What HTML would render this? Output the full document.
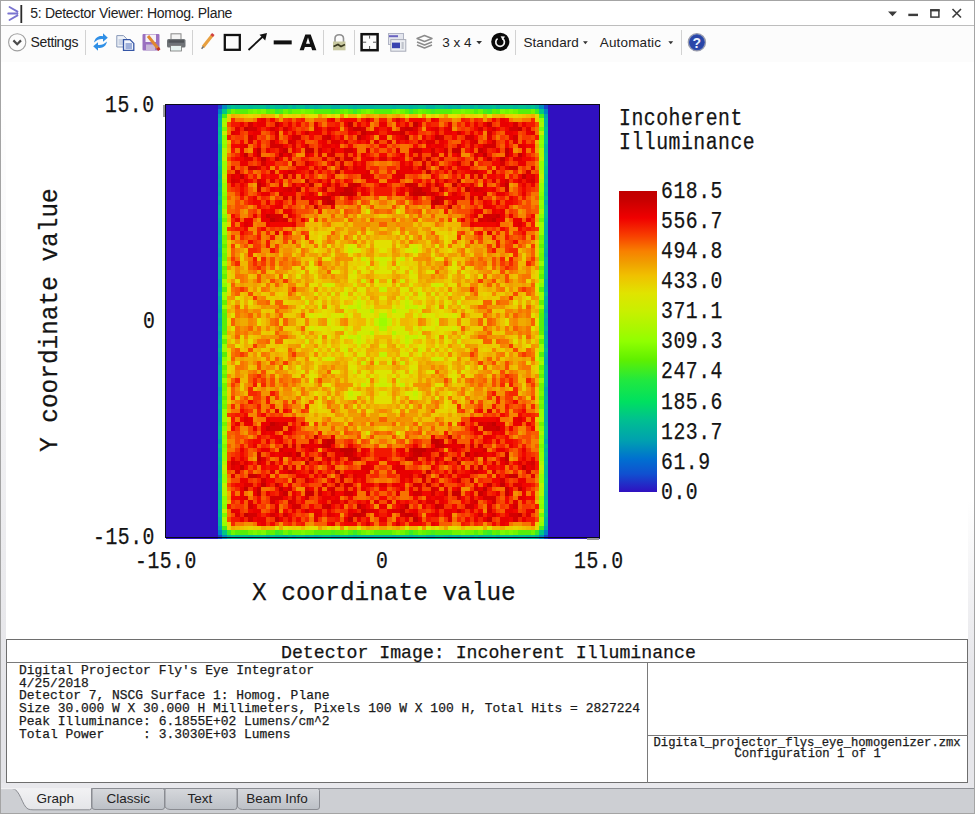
<!DOCTYPE html>
<html><head><meta charset="utf-8"><style>
html,body{margin:0;padding:0;width:975px;height:814px;overflow:hidden;background:#fff;position:relative}
.m{position:absolute;font-family:"Liberation Mono",monospace;white-space:pre;transform-origin:0 0;-webkit-text-stroke:0.25px currentColor}
.s{position:absolute;font-family:"Liberation Sans",sans-serif;white-space:pre}
</style></head><body>
<div style="position:absolute;left:0px;top:0px;width:975px;height:814px;box-sizing:border-box;border:1px solid #a4a4a4;"></div><div style="position:absolute;left:1px;top:100px;width:5px;height:683px;background:linear-gradient(#ffffff,#e4e4e8 90%);"></div><div style="position:absolute;left:968px;top:500px;width:6px;height:283px;background:linear-gradient(#ffffff,#e6e6ea 60%);"></div><div style="position:absolute;left:1px;top:25px;width:973px;height:1px;background:#bdbdbd;"></div><svg style="position:absolute;left:6px;top:4px" width="18" height="20" viewBox="0 0 18 20">
<path d="M3.5 3 L11.5 7.6 M2.2 9.5 H11.5 M3.5 16 L11.5 11.4" stroke="#7a74d0" stroke-width="1.8" fill="none" stroke-linecap="round"/>
<path d="M15.3 1 V19" stroke="#2a2a2a" stroke-width="1.8"/>
</svg><div class="s" style="left:30.30px;top:6.45px;font-size:14px;line-height:14px;letter-spacing:-0.3px;color:#222;">5: Detector Viewer: Homog. Plane</div><svg style="position:absolute;left:880px;top:5px" width="90" height="16" viewBox="0 0 90 16">
<path d="M8 6.5 H17 L12.5 11.2 Z" fill="#3c3c3c"/>
<rect x="28.3" y="8.7" width="9.7" height="2.4" fill="#3c3c3c"/>
<rect x="50.9" y="4.9" width="8" height="7.2" fill="none" stroke="#3c3c3c" stroke-width="1.5"/>
<rect x="50.2" y="4.2" width="9.4" height="2.2" fill="#3c3c3c"/>
<path d="M72.5 4 L81 12.5 M81 4 L72.5 12.5" stroke="#3c3c3c" stroke-width="1.6"/>
</svg><div style="position:absolute;left:1px;top:26px;width:973px;height:36px;background:#fcfcfc;"></div><div style="position:absolute;left:85px;top:30px;width:1px;height:25px;background:#d2d2d2;"></div><div style="position:absolute;left:192px;top:30px;width:1px;height:25px;background:#d2d2d2;"></div><div style="position:absolute;left:323px;top:30px;width:1px;height:25px;background:#d2d2d2;"></div><div style="position:absolute;left:354px;top:30px;width:1px;height:25px;background:#d2d2d2;"></div><div style="position:absolute;left:515px;top:30px;width:1px;height:25px;background:#d2d2d2;"></div><div style="position:absolute;left:681px;top:30px;width:1px;height:25px;background:#d2d2d2;"></div><svg style="position:absolute;left:0;top:26px" width="975" height="34" viewBox="0 26 975 34">
<circle cx="17.2" cy="42.3" r="8.6" fill="none" stroke="#a0a0a0" stroke-width="1.1"/>
<path d="M13.4 40.4 L17.2 44.2 L21 40.4" fill="none" stroke="#4a4a4a" stroke-width="2.2"/>
<!-- refresh -->
<path d="M94 42.5 C95 37.5 99 35.3 103 36.3 L103 33.3 L107.8 37.8 L103 41.8 L103 39 C100 38.6 97 39.6 94 42.5 Z" fill="#2f8fe6"/>
<path d="M107 41.5 C106 46.5 102 48.7 98 47.7 L98 50.7 L93.2 46.2 L98 42.2 L98 45 C101 45.4 104 44.4 107 41.5 Z" fill="#2f8fe6"/>
<!-- copy -->
<path d="M116.8 35.6 H123.5 L126.5 38.6 V47 H116.8 Z" fill="#eef2f8" stroke="#8898b8" stroke-width="1"/>
<path d="M118.5 40 H124 M118.5 42 H124 M118.5 44 H124" stroke="#98a8c8" stroke-width="0.8"/>
<path d="M123.5 39.6 H130 L133.8 43.4 V50.4 H123.5 Z" fill="#f2f6fd" stroke="#3556a6" stroke-width="1.3"/>
<path d="M125.5 44 H132 M125.5 46 H132 M125.5 48 H132" stroke="#4a6ab8" stroke-width="1"/>
<!-- save -->
<rect x="142.5" y="34" width="17" height="16.5" rx="1" fill="#9a70c0"/>
<rect x="145.5" y="34.5" width="10.5" height="7.5" fill="#f4f0f8"/>
<rect x="146" y="44.5" width="9" height="6" fill="#c8b8d8"/>
<path d="M148 36 L158.5 49" stroke="#e08830" stroke-width="3"/>
<path d="M157.6 47.8 L159.3 50.2" stroke="#c03020" stroke-width="3"/>
<!-- printer -->
<rect x="171" y="33.8" width="10" height="6" fill="#f4f4f4" stroke="#888" stroke-width="1"/>
<rect x="167" y="39" width="18.5" height="8.5" rx="1.5" fill="#707478"/>
<rect x="168.5" y="40.2" width="15.5" height="2.5" fill="#505458"/>
<rect x="170.5" y="45.5" width="11" height="5.5" fill="#e8f4f0" stroke="#777" stroke-width="0.8"/>
<!-- pencil -->
<path d="M203 47 L212.5 35" stroke="#e8a040" stroke-width="3.2" stroke-linecap="butt"/>
<path d="M211.7 36 L213.3 34" stroke="#d04040" stroke-width="3.2"/>
<path d="M201.6 48.8 L203.5 46.5" stroke="#707070" stroke-width="1.5"/>
<!-- rect -->
<rect x="224.8" y="35" width="15" height="14.8" fill="none" stroke="#111" stroke-width="2.3"/>
<!-- arrow -->
<path d="M248.5 50 L265 34.5" stroke="#111" stroke-width="1.8"/>
<path d="M267 33 L259.5 34.8 L265.2 40.5 Z" fill="#111"/>
<!-- line -->
<rect x="273.7" y="40.4" width="18" height="4" fill="#111"/>
<!-- A -->
<path fill-rule="evenodd" fill="#111" d="M299.6 50.3 L305.3 34.6 H310.7 L316.4 50.3 H312.2 L311.1 47.1 H304.9 L303.8 50.3 Z M306 43.8 H310 L308 37.6 Z"/>
<!-- lock -->
<path d="M335 42 V38.5 C335 33.5 343.5 33.5 343.5 38.5 V42" fill="none" stroke="#909090" stroke-width="1.6"/>
<rect x="333" y="41.5" width="12.5" height="8.8" fill="#c8c8a0"/>
<path d="M333.5 46.5 L338 44.5 L341 46.5 L345 44.5" stroke="#3a3a20" stroke-width="1.6" fill="none"/>
<!-- fit -->
<rect x="361.6" y="34.2" width="16" height="16" fill="none" stroke="#111" stroke-width="2.5"/>
<path d="M369.6 35.5 V38.6 M369.6 46 V49 M363 42.2 H366.2 M373 42.2 H376.2" stroke="#555" stroke-width="1"/>
<!-- window -->
<rect x="388.5" y="33.5" width="15" height="11" fill="#e4e6ee" stroke="#b0b4c4" stroke-width="1"/>
<rect x="389" y="35.2" width="9" height="2" fill="#6a64c0"/>
<rect x="390.8" y="39.6" width="15" height="11.6" fill="#eceef2" stroke="#a8acb8" stroke-width="1"/>
<rect x="392" y="42.6" width="8" height="5.6" fill="#3a44b0"/>
<rect x="401.5" y="42" width="2.2" height="7" fill="#c0c4cc"/>
<!-- layers -->
<path d="M417 38.5 L424.5 35.5 L432 38.5 L424.5 41.5 Z M417 42 L424.5 45 L432 42 M417 45 L424.5 48 L432 45" fill="none" stroke="#8c8c8c" stroke-width="1.4" stroke-linejoin="round"/>
<!-- dropdown arrows -->
<path d="M476.3 41 H482 L479.15 44.2 Z" fill="#333"/>
<path d="M583 41.3 H587.8 L585.4 44.3 Z" fill="#333"/>
<path d="M668.3 41.3 H673.2 L670.75 44.3 Z" fill="#333"/>
<!-- timer -->
<circle cx="500.3" cy="41.8" r="9.1" fill="#0a0a0a"/>
<path d="M502.6 38.6 A4.3 4.3 0 1 1 497.6 38.6" fill="none" stroke="#f4f4f4" stroke-width="1.7"/>
<path d="M500.6 36.2 L505 36.4 L502.6 40.2 Z" fill="#f4f4f4"/>
<!-- help -->
<circle cx="696.9" cy="42.3" r="8.6" fill="#3558b8" stroke="#9a9cac" stroke-width="1.3"/>
<circle cx="696.9" cy="42.3" r="7.4" fill="#2a46a8"/>
<text x="692.6" y="47.8" font-family="Liberation Sans" font-weight="bold" font-size="14" fill="#e8f0ff">?</text>
</svg><div class="s" style="left:30.60px;top:34.95px;font-size:14px;line-height:14px;letter-spacing:-0.4px;color:#222;">Settings</div><div class="s" style="left:442.30px;top:35.87px;font-size:13.5px;line-height:13.5px;letter-spacing:0px;color:#222;">3 x 4</div><div class="s" style="left:523.40px;top:36.37px;font-size:13.5px;line-height:13.5px;letter-spacing:0.1px;color:#222;">Standard</div><div class="s" style="left:599.80px;top:36.37px;font-size:13.5px;line-height:13.5px;letter-spacing:0.15px;color:#222;">Automatic</div><div style="position:absolute;left:166px;top:105px;width:434px;height:434px;overflow:hidden;background:#3010c0"><svg width="434" height="434" viewBox="0 0 100 100" preserveAspectRatio="none" shape-rendering="crispEdges" style="display:block"><rect width="100" height="100" fill="#3010c0"/><path fill="#1743cd" d="M12 0h1v1h-1zM87 0h1v1h-1zM12 99h1v1h-1zM87 99h1v1h-1z"/><path fill="#007ec7" d="M12 1h1v1h-1zM87 1h1v1h-1zM12 98h1v1h-1zM87 98h1v1h-1z"/><path fill="#008abe" d="M13 0h1v1h-1zM86 0h1v1h-1zM13 99h1v1h-1zM86 99h1v1h-1z"/><path fill="#00a2ae" d="M12 2h1v1h-1zM87 2h1v1h-1zM12 34h1v1h-1zM87 34h1v1h-1zM12 40h1v1h-1zM87 40h1v1h-1zM12 41h1v1h-1zM87 41h1v1h-1zM12 47h1v1h-1zM87 47h1v1h-1zM12 52h1v1h-1zM87 52h1v1h-1zM12 58h1v1h-1zM87 58h1v1h-1zM12 59h1v1h-1zM87 59h1v1h-1zM12 65h1v1h-1zM87 65h1v1h-1zM12 97h1v1h-1zM87 97h1v1h-1z"/><path fill="#00a9a7" d="M12 22h1v1h-1zM87 22h1v1h-1zM12 27h1v1h-1zM87 27h1v1h-1zM12 28h1v1h-1zM87 28h1v1h-1zM12 29h1v1h-1zM87 29h1v1h-1zM12 31h1v1h-1zM87 31h1v1h-1zM12 33h1v1h-1zM87 33h1v1h-1zM12 42h1v1h-1zM87 42h1v1h-1zM12 44h1v1h-1zM87 44h1v1h-1zM12 46h1v1h-1zM87 46h1v1h-1zM12 49h1v1h-1zM87 49h1v1h-1zM12 50h1v1h-1zM87 50h1v1h-1zM12 53h1v1h-1zM87 53h1v1h-1zM12 55h1v1h-1zM87 55h1v1h-1zM12 57h1v1h-1zM87 57h1v1h-1zM12 66h1v1h-1zM87 66h1v1h-1zM12 68h1v1h-1zM87 68h1v1h-1zM12 70h1v1h-1zM87 70h1v1h-1zM12 71h1v1h-1zM87 71h1v1h-1zM12 72h1v1h-1zM87 72h1v1h-1zM12 77h1v1h-1zM87 77h1v1h-1z"/><path fill="#00b19f" d="M14 0h1v1h-1zM23 0h1v1h-1zM27 0h1v1h-1zM29 0h1v1h-1zM32 0h1v1h-1zM34 0h1v1h-1zM38 0h2v1h-2zM43 0h1v1h-1zM47 0h1v1h-1zM52 0h1v1h-1zM56 0h1v1h-1zM60 0h2v1h-2zM65 0h1v1h-1zM67 0h1v1h-1zM70 0h1v1h-1zM72 0h1v1h-1zM76 0h1v1h-1zM85 0h1v1h-1zM12 3h1v1h-1zM87 3h1v1h-1zM12 4h1v1h-1zM87 4h1v1h-1zM12 9h1v1h-1zM87 9h1v1h-1zM12 10h1v1h-1zM87 10h1v1h-1zM12 16h1v1h-1zM87 16h1v1h-1zM12 18h1v1h-1zM87 18h1v1h-1zM12 20h1v1h-1zM87 20h1v1h-1zM12 26h1v1h-1zM87 26h1v1h-1zM12 30h1v1h-1zM87 30h1v1h-1zM12 32h1v1h-1zM87 32h1v1h-1zM12 35h1v1h-1zM87 35h1v1h-1zM12 36h1v1h-1zM87 36h1v1h-1zM12 37h1v1h-1zM87 37h1v1h-1zM12 38h1v1h-1zM87 38h1v1h-1zM12 39h1v1h-1zM87 39h1v1h-1zM12 45h1v1h-1zM87 45h1v1h-1zM12 48h1v1h-1zM87 48h1v1h-1zM12 51h1v1h-1zM87 51h1v1h-1zM12 54h1v1h-1zM87 54h1v1h-1zM12 60h1v1h-1zM87 60h1v1h-1zM12 61h1v1h-1zM87 61h1v1h-1zM12 62h1v1h-1zM87 62h1v1h-1zM12 63h1v1h-1zM87 63h1v1h-1zM12 64h1v1h-1zM87 64h1v1h-1zM12 67h1v1h-1zM87 67h1v1h-1zM12 69h1v1h-1zM87 69h1v1h-1zM12 73h1v1h-1zM87 73h1v1h-1zM12 79h1v1h-1zM87 79h1v1h-1zM12 81h1v1h-1zM87 81h1v1h-1zM12 83h1v1h-1zM87 83h1v1h-1zM12 89h1v1h-1zM87 89h1v1h-1zM12 90h1v1h-1zM87 90h1v1h-1zM12 95h1v1h-1zM87 95h1v1h-1zM12 96h1v1h-1zM87 96h1v1h-1zM14 99h1v1h-1zM23 99h1v1h-1zM27 99h1v1h-1zM29 99h1v1h-1zM32 99h1v1h-1zM34 99h1v1h-1zM38 99h2v1h-2zM43 99h1v1h-1zM47 99h1v1h-1zM52 99h1v1h-1zM56 99h1v1h-1zM60 99h2v1h-2zM65 99h1v1h-1zM67 99h1v1h-1zM70 99h1v1h-1zM72 99h1v1h-1zM76 99h1v1h-1zM85 99h1v1h-1z"/><path fill="#00b898" d="M16 0h1v1h-1zM19 0h1v1h-1zM25 0h2v1h-2zM33 0h1v1h-1zM35 0h1v1h-1zM42 0h1v1h-1zM44 0h3v1h-3zM48 0h4v1h-4zM53 0h3v1h-3zM57 0h1v1h-1zM64 0h1v1h-1zM66 0h1v1h-1zM73 0h2v1h-2zM80 0h1v1h-1zM83 0h1v1h-1zM12 6h1v1h-1zM87 6h1v1h-1zM12 11h1v1h-1zM87 11h1v1h-1zM12 12h1v1h-1zM87 12h1v1h-1zM12 14h1v1h-1zM87 14h1v1h-1zM12 15h1v1h-1zM87 15h1v1h-1zM12 17h1v1h-1zM87 17h1v1h-1zM12 19h1v1h-1zM87 19h1v1h-1zM12 23h1v1h-1zM87 23h1v1h-1zM12 24h1v1h-1zM87 24h1v1h-1zM12 25h1v1h-1zM87 25h1v1h-1zM12 43h1v1h-1zM87 43h1v1h-1zM12 56h1v1h-1zM87 56h1v1h-1zM12 74h1v1h-1zM87 74h1v1h-1zM12 75h1v1h-1zM87 75h1v1h-1zM12 76h1v1h-1zM87 76h1v1h-1zM12 80h1v1h-1zM87 80h1v1h-1zM12 82h1v1h-1zM87 82h1v1h-1zM12 84h1v1h-1zM87 84h1v1h-1zM12 85h1v1h-1zM87 85h1v1h-1zM12 87h1v1h-1zM87 87h1v1h-1zM12 88h1v1h-1zM87 88h1v1h-1zM12 93h1v1h-1zM87 93h1v1h-1zM16 99h1v1h-1zM19 99h1v1h-1zM25 99h2v1h-2zM33 99h1v1h-1zM35 99h1v1h-1zM42 99h1v1h-1zM44 99h3v1h-3zM48 99h4v1h-4zM53 99h3v1h-3zM57 99h1v1h-1zM64 99h1v1h-1zM66 99h1v1h-1zM73 99h2v1h-2zM80 99h1v1h-1zM83 99h1v1h-1z"/><path fill="#00bf91" d="M15 0h1v1h-1zM17 0h2v1h-2zM20 0h3v1h-3zM24 0h1v1h-1zM28 0h1v1h-1zM30 0h2v1h-2zM36 0h2v1h-2zM40 0h2v1h-2zM58 0h2v1h-2zM62 0h2v1h-2zM68 0h2v1h-2zM71 0h1v1h-1zM75 0h1v1h-1zM77 0h3v1h-3zM81 0h2v1h-2zM84 0h1v1h-1zM12 5h1v1h-1zM87 5h1v1h-1zM12 7h1v1h-1zM87 7h1v1h-1zM12 8h1v1h-1zM87 8h1v1h-1zM12 13h1v1h-1zM87 13h1v1h-1zM12 21h1v1h-1zM87 21h1v1h-1zM12 78h1v1h-1zM87 78h1v1h-1zM12 86h1v1h-1zM87 86h1v1h-1zM12 91h1v1h-1zM87 91h1v1h-1zM12 92h1v1h-1zM87 92h1v1h-1zM12 94h1v1h-1zM87 94h1v1h-1zM15 99h1v1h-1zM17 99h2v1h-2zM20 99h3v1h-3zM24 99h1v1h-1zM28 99h1v1h-1zM30 99h2v1h-2zM36 99h2v1h-2zM40 99h2v1h-2zM58 99h2v1h-2zM62 99h2v1h-2zM68 99h2v1h-2zM71 99h1v1h-1zM75 99h1v1h-1zM77 99h3v1h-3zM81 99h2v1h-2zM84 99h1v1h-1z"/><path fill="#00c785" d="M13 1h1v1h-1zM86 1h1v1h-1zM13 98h1v1h-1zM86 98h1v1h-1z"/><path fill="#39eb27" d="M14 1h1v1h-1zM25 1h1v1h-1zM43 1h1v1h-1zM56 1h1v1h-1zM74 1h1v1h-1zM85 1h1v1h-1zM14 98h1v1h-1zM25 98h1v1h-1zM43 98h1v1h-1zM56 98h1v1h-1zM74 98h1v1h-1zM85 98h1v1h-1z"/><path fill="#47ed19" d="M26 1h1v1h-1zM38 1h1v1h-1zM61 1h1v1h-1zM73 1h1v1h-1zM13 2h1v1h-1zM86 2h1v1h-1zM13 97h1v1h-1zM86 97h1v1h-1zM26 98h1v1h-1zM38 98h1v1h-1zM61 98h1v1h-1zM73 98h1v1h-1z"/><path fill="#56ef0a" d="M16 1h3v1h-3zM23 1h1v1h-1zM28 1h1v1h-1zM34 1h4v1h-4zM39 1h1v1h-1zM42 1h1v1h-1zM44 1h1v1h-1zM48 1h4v1h-4zM55 1h1v1h-1zM57 1h1v1h-1zM60 1h1v1h-1zM62 1h4v1h-4zM71 1h1v1h-1zM76 1h1v1h-1zM81 1h3v1h-3zM13 42h1v1h-1zM86 42h1v1h-1zM13 48h1v1h-1zM86 48h1v1h-1zM13 49h1v1h-1zM86 49h1v1h-1zM13 50h1v1h-1zM86 50h1v1h-1zM13 51h1v1h-1zM86 51h1v1h-1zM13 57h1v1h-1zM86 57h1v1h-1zM16 98h3v1h-3zM23 98h1v1h-1zM28 98h1v1h-1zM34 98h4v1h-4zM39 98h1v1h-1zM42 98h1v1h-1zM44 98h1v1h-1zM48 98h4v1h-4zM55 98h1v1h-1zM57 98h1v1h-1zM60 98h1v1h-1zM62 98h4v1h-4zM71 98h1v1h-1zM76 98h1v1h-1zM81 98h3v1h-3z"/><path fill="#64f100" d="M24 1h1v1h-1zM40 1h1v1h-1zM59 1h1v1h-1zM75 1h1v1h-1zM13 32h1v1h-1zM86 32h1v1h-1zM13 37h1v1h-1zM86 37h1v1h-1zM13 39h1v1h-1zM86 39h1v1h-1zM13 45h1v1h-1zM86 45h1v1h-1zM13 47h1v1h-1zM86 47h1v1h-1zM13 52h1v1h-1zM86 52h1v1h-1zM13 54h1v1h-1zM86 54h1v1h-1zM13 60h1v1h-1zM86 60h1v1h-1zM13 62h1v1h-1zM86 62h1v1h-1zM13 67h1v1h-1zM86 67h1v1h-1zM24 98h1v1h-1zM40 98h1v1h-1zM59 98h1v1h-1zM75 98h1v1h-1z"/><path fill="#70f500" d="M15 1h1v1h-1zM19 1h1v1h-1zM21 1h1v1h-1zM27 1h1v1h-1zM29 1h2v1h-2zM32 1h2v1h-2zM41 1h1v1h-1zM45 1h1v1h-1zM47 1h1v1h-1zM52 1h1v1h-1zM54 1h1v1h-1zM58 1h1v1h-1zM66 1h2v1h-2zM69 1h2v1h-2zM72 1h1v1h-1zM78 1h1v1h-1zM80 1h1v1h-1zM84 1h1v1h-1zM13 26h1v1h-1zM86 26h1v1h-1zM13 30h1v1h-1zM86 30h1v1h-1zM13 34h1v1h-1zM86 34h1v1h-1zM13 35h1v1h-1zM86 35h1v1h-1zM13 64h1v1h-1zM86 64h1v1h-1zM13 65h1v1h-1zM86 65h1v1h-1zM13 69h1v1h-1zM86 69h1v1h-1zM13 73h1v1h-1zM86 73h1v1h-1zM15 98h1v1h-1zM19 98h1v1h-1zM21 98h1v1h-1zM27 98h1v1h-1zM29 98h2v1h-2zM32 98h2v1h-2zM41 98h1v1h-1zM45 98h1v1h-1zM47 98h1v1h-1zM52 98h1v1h-1zM54 98h1v1h-1zM58 98h1v1h-1zM66 98h2v1h-2zM69 98h2v1h-2zM72 98h1v1h-1zM78 98h1v1h-1zM80 98h1v1h-1zM84 98h1v1h-1z"/><path fill="#7df900" d="M20 1h1v1h-1zM22 1h1v1h-1zM31 1h1v1h-1zM46 1h1v1h-1zM53 1h1v1h-1zM68 1h1v1h-1zM77 1h1v1h-1zM79 1h1v1h-1zM13 5h1v1h-1zM86 5h1v1h-1zM13 21h1v1h-1zM86 21h1v1h-1zM13 31h1v1h-1zM86 31h1v1h-1zM13 33h1v1h-1zM86 33h1v1h-1zM13 38h1v1h-1zM86 38h1v1h-1zM13 61h1v1h-1zM86 61h1v1h-1zM13 66h1v1h-1zM86 66h1v1h-1zM13 68h1v1h-1zM86 68h1v1h-1zM13 78h1v1h-1zM86 78h1v1h-1zM13 94h1v1h-1zM86 94h1v1h-1zM20 98h1v1h-1zM22 98h1v1h-1zM31 98h1v1h-1zM46 98h1v1h-1zM53 98h1v1h-1zM68 98h1v1h-1zM77 98h1v1h-1zM79 98h1v1h-1z"/><path fill="#8afd00" d="M13 7h1v1h-1zM86 7h1v1h-1zM13 9h1v1h-1zM86 9h1v1h-1zM13 20h1v1h-1zM86 20h1v1h-1zM13 23h1v1h-1zM86 23h1v1h-1zM13 25h1v1h-1zM86 25h1v1h-1zM13 41h1v1h-1zM86 41h1v1h-1zM13 58h1v1h-1zM86 58h1v1h-1zM13 74h1v1h-1zM86 74h1v1h-1zM13 76h1v1h-1zM86 76h1v1h-1zM13 79h1v1h-1zM86 79h1v1h-1zM13 90h1v1h-1zM86 90h1v1h-1zM13 92h1v1h-1zM86 92h1v1h-1z"/><path fill="#95fe00" d="M13 3h1v1h-1zM86 3h1v1h-1zM13 8h1v1h-1zM86 8h1v1h-1zM13 13h1v1h-1zM86 13h1v1h-1zM13 14h1v1h-1zM86 14h1v1h-1zM13 18h1v1h-1zM86 18h1v1h-1zM13 19h1v1h-1zM86 19h1v1h-1zM13 22h1v1h-1zM86 22h1v1h-1zM13 28h1v1h-1zM86 28h1v1h-1zM13 29h1v1h-1zM86 29h1v1h-1zM13 36h1v1h-1zM86 36h1v1h-1zM13 44h1v1h-1zM86 44h1v1h-1zM13 46h1v1h-1zM86 46h1v1h-1zM13 53h1v1h-1zM86 53h1v1h-1zM13 55h1v1h-1zM86 55h1v1h-1zM13 63h1v1h-1zM86 63h1v1h-1zM13 70h1v1h-1zM86 70h1v1h-1zM13 71h1v1h-1zM86 71h1v1h-1zM13 77h1v1h-1zM86 77h1v1h-1zM13 80h1v1h-1zM86 80h1v1h-1zM13 81h1v1h-1zM86 81h1v1h-1zM13 85h1v1h-1zM86 85h1v1h-1zM13 86h1v1h-1zM86 86h1v1h-1zM13 91h1v1h-1zM86 91h1v1h-1zM13 96h1v1h-1zM86 96h1v1h-1z"/><path fill="#9efb00" d="M13 27h1v1h-1zM86 27h1v1h-1zM13 40h1v1h-1zM86 40h1v1h-1zM13 43h1v1h-1zM86 43h1v1h-1zM49 49h2v1h-2zM49 50h2v1h-2zM13 56h1v1h-1zM86 56h1v1h-1zM13 59h1v1h-1zM86 59h1v1h-1zM13 72h1v1h-1zM86 72h1v1h-1z"/><path fill="#a8f800" d="M13 4h1v1h-1zM86 4h1v1h-1zM13 24h1v1h-1zM86 24h1v1h-1zM13 75h1v1h-1zM86 75h1v1h-1zM13 95h1v1h-1zM86 95h1v1h-1z"/><path fill="#b0f600" d="M13 10h1v1h-1zM86 10h1v1h-1zM13 11h1v1h-1zM86 11h1v1h-1zM13 15h1v1h-1zM86 15h1v1h-1zM13 17h1v1h-1zM86 17h1v1h-1zM47 47h1v1h-1zM52 47h1v1h-1zM49 48h2v1h-2zM49 51h2v1h-2zM47 52h1v1h-1zM52 52h1v1h-1zM13 82h1v1h-1zM86 82h1v1h-1zM13 84h1v1h-1zM86 84h1v1h-1zM13 88h1v1h-1zM86 88h1v1h-1zM13 89h1v1h-1zM86 89h1v1h-1z"/><path fill="#b9f400" d="M13 12h1v1h-1zM86 12h1v1h-1zM44 46h1v1h-1zM55 46h1v1h-1zM44 53h1v1h-1zM55 53h1v1h-1zM13 87h1v1h-1zM86 87h1v1h-1z"/><path fill="#c1f200" d="M13 6h1v1h-1zM86 6h1v1h-1zM13 16h1v1h-1zM86 16h1v1h-1zM42 33h1v1h-1zM57 33h1v1h-1zM45 35h1v1h-1zM54 35h1v1h-1zM49 42h2v1h-2zM44 45h1v1h-1zM55 45h1v1h-1zM42 46h1v1h-1zM57 46h1v1h-1zM48 49h1v1h-1zM51 49h1v1h-1zM48 50h1v1h-1zM51 50h1v1h-1zM42 53h1v1h-1zM57 53h1v1h-1zM44 54h1v1h-1zM55 54h1v1h-1zM49 57h2v1h-2zM45 64h1v1h-1zM54 64h1v1h-1zM42 66h1v1h-1zM57 66h1v1h-1zM13 83h1v1h-1zM86 83h1v1h-1zM13 93h1v1h-1zM86 93h1v1h-1z"/><path fill="#c9ef00" d="M49 35h2v1h-2zM45 40h1v1h-1zM54 40h1v1h-1zM14 41h1v1h-1zM37 41h1v1h-1zM62 41h1v1h-1zM85 41h1v1h-1zM41 43h1v1h-1zM58 43h1v1h-1zM43 46h1v1h-1zM56 46h1v1h-1zM40 48h1v1h-1zM59 48h1v1h-1zM40 51h1v1h-1zM59 51h1v1h-1zM43 53h1v1h-1zM56 53h1v1h-1zM41 56h1v1h-1zM58 56h1v1h-1zM14 58h1v1h-1zM37 58h1v1h-1zM62 58h1v1h-1zM85 58h1v1h-1zM45 59h1v1h-1zM54 59h1v1h-1zM49 64h2v1h-2z"/><path fill="#d0ec00" d="M42 32h1v1h-1zM57 32h1v1h-1zM46 36h1v1h-1zM49 36h2v1h-2zM53 36h1v1h-1zM43 38h1v1h-1zM56 38h1v1h-1zM48 40h1v1h-1zM51 40h1v1h-1zM38 41h1v1h-1zM61 41h1v1h-1zM44 44h1v1h-1zM55 44h1v1h-1zM32 45h1v1h-1zM67 45h1v1h-1zM35 46h1v1h-1zM40 46h1v1h-1zM59 46h1v1h-1zM64 46h1v1h-1zM41 47h1v1h-1zM44 47h3v1h-3zM53 47h3v1h-3zM58 47h1v1h-1zM33 48h1v1h-1zM45 48h1v1h-1zM54 48h1v1h-1zM66 48h1v1h-1zM37 49h1v1h-1zM62 49h1v1h-1zM37 50h1v1h-1zM62 50h1v1h-1zM33 51h1v1h-1zM45 51h1v1h-1zM54 51h1v1h-1zM66 51h1v1h-1zM41 52h1v1h-1zM44 52h3v1h-3zM53 52h3v1h-3zM58 52h1v1h-1zM35 53h1v1h-1zM40 53h1v1h-1zM59 53h1v1h-1zM64 53h1v1h-1zM32 54h1v1h-1zM67 54h1v1h-1zM44 55h1v1h-1zM55 55h1v1h-1zM38 58h1v1h-1zM61 58h1v1h-1zM48 59h1v1h-1zM51 59h1v1h-1zM43 61h1v1h-1zM56 61h1v1h-1zM46 63h1v1h-1zM49 63h2v1h-2zM53 63h1v1h-1zM42 67h1v1h-1zM57 67h1v1h-1z"/><path fill="#d6e900" d="M46 24h1v1h-1zM53 24h1v1h-1zM43 32h1v1h-1zM56 32h1v1h-1zM43 33h2v1h-2zM55 33h2v1h-2zM48 35h1v1h-1zM51 35h1v1h-1zM36 41h1v1h-1zM43 41h1v1h-1zM56 41h1v1h-1zM63 41h1v1h-1zM41 42h1v1h-1zM44 42h1v1h-1zM55 42h1v1h-1zM58 42h1v1h-1zM34 43h1v1h-1zM38 43h1v1h-1zM61 43h1v1h-1zM65 43h1v1h-1zM43 45h1v1h-1zM45 45h1v1h-1zM54 45h1v1h-1zM56 45h1v1h-1zM37 46h1v1h-1zM47 46h1v1h-1zM52 46h1v1h-1zM62 46h1v1h-1zM35 48h1v1h-1zM38 48h1v1h-1zM42 48h1v1h-1zM46 48h1v1h-1zM53 48h1v1h-1zM57 48h1v1h-1zM61 48h1v1h-1zM64 48h1v1h-1zM35 51h1v1h-1zM38 51h1v1h-1zM42 51h1v1h-1zM46 51h1v1h-1zM53 51h1v1h-1zM57 51h1v1h-1zM61 51h1v1h-1zM64 51h1v1h-1zM37 53h1v1h-1zM47 53h1v1h-1zM52 53h1v1h-1zM62 53h1v1h-1zM43 54h1v1h-1zM45 54h1v1h-1zM54 54h1v1h-1zM56 54h1v1h-1zM34 56h1v1h-1zM38 56h1v1h-1zM61 56h1v1h-1zM65 56h1v1h-1zM41 57h1v1h-1zM44 57h1v1h-1zM55 57h1v1h-1zM58 57h1v1h-1zM36 58h1v1h-1zM43 58h1v1h-1zM56 58h1v1h-1zM63 58h1v1h-1zM48 64h1v1h-1zM51 64h1v1h-1zM43 66h2v1h-2zM55 66h2v1h-2zM43 67h1v1h-1zM56 67h1v1h-1zM46 75h1v1h-1zM53 75h1v1h-1z"/><path fill="#dce600" d="M25 2h1v1h-1zM39 2h1v1h-1zM41 2h1v1h-1zM44 2h1v1h-1zM55 2h1v1h-1zM58 2h1v1h-1zM60 2h1v1h-1zM74 2h1v1h-1zM37 32h1v1h-1zM62 32h1v1h-1zM49 33h2v1h-2zM37 35h1v1h-1zM62 35h1v1h-1zM33 36h1v1h-1zM66 36h1v1h-1zM33 37h1v1h-1zM45 37h1v1h-1zM47 37h1v1h-1zM49 37h2v1h-2zM52 37h1v1h-1zM54 37h1v1h-1zM66 37h1v1h-1zM31 38h1v1h-1zM38 38h1v1h-1zM45 38h1v1h-1zM48 38h4v1h-4zM54 38h1v1h-1zM61 38h1v1h-1zM68 38h1v1h-1zM30 39h1v1h-1zM42 39h2v1h-2zM56 39h2v1h-2zM69 39h1v1h-1zM46 41h1v1h-1zM53 41h1v1h-1zM45 42h1v1h-1zM54 42h1v1h-1zM40 43h1v1h-1zM43 43h1v1h-1zM56 43h1v1h-1zM59 43h1v1h-1zM31 44h1v1h-1zM37 44h1v1h-1zM40 44h2v1h-2zM49 44h2v1h-2zM58 44h2v1h-2zM62 44h1v1h-1zM68 44h1v1h-1zM35 45h1v1h-1zM64 45h1v1h-1zM31 46h1v1h-1zM41 46h1v1h-1zM45 46h1v1h-1zM54 46h1v1h-1zM58 46h1v1h-1zM68 46h1v1h-1zM49 47h2v1h-2zM39 48h1v1h-1zM47 48h1v1h-1zM52 48h1v1h-1zM60 48h1v1h-1zM46 49h1v1h-1zM53 49h1v1h-1zM46 50h1v1h-1zM53 50h1v1h-1zM39 51h1v1h-1zM47 51h1v1h-1zM52 51h1v1h-1zM60 51h1v1h-1zM49 52h2v1h-2zM31 53h1v1h-1zM41 53h1v1h-1zM45 53h1v1h-1zM54 53h1v1h-1zM58 53h1v1h-1zM68 53h1v1h-1zM35 54h1v1h-1zM64 54h1v1h-1zM31 55h1v1h-1zM37 55h1v1h-1zM40 55h2v1h-2zM49 55h2v1h-2zM58 55h2v1h-2zM62 55h1v1h-1zM68 55h1v1h-1zM40 56h1v1h-1zM43 56h1v1h-1zM56 56h1v1h-1zM59 56h1v1h-1zM45 57h1v1h-1zM54 57h1v1h-1zM46 58h1v1h-1zM53 58h1v1h-1zM30 60h1v1h-1zM42 60h2v1h-2zM56 60h2v1h-2zM69 60h1v1h-1zM31 61h1v1h-1zM38 61h1v1h-1zM45 61h1v1h-1zM48 61h4v1h-4zM54 61h1v1h-1zM61 61h1v1h-1zM68 61h1v1h-1zM33 62h1v1h-1zM45 62h1v1h-1zM47 62h1v1h-1zM49 62h2v1h-2zM52 62h1v1h-1zM54 62h1v1h-1zM66 62h1v1h-1zM33 63h1v1h-1zM66 63h1v1h-1zM37 64h1v1h-1zM62 64h1v1h-1zM49 66h2v1h-2zM37 67h1v1h-1zM62 67h1v1h-1zM25 97h1v1h-1zM39 97h1v1h-1zM41 97h1v1h-1zM44 97h1v1h-1zM55 97h1v1h-1zM58 97h1v1h-1zM60 97h1v1h-1zM74 97h1v1h-1z"/><path fill="#e2e000" d="M27 2h1v1h-1zM33 2h2v1h-2zM37 2h1v1h-1zM62 2h1v1h-1zM65 2h2v1h-2zM72 2h1v1h-1zM46 29h1v1h-1zM53 29h1v1h-1zM35 30h1v1h-1zM43 30h1v1h-1zM56 30h1v1h-1zM64 30h1v1h-1zM35 31h1v1h-1zM48 31h4v1h-4zM64 31h1v1h-1zM41 32h1v1h-1zM46 32h1v1h-1zM48 32h4v1h-4zM53 32h1v1h-1zM58 32h1v1h-1zM34 33h1v1h-1zM41 33h1v1h-1zM58 33h1v1h-1zM65 33h1v1h-1zM38 34h1v1h-1zM42 34h1v1h-1zM57 34h1v1h-1zM61 34h1v1h-1zM36 35h1v1h-1zM43 35h1v1h-1zM46 35h1v1h-1zM53 35h1v1h-1zM56 35h1v1h-1zM63 35h1v1h-1zM34 37h1v1h-1zM44 37h1v1h-1zM55 37h1v1h-1zM65 37h1v1h-1zM33 38h1v1h-1zM39 38h1v1h-1zM60 38h1v1h-1zM66 38h1v1h-1zM27 39h1v1h-1zM34 39h1v1h-1zM65 39h1v1h-1zM72 39h1v1h-1zM42 40h1v1h-1zM57 40h1v1h-1zM33 41h2v1h-2zM48 41h1v1h-1zM51 41h1v1h-1zM65 41h2v1h-2zM14 42h1v1h-1zM85 42h1v1h-1zM45 43h1v1h-1zM54 43h1v1h-1zM16 44h1v1h-1zM46 44h1v1h-1zM53 44h1v1h-1zM83 44h1v1h-1zM19 45h1v1h-1zM40 45h1v1h-1zM59 45h1v1h-1zM80 45h1v1h-1zM36 47h1v1h-1zM63 47h1v1h-1zM15 48h1v1h-1zM34 48h1v1h-1zM36 48h1v1h-1zM63 48h1v1h-1zM65 48h1v1h-1zM84 48h1v1h-1zM14 49h1v1h-1zM21 49h1v1h-1zM38 49h1v1h-1zM61 49h1v1h-1zM78 49h1v1h-1zM85 49h1v1h-1zM14 50h1v1h-1zM21 50h1v1h-1zM38 50h1v1h-1zM61 50h1v1h-1zM78 50h1v1h-1zM85 50h1v1h-1zM15 51h1v1h-1zM34 51h1v1h-1zM36 51h1v1h-1zM63 51h1v1h-1zM65 51h1v1h-1zM84 51h1v1h-1zM36 52h1v1h-1zM63 52h1v1h-1zM19 54h1v1h-1zM40 54h1v1h-1zM59 54h1v1h-1zM80 54h1v1h-1zM16 55h1v1h-1zM46 55h1v1h-1zM53 55h1v1h-1zM83 55h1v1h-1zM45 56h1v1h-1zM54 56h1v1h-1zM14 57h1v1h-1zM85 57h1v1h-1zM33 58h2v1h-2zM48 58h1v1h-1zM51 58h1v1h-1zM65 58h2v1h-2zM42 59h1v1h-1zM57 59h1v1h-1zM27 60h1v1h-1zM34 60h1v1h-1zM65 60h1v1h-1zM72 60h1v1h-1zM33 61h1v1h-1zM39 61h1v1h-1zM60 61h1v1h-1zM66 61h1v1h-1zM34 62h1v1h-1zM44 62h1v1h-1zM55 62h1v1h-1zM65 62h1v1h-1zM36 64h1v1h-1zM43 64h1v1h-1zM46 64h1v1h-1zM53 64h1v1h-1zM56 64h1v1h-1zM63 64h1v1h-1zM38 65h1v1h-1zM42 65h1v1h-1zM57 65h1v1h-1zM61 65h1v1h-1zM34 66h1v1h-1zM41 66h1v1h-1zM58 66h1v1h-1zM65 66h1v1h-1zM41 67h1v1h-1zM46 67h1v1h-1zM48 67h4v1h-4zM53 67h1v1h-1zM58 67h1v1h-1zM35 68h1v1h-1zM48 68h4v1h-4zM64 68h1v1h-1zM35 69h1v1h-1zM43 69h1v1h-1zM56 69h1v1h-1zM64 69h1v1h-1zM46 70h1v1h-1zM53 70h1v1h-1zM27 97h1v1h-1zM33 97h2v1h-2zM37 97h1v1h-1zM62 97h1v1h-1zM65 97h2v1h-2zM72 97h1v1h-1z"/><path fill="#e6d600" d="M14 2h1v1h-1zM19 2h1v1h-1zM28 2h1v1h-1zM30 2h1v1h-1zM32 2h1v1h-1zM67 2h1v1h-1zM69 2h1v1h-1zM71 2h1v1h-1zM80 2h1v1h-1zM85 2h1v1h-1zM33 29h1v1h-1zM35 29h2v1h-2zM44 29h1v1h-1zM55 29h1v1h-1zM63 29h2v1h-2zM66 29h1v1h-1zM31 32h1v1h-1zM35 32h1v1h-1zM64 32h1v1h-1zM68 32h1v1h-1zM43 36h1v1h-1zM45 36h1v1h-1zM54 36h1v1h-1zM56 36h1v1h-1zM30 37h1v1h-1zM42 37h1v1h-1zM57 37h1v1h-1zM69 37h1v1h-1zM14 38h1v1h-1zM42 38h1v1h-1zM46 38h1v1h-1zM53 38h1v1h-1zM57 38h1v1h-1zM85 38h1v1h-1zM14 39h1v1h-1zM85 39h1v1h-1zM16 40h1v1h-1zM34 40h1v1h-1zM43 40h1v1h-1zM56 40h1v1h-1zM65 40h1v1h-1zM83 40h1v1h-1zM49 41h2v1h-2zM35 42h1v1h-1zM37 42h1v1h-1zM42 42h1v1h-1zM57 42h1v1h-1zM62 42h1v1h-1zM64 42h1v1h-1zM14 43h1v1h-1zM26 43h1v1h-1zM36 43h1v1h-1zM63 43h1v1h-1zM73 43h1v1h-1zM85 43h1v1h-1zM35 44h1v1h-1zM42 44h1v1h-1zM57 44h1v1h-1zM64 44h1v1h-1zM15 45h1v1h-1zM17 45h1v1h-1zM27 45h1v1h-1zM34 45h1v1h-1zM37 45h1v1h-1zM47 45h1v1h-1zM52 45h1v1h-1zM62 45h1v1h-1zM65 45h1v1h-1zM72 45h1v1h-1zM82 45h1v1h-1zM84 45h1v1h-1zM17 46h1v1h-1zM46 46h1v1h-1zM53 46h1v1h-1zM82 46h1v1h-1zM30 47h1v1h-1zM37 47h1v1h-1zM42 47h1v1h-1zM48 47h1v1h-1zM51 47h1v1h-1zM57 47h1v1h-1zM62 47h1v1h-1zM69 47h1v1h-1zM32 48h1v1h-1zM37 48h1v1h-1zM48 48h1v1h-1zM51 48h1v1h-1zM62 48h1v1h-1zM67 48h1v1h-1zM31 49h1v1h-1zM68 49h1v1h-1zM31 50h1v1h-1zM68 50h1v1h-1zM32 51h1v1h-1zM37 51h1v1h-1zM48 51h1v1h-1zM51 51h1v1h-1zM62 51h1v1h-1zM67 51h1v1h-1zM30 52h1v1h-1zM37 52h1v1h-1zM42 52h1v1h-1zM48 52h1v1h-1zM51 52h1v1h-1zM57 52h1v1h-1zM62 52h1v1h-1zM69 52h1v1h-1zM17 53h1v1h-1zM46 53h1v1h-1zM53 53h1v1h-1zM82 53h1v1h-1zM15 54h1v1h-1zM17 54h1v1h-1zM27 54h1v1h-1zM34 54h1v1h-1zM37 54h1v1h-1zM47 54h1v1h-1zM52 54h1v1h-1zM62 54h1v1h-1zM65 54h1v1h-1zM72 54h1v1h-1zM82 54h1v1h-1zM84 54h1v1h-1zM35 55h1v1h-1zM42 55h1v1h-1zM57 55h1v1h-1zM64 55h1v1h-1zM14 56h1v1h-1zM26 56h1v1h-1zM36 56h1v1h-1zM63 56h1v1h-1zM73 56h1v1h-1zM85 56h1v1h-1zM35 57h1v1h-1zM37 57h1v1h-1zM42 57h1v1h-1zM57 57h1v1h-1zM62 57h1v1h-1zM64 57h1v1h-1zM49 58h2v1h-2zM16 59h1v1h-1zM34 59h1v1h-1zM43 59h1v1h-1zM56 59h1v1h-1zM65 59h1v1h-1zM83 59h1v1h-1zM14 60h1v1h-1zM85 60h1v1h-1zM14 61h1v1h-1zM42 61h1v1h-1zM46 61h1v1h-1zM53 61h1v1h-1zM57 61h1v1h-1zM85 61h1v1h-1zM30 62h1v1h-1zM42 62h1v1h-1zM57 62h1v1h-1zM69 62h1v1h-1zM43 63h1v1h-1zM45 63h1v1h-1zM54 63h1v1h-1zM56 63h1v1h-1zM31 67h1v1h-1zM35 67h1v1h-1zM64 67h1v1h-1zM68 67h1v1h-1zM33 70h1v1h-1zM35 70h2v1h-2zM44 70h1v1h-1zM55 70h1v1h-1zM63 70h2v1h-2zM66 70h1v1h-1zM14 97h1v1h-1zM19 97h1v1h-1zM28 97h1v1h-1zM30 97h1v1h-1zM32 97h1v1h-1zM67 97h1v1h-1zM69 97h1v1h-1zM71 97h1v1h-1zM80 97h1v1h-1zM85 97h1v1h-1z"/><path fill="#eacd00" d="M18 2h1v1h-1zM20 2h2v1h-2zM29 2h1v1h-1zM38 2h1v1h-1zM61 2h1v1h-1zM70 2h1v1h-1zM78 2h2v1h-2zM81 2h1v1h-1zM14 3h1v1h-1zM85 3h1v1h-1zM44 25h1v1h-1zM49 25h2v1h-2zM55 25h1v1h-1zM33 26h1v1h-1zM41 26h1v1h-1zM58 26h1v1h-1zM66 26h1v1h-1zM14 27h1v1h-1zM85 27h1v1h-1zM37 28h2v1h-2zM61 28h2v1h-2zM37 29h1v1h-1zM47 29h1v1h-1zM52 29h1v1h-1zM62 29h1v1h-1zM33 30h2v1h-2zM40 30h1v1h-1zM45 30h1v1h-1zM54 30h1v1h-1zM59 30h1v1h-1zM65 30h2v1h-2zM14 31h1v1h-1zM31 31h1v1h-1zM34 31h1v1h-1zM39 31h1v1h-1zM46 31h1v1h-1zM53 31h1v1h-1zM60 31h1v1h-1zM65 31h1v1h-1zM68 31h1v1h-1zM85 31h1v1h-1zM14 33h1v1h-1zM30 33h1v1h-1zM35 33h1v1h-1zM38 33h1v1h-1zM45 33h1v1h-1zM48 33h1v1h-1zM51 33h1v1h-1zM54 33h1v1h-1zM61 33h1v1h-1zM64 33h1v1h-1zM69 33h1v1h-1zM85 33h1v1h-1zM14 34h1v1h-1zM17 34h1v1h-1zM29 34h1v1h-1zM48 34h1v1h-1zM51 34h1v1h-1zM70 34h1v1h-1zM82 34h1v1h-1zM85 34h1v1h-1zM17 35h1v1h-1zM33 35h1v1h-1zM66 35h1v1h-1zM82 35h1v1h-1zM42 36h1v1h-1zM44 36h1v1h-1zM48 36h1v1h-1zM51 36h1v1h-1zM55 36h1v1h-1zM57 36h1v1h-1zM29 37h1v1h-1zM32 37h1v1h-1zM48 37h1v1h-1zM51 37h1v1h-1zM67 37h1v1h-1zM70 37h1v1h-1zM30 38h1v1h-1zM34 38h1v1h-1zM65 38h1v1h-1zM69 38h1v1h-1zM15 39h1v1h-1zM49 39h2v1h-2zM84 39h1v1h-1zM35 40h1v1h-1zM64 40h1v1h-1zM30 41h1v1h-1zM69 41h1v1h-1zM21 42h1v1h-1zM33 42h1v1h-1zM39 42h1v1h-1zM60 42h1v1h-1zM66 42h1v1h-1zM78 42h1v1h-1zM22 43h1v1h-1zM25 43h1v1h-1zM27 43h1v1h-1zM30 43h1v1h-1zM44 43h1v1h-1zM55 43h1v1h-1zM69 43h1v1h-1zM72 43h1v1h-1zM74 43h1v1h-1zM77 43h1v1h-1zM17 44h1v1h-1zM23 44h2v1h-2zM26 44h1v1h-1zM73 44h1v1h-1zM75 44h2v1h-2zM82 44h1v1h-1zM24 45h1v1h-1zM28 45h2v1h-2zM49 45h2v1h-2zM70 45h2v1h-2zM75 45h1v1h-1zM14 46h1v1h-1zM19 46h1v1h-1zM30 46h1v1h-1zM38 46h1v1h-1zM61 46h1v1h-1zM69 46h1v1h-1zM80 46h1v1h-1zM85 46h1v1h-1zM22 47h1v1h-1zM24 47h1v1h-1zM29 47h1v1h-1zM32 47h1v1h-1zM35 47h1v1h-1zM38 47h1v1h-1zM61 47h1v1h-1zM64 47h1v1h-1zM67 47h1v1h-1zM70 47h1v1h-1zM75 47h1v1h-1zM77 47h1v1h-1zM27 48h3v1h-3zM41 48h1v1h-1zM58 48h1v1h-1zM70 48h3v1h-3zM26 49h1v1h-1zM30 49h1v1h-1zM33 49h2v1h-2zM39 49h1v1h-1zM42 49h1v1h-1zM47 49h1v1h-1zM52 49h1v1h-1zM57 49h1v1h-1zM60 49h1v1h-1zM65 49h2v1h-2zM69 49h1v1h-1zM73 49h1v1h-1zM26 50h1v1h-1zM30 50h1v1h-1zM33 50h2v1h-2zM39 50h1v1h-1zM42 50h1v1h-1zM47 50h1v1h-1zM52 50h1v1h-1zM57 50h1v1h-1zM60 50h1v1h-1zM65 50h2v1h-2zM69 50h1v1h-1zM73 50h1v1h-1zM27 51h3v1h-3zM41 51h1v1h-1zM58 51h1v1h-1zM70 51h3v1h-3zM22 52h1v1h-1zM24 52h1v1h-1zM29 52h1v1h-1zM32 52h1v1h-1zM35 52h1v1h-1zM38 52h1v1h-1zM61 52h1v1h-1zM64 52h1v1h-1zM67 52h1v1h-1zM70 52h1v1h-1zM75 52h1v1h-1zM77 52h1v1h-1zM14 53h1v1h-1zM19 53h1v1h-1zM30 53h1v1h-1zM38 53h1v1h-1zM61 53h1v1h-1zM69 53h1v1h-1zM80 53h1v1h-1zM85 53h1v1h-1zM24 54h1v1h-1zM28 54h2v1h-2zM49 54h2v1h-2zM70 54h2v1h-2zM75 54h1v1h-1zM17 55h1v1h-1zM23 55h2v1h-2zM26 55h1v1h-1zM73 55h1v1h-1zM75 55h2v1h-2zM82 55h1v1h-1zM22 56h1v1h-1zM25 56h1v1h-1zM27 56h1v1h-1zM30 56h1v1h-1zM44 56h1v1h-1zM55 56h1v1h-1zM69 56h1v1h-1zM72 56h1v1h-1zM74 56h1v1h-1zM77 56h1v1h-1zM21 57h1v1h-1zM33 57h1v1h-1zM39 57h1v1h-1zM60 57h1v1h-1zM66 57h1v1h-1zM78 57h1v1h-1zM30 58h1v1h-1zM69 58h1v1h-1zM35 59h1v1h-1zM64 59h1v1h-1zM15 60h1v1h-1zM49 60h2v1h-2zM84 60h1v1h-1zM30 61h1v1h-1zM34 61h1v1h-1zM65 61h1v1h-1zM69 61h1v1h-1zM29 62h1v1h-1zM32 62h1v1h-1zM48 62h1v1h-1zM51 62h1v1h-1zM67 62h1v1h-1zM70 62h1v1h-1zM42 63h1v1h-1zM44 63h1v1h-1zM48 63h1v1h-1zM51 63h1v1h-1zM55 63h1v1h-1zM57 63h1v1h-1zM17 64h1v1h-1zM33 64h1v1h-1zM66 64h1v1h-1zM82 64h1v1h-1zM14 65h1v1h-1zM17 65h1v1h-1zM29 65h1v1h-1zM48 65h1v1h-1zM51 65h1v1h-1zM70 65h1v1h-1zM82 65h1v1h-1zM85 65h1v1h-1zM14 66h1v1h-1zM30 66h1v1h-1zM35 66h1v1h-1zM38 66h1v1h-1zM45 66h1v1h-1zM48 66h1v1h-1zM51 66h1v1h-1zM54 66h1v1h-1zM61 66h1v1h-1zM64 66h1v1h-1zM69 66h1v1h-1zM85 66h1v1h-1zM14 68h1v1h-1zM31 68h1v1h-1zM34 68h1v1h-1zM39 68h1v1h-1zM46 68h1v1h-1zM53 68h1v1h-1zM60 68h1v1h-1zM65 68h1v1h-1zM68 68h1v1h-1zM85 68h1v1h-1zM33 69h2v1h-2zM40 69h1v1h-1zM45 69h1v1h-1zM54 69h1v1h-1zM59 69h1v1h-1zM65 69h2v1h-2zM37 70h1v1h-1zM47 70h1v1h-1zM52 70h1v1h-1zM62 70h1v1h-1zM37 71h2v1h-2zM61 71h2v1h-2zM14 72h1v1h-1zM85 72h1v1h-1zM33 73h1v1h-1zM41 73h1v1h-1zM58 73h1v1h-1zM66 73h1v1h-1zM44 74h1v1h-1zM49 74h2v1h-2zM55 74h1v1h-1zM14 96h1v1h-1zM85 96h1v1h-1zM18 97h1v1h-1zM20 97h2v1h-2zM29 97h1v1h-1zM38 97h1v1h-1zM61 97h1v1h-1zM70 97h1v1h-1zM78 97h2v1h-2zM81 97h1v1h-1z"/><path fill="#eec300" d="M17 2h1v1h-1zM36 2h1v1h-1zM63 2h1v1h-1zM82 2h1v1h-1zM45 23h1v1h-1zM54 23h1v1h-1zM40 24h1v1h-1zM45 24h1v1h-1zM54 24h1v1h-1zM59 24h1v1h-1zM46 26h1v1h-1zM53 26h1v1h-1zM35 27h1v1h-1zM39 27h2v1h-2zM42 27h1v1h-1zM57 27h1v1h-1zM59 27h2v1h-2zM64 27h1v1h-1zM33 28h1v1h-1zM35 28h1v1h-1zM41 28h1v1h-1zM46 28h1v1h-1zM49 28h2v1h-2zM53 28h1v1h-1zM58 28h1v1h-1zM64 28h1v1h-1zM66 28h1v1h-1zM34 29h1v1h-1zM40 29h2v1h-2zM58 29h2v1h-2zM65 29h1v1h-1zM36 30h1v1h-1zM63 30h1v1h-1zM44 31h1v1h-1zM55 31h1v1h-1zM14 32h1v1h-1zM16 32h1v1h-1zM33 32h1v1h-1zM39 32h1v1h-1zM60 32h1v1h-1zM66 32h1v1h-1zM83 32h1v1h-1zM85 32h1v1h-1zM33 33h1v1h-1zM36 33h1v1h-1zM63 33h1v1h-1zM66 33h1v1h-1zM35 34h1v1h-1zM45 34h1v1h-1zM54 34h1v1h-1zM64 34h1v1h-1zM31 35h2v1h-2zM44 35h1v1h-1zM55 35h1v1h-1zM67 35h2v1h-2zM31 36h1v1h-1zM40 36h1v1h-1zM59 36h1v1h-1zM68 36h1v1h-1zM25 37h1v1h-1zM43 37h1v1h-1zM56 37h1v1h-1zM74 37h1v1h-1zM15 38h1v1h-1zM24 38h1v1h-1zM28 38h1v1h-1zM71 38h1v1h-1zM75 38h1v1h-1zM84 38h1v1h-1zM19 39h1v1h-1zM25 39h1v1h-1zM44 39h1v1h-1zM48 39h1v1h-1zM51 39h1v1h-1zM55 39h1v1h-1zM74 39h1v1h-1zM80 39h1v1h-1zM14 40h1v1h-1zM31 40h1v1h-1zM68 40h1v1h-1zM85 40h1v1h-1zM22 41h1v1h-1zM27 41h1v1h-1zM31 41h1v1h-1zM42 41h1v1h-1zM57 41h1v1h-1zM68 41h1v1h-1zM72 41h1v1h-1zM77 41h1v1h-1zM27 42h1v1h-1zM47 42h1v1h-1zM52 42h1v1h-1zM72 42h1v1h-1zM17 43h1v1h-1zM23 43h1v1h-1zM49 43h2v1h-2zM76 43h1v1h-1zM82 43h1v1h-1zM25 44h1v1h-1zM27 44h1v1h-1zM36 44h1v1h-1zM39 44h1v1h-1zM43 44h1v1h-1zM45 44h1v1h-1zM54 44h1v1h-1zM56 44h1v1h-1zM60 44h1v1h-1zM63 44h1v1h-1zM72 44h1v1h-1zM74 44h1v1h-1zM30 45h1v1h-1zM42 45h1v1h-1zM46 45h1v1h-1zM53 45h1v1h-1zM57 45h1v1h-1zM69 45h1v1h-1zM20 46h1v1h-1zM33 46h1v1h-1zM66 46h1v1h-1zM79 46h1v1h-1zM23 47h1v1h-1zM34 47h1v1h-1zM43 47h1v1h-1zM56 47h1v1h-1zM65 47h1v1h-1zM76 47h1v1h-1zM14 48h1v1h-1zM85 48h1v1h-1zM22 49h1v1h-1zM43 49h1v1h-1zM56 49h1v1h-1zM77 49h1v1h-1zM22 50h1v1h-1zM43 50h1v1h-1zM56 50h1v1h-1zM77 50h1v1h-1zM14 51h1v1h-1zM85 51h1v1h-1zM23 52h1v1h-1zM34 52h1v1h-1zM43 52h1v1h-1zM56 52h1v1h-1zM65 52h1v1h-1zM76 52h1v1h-1zM20 53h1v1h-1zM33 53h1v1h-1zM66 53h1v1h-1zM79 53h1v1h-1zM30 54h1v1h-1zM42 54h1v1h-1zM46 54h1v1h-1zM53 54h1v1h-1zM57 54h1v1h-1zM69 54h1v1h-1zM25 55h1v1h-1zM27 55h1v1h-1zM36 55h1v1h-1zM39 55h1v1h-1zM43 55h1v1h-1zM45 55h1v1h-1zM54 55h1v1h-1zM56 55h1v1h-1zM60 55h1v1h-1zM63 55h1v1h-1zM72 55h1v1h-1zM74 55h1v1h-1zM17 56h1v1h-1zM23 56h1v1h-1zM49 56h2v1h-2zM76 56h1v1h-1zM82 56h1v1h-1zM27 57h1v1h-1zM47 57h1v1h-1zM52 57h1v1h-1zM72 57h1v1h-1zM22 58h1v1h-1zM27 58h1v1h-1zM31 58h1v1h-1zM42 58h1v1h-1zM57 58h1v1h-1zM68 58h1v1h-1zM72 58h1v1h-1zM77 58h1v1h-1zM14 59h1v1h-1zM31 59h1v1h-1zM68 59h1v1h-1zM85 59h1v1h-1zM19 60h1v1h-1zM25 60h1v1h-1zM44 60h1v1h-1zM48 60h1v1h-1zM51 60h1v1h-1zM55 60h1v1h-1zM74 60h1v1h-1zM80 60h1v1h-1zM15 61h1v1h-1zM24 61h1v1h-1zM28 61h1v1h-1zM71 61h1v1h-1zM75 61h1v1h-1zM84 61h1v1h-1zM25 62h1v1h-1zM43 62h1v1h-1zM56 62h1v1h-1zM74 62h1v1h-1zM31 63h1v1h-1zM40 63h1v1h-1zM59 63h1v1h-1zM68 63h1v1h-1zM31 64h2v1h-2zM44 64h1v1h-1zM55 64h1v1h-1zM67 64h2v1h-2zM35 65h1v1h-1zM45 65h1v1h-1zM54 65h1v1h-1zM64 65h1v1h-1zM33 66h1v1h-1zM36 66h1v1h-1zM63 66h1v1h-1zM66 66h1v1h-1zM14 67h1v1h-1zM16 67h1v1h-1zM33 67h1v1h-1zM39 67h1v1h-1zM60 67h1v1h-1zM66 67h1v1h-1zM83 67h1v1h-1zM85 67h1v1h-1zM44 68h1v1h-1zM55 68h1v1h-1zM36 69h1v1h-1zM63 69h1v1h-1zM34 70h1v1h-1zM40 70h2v1h-2zM58 70h2v1h-2zM65 70h1v1h-1zM33 71h1v1h-1zM35 71h1v1h-1zM41 71h1v1h-1zM46 71h1v1h-1zM49 71h2v1h-2zM53 71h1v1h-1zM58 71h1v1h-1zM64 71h1v1h-1zM66 71h1v1h-1zM35 72h1v1h-1zM39 72h2v1h-2zM42 72h1v1h-1zM57 72h1v1h-1zM59 72h2v1h-2zM64 72h1v1h-1zM46 73h1v1h-1zM53 73h1v1h-1zM40 75h1v1h-1zM45 75h1v1h-1zM54 75h1v1h-1zM59 75h1v1h-1zM45 76h1v1h-1zM54 76h1v1h-1zM17 97h1v1h-1zM36 97h1v1h-1zM63 97h1v1h-1zM82 97h1v1h-1z"/><path fill="#f0b800" d="M16 2h1v1h-1zM23 2h2v1h-2zM31 2h1v1h-1zM42 2h2v1h-2zM45 2h1v1h-1zM48 2h1v1h-1zM51 2h1v1h-1zM54 2h1v1h-1zM56 2h2v1h-2zM68 2h1v1h-1zM75 2h2v1h-2zM83 2h1v1h-1zM14 8h1v1h-1zM85 8h1v1h-1zM47 22h1v1h-1zM52 22h1v1h-1zM14 25h1v1h-1zM48 25h1v1h-1zM51 25h1v1h-1zM85 25h1v1h-1zM32 27h3v1h-3zM38 27h1v1h-1zM61 27h1v1h-1zM65 27h3v1h-3zM36 28h1v1h-1zM63 28h1v1h-1zM29 29h1v1h-1zM70 29h1v1h-1zM31 30h1v1h-1zM47 30h1v1h-1zM49 30h2v1h-2zM52 30h1v1h-1zM68 30h1v1h-1zM32 31h1v1h-1zM67 31h1v1h-1zM32 32h1v1h-1zM45 32h1v1h-1zM54 32h1v1h-1zM67 32h1v1h-1zM18 33h1v1h-1zM40 33h1v1h-1zM59 33h1v1h-1zM81 33h1v1h-1zM20 34h1v1h-1zM26 34h1v1h-1zM32 34h1v1h-1zM43 34h1v1h-1zM49 34h2v1h-2zM56 34h1v1h-1zM67 34h1v1h-1zM73 34h1v1h-1zM79 34h1v1h-1zM21 35h1v1h-1zM38 35h1v1h-1zM61 35h1v1h-1zM78 35h1v1h-1zM14 36h1v1h-1zM17 36h2v1h-2zM38 36h1v1h-1zM61 36h1v1h-1zM81 36h2v1h-2zM85 36h1v1h-1zM15 37h1v1h-1zM18 37h1v1h-1zM39 37h1v1h-1zM46 37h1v1h-1zM53 37h1v1h-1zM60 37h1v1h-1zM81 37h1v1h-1zM84 37h1v1h-1zM23 38h1v1h-1zM29 38h1v1h-1zM40 38h1v1h-1zM59 38h1v1h-1zM70 38h1v1h-1zM76 38h1v1h-1zM20 39h1v1h-1zM29 39h1v1h-1zM33 39h1v1h-1zM45 39h1v1h-1zM54 39h1v1h-1zM66 39h1v1h-1zM70 39h1v1h-1zM79 39h1v1h-1zM23 40h1v1h-1zM29 40h1v1h-1zM36 40h2v1h-2zM40 40h1v1h-1zM46 40h1v1h-1zM53 40h1v1h-1zM59 40h1v1h-1zM62 40h2v1h-2zM70 40h1v1h-1zM76 40h1v1h-1zM24 41h1v1h-1zM35 41h1v1h-1zM39 41h1v1h-1zM41 41h1v1h-1zM44 41h1v1h-1zM55 41h1v1h-1zM58 41h1v1h-1zM60 41h1v1h-1zM64 41h1v1h-1zM75 41h1v1h-1zM19 42h1v1h-1zM24 42h1v1h-1zM26 42h1v1h-1zM36 42h1v1h-1zM38 42h1v1h-1zM40 42h1v1h-1zM48 42h1v1h-1zM51 42h1v1h-1zM59 42h1v1h-1zM61 42h1v1h-1zM63 42h1v1h-1zM73 42h1v1h-1zM75 42h1v1h-1zM80 42h1v1h-1zM18 43h1v1h-1zM20 43h1v1h-1zM33 43h1v1h-1zM35 43h1v1h-1zM48 43h1v1h-1zM51 43h1v1h-1zM64 43h1v1h-1zM66 43h1v1h-1zM79 43h1v1h-1zM81 43h1v1h-1zM19 44h1v1h-1zM32 44h2v1h-2zM38 44h1v1h-1zM61 44h1v1h-1zM66 44h2v1h-2zM80 44h1v1h-1zM14 45h1v1h-1zM31 45h1v1h-1zM39 45h1v1h-1zM41 45h1v1h-1zM58 45h1v1h-1zM60 45h1v1h-1zM68 45h1v1h-1zM85 45h1v1h-1zM21 46h1v1h-1zM48 46h4v1h-4zM78 46h1v1h-1zM15 47h1v1h-1zM84 47h1v1h-1zM22 48h1v1h-1zM24 48h1v1h-1zM43 48h2v1h-2zM55 48h2v1h-2zM75 48h1v1h-1zM77 48h1v1h-1zM44 49h2v1h-2zM54 49h2v1h-2zM44 50h2v1h-2zM54 50h2v1h-2zM22 51h1v1h-1zM24 51h1v1h-1zM43 51h2v1h-2zM55 51h2v1h-2zM75 51h1v1h-1zM77 51h1v1h-1zM15 52h1v1h-1zM84 52h1v1h-1zM21 53h1v1h-1zM48 53h4v1h-4zM78 53h1v1h-1zM14 54h1v1h-1zM31 54h1v1h-1zM39 54h1v1h-1zM41 54h1v1h-1zM58 54h1v1h-1zM60 54h1v1h-1zM68 54h1v1h-1zM85 54h1v1h-1zM19 55h1v1h-1zM32 55h2v1h-2zM38 55h1v1h-1zM61 55h1v1h-1zM66 55h2v1h-2zM80 55h1v1h-1zM18 56h1v1h-1zM20 56h1v1h-1zM33 56h1v1h-1zM35 56h1v1h-1zM48 56h1v1h-1zM51 56h1v1h-1zM64 56h1v1h-1zM66 56h1v1h-1zM79 56h1v1h-1zM81 56h1v1h-1zM19 57h1v1h-1zM24 57h1v1h-1zM26 57h1v1h-1zM36 57h1v1h-1zM38 57h1v1h-1zM40 57h1v1h-1zM48 57h1v1h-1zM51 57h1v1h-1zM59 57h1v1h-1zM61 57h1v1h-1zM63 57h1v1h-1zM73 57h1v1h-1zM75 57h1v1h-1zM80 57h1v1h-1zM24 58h1v1h-1zM35 58h1v1h-1zM39 58h1v1h-1zM41 58h1v1h-1zM44 58h1v1h-1zM55 58h1v1h-1zM58 58h1v1h-1zM60 58h1v1h-1zM64 58h1v1h-1zM75 58h1v1h-1zM23 59h1v1h-1zM29 59h1v1h-1zM36 59h2v1h-2zM40 59h1v1h-1zM46 59h1v1h-1zM53 59h1v1h-1zM59 59h1v1h-1zM62 59h2v1h-2zM70 59h1v1h-1zM76 59h1v1h-1zM20 60h1v1h-1zM29 60h1v1h-1zM33 60h1v1h-1zM45 60h1v1h-1zM54 60h1v1h-1zM66 60h1v1h-1zM70 60h1v1h-1zM79 60h1v1h-1zM23 61h1v1h-1zM29 61h1v1h-1zM40 61h1v1h-1zM59 61h1v1h-1zM70 61h1v1h-1zM76 61h1v1h-1zM15 62h1v1h-1zM18 62h1v1h-1zM39 62h1v1h-1zM46 62h1v1h-1zM53 62h1v1h-1zM60 62h1v1h-1zM81 62h1v1h-1zM84 62h1v1h-1zM14 63h1v1h-1zM17 63h2v1h-2zM38 63h1v1h-1zM61 63h1v1h-1zM81 63h2v1h-2zM85 63h1v1h-1zM21 64h1v1h-1zM38 64h1v1h-1zM61 64h1v1h-1zM78 64h1v1h-1zM20 65h1v1h-1zM26 65h1v1h-1zM32 65h1v1h-1zM43 65h1v1h-1zM49 65h2v1h-2zM56 65h1v1h-1zM67 65h1v1h-1zM73 65h1v1h-1zM79 65h1v1h-1zM18 66h1v1h-1zM40 66h1v1h-1zM59 66h1v1h-1zM81 66h1v1h-1zM32 67h1v1h-1zM45 67h1v1h-1zM54 67h1v1h-1zM67 67h1v1h-1zM32 68h1v1h-1zM67 68h1v1h-1zM31 69h1v1h-1zM47 69h1v1h-1zM49 69h2v1h-2zM52 69h1v1h-1zM68 69h1v1h-1zM29 70h1v1h-1zM70 70h1v1h-1zM36 71h1v1h-1zM63 71h1v1h-1zM32 72h3v1h-3zM38 72h1v1h-1zM61 72h1v1h-1zM65 72h3v1h-3zM14 74h1v1h-1zM48 74h1v1h-1zM51 74h1v1h-1zM85 74h1v1h-1zM47 77h1v1h-1zM52 77h1v1h-1zM14 91h1v1h-1zM85 91h1v1h-1zM16 97h1v1h-1zM23 97h2v1h-2zM31 97h1v1h-1zM42 97h2v1h-2zM45 97h1v1h-1zM48 97h1v1h-1zM51 97h1v1h-1zM54 97h1v1h-1zM56 97h2v1h-2zM68 97h1v1h-1zM75 97h2v1h-2zM83 97h1v1h-1z"/><path fill="#f0ab00" d="M15 2h1v1h-1zM22 2h1v1h-1zM26 2h1v1h-1zM47 2h1v1h-1zM52 2h1v1h-1zM73 2h1v1h-1zM77 2h1v1h-1zM84 2h1v1h-1zM14 10h1v1h-1zM85 10h1v1h-1zM49 21h2v1h-2zM44 22h1v1h-1zM55 22h1v1h-1zM48 23h1v1h-1zM51 23h1v1h-1zM36 24h1v1h-1zM63 24h1v1h-1zM35 25h3v1h-3zM39 25h1v1h-1zM42 25h1v1h-1zM57 25h1v1h-1zM60 25h1v1h-1zM62 25h3v1h-3zM14 26h1v1h-1zM35 26h1v1h-1zM37 26h1v1h-1zM62 26h1v1h-1zM64 26h1v1h-1zM85 26h1v1h-1zM30 28h1v1h-1zM32 28h1v1h-1zM67 28h1v1h-1zM69 28h1v1h-1zM14 29h1v1h-1zM85 29h1v1h-1zM48 30h1v1h-1zM51 30h1v1h-1zM25 31h1v1h-1zM28 31h1v1h-1zM40 31h2v1h-2zM47 31h1v1h-1zM52 31h1v1h-1zM58 31h2v1h-2zM71 31h1v1h-1zM74 31h1v1h-1zM27 32h1v1h-1zM29 32h1v1h-1zM40 32h1v1h-1zM59 32h1v1h-1zM70 32h1v1h-1zM72 32h1v1h-1zM26 33h1v1h-1zM29 33h1v1h-1zM46 33h1v1h-1zM53 33h1v1h-1zM70 33h1v1h-1zM73 33h1v1h-1zM23 34h1v1h-1zM30 34h1v1h-1zM37 34h1v1h-1zM62 34h1v1h-1zM69 34h1v1h-1zM76 34h1v1h-1zM34 35h1v1h-1zM47 35h1v1h-1zM52 35h1v1h-1zM65 35h1v1h-1zM25 36h1v1h-1zM74 36h1v1h-1zM35 37h1v1h-1zM37 37h1v1h-1zM40 37h1v1h-1zM59 37h1v1h-1zM62 37h1v1h-1zM64 37h1v1h-1zM17 38h2v1h-2zM21 38h1v1h-1zM36 38h1v1h-1zM44 38h1v1h-1zM47 38h1v1h-1zM52 38h1v1h-1zM55 38h1v1h-1zM63 38h1v1h-1zM78 38h1v1h-1zM81 38h2v1h-2zM31 39h1v1h-1zM35 39h1v1h-1zM37 39h1v1h-1zM39 39h2v1h-2zM47 39h1v1h-1zM52 39h1v1h-1zM59 39h2v1h-2zM62 39h1v1h-1zM64 39h1v1h-1zM68 39h1v1h-1zM19 40h1v1h-1zM33 40h1v1h-1zM38 40h1v1h-1zM41 40h1v1h-1zM44 40h1v1h-1zM49 40h2v1h-2zM55 40h1v1h-1zM58 40h1v1h-1zM61 40h1v1h-1zM66 40h1v1h-1zM80 40h1v1h-1zM16 41h1v1h-1zM18 41h2v1h-2zM21 41h1v1h-1zM40 41h1v1h-1zM45 41h1v1h-1zM47 41h1v1h-1zM52 41h1v1h-1zM54 41h1v1h-1zM59 41h1v1h-1zM78 41h1v1h-1zM80 41h2v1h-2zM83 41h1v1h-1zM25 42h1v1h-1zM32 42h1v1h-1zM43 42h1v1h-1zM46 42h1v1h-1zM53 42h1v1h-1zM56 42h1v1h-1zM67 42h1v1h-1zM74 42h1v1h-1zM21 43h1v1h-1zM31 43h2v1h-2zM37 43h1v1h-1zM39 43h1v1h-1zM42 43h1v1h-1zM46 43h2v1h-2zM52 43h2v1h-2zM57 43h1v1h-1zM60 43h1v1h-1zM62 43h1v1h-1zM67 43h2v1h-2zM78 43h1v1h-1zM18 44h1v1h-1zM48 44h1v1h-1zM51 44h1v1h-1zM81 44h1v1h-1zM18 45h1v1h-1zM20 45h1v1h-1zM33 45h1v1h-1zM36 45h1v1h-1zM38 45h1v1h-1zM48 45h1v1h-1zM51 45h1v1h-1zM61 45h1v1h-1zM63 45h1v1h-1zM66 45h1v1h-1zM79 45h1v1h-1zM81 45h1v1h-1zM15 46h1v1h-1zM32 46h1v1h-1zM34 46h1v1h-1zM39 46h1v1h-1zM60 46h1v1h-1zM65 46h1v1h-1zM67 46h1v1h-1zM84 46h1v1h-1zM14 47h1v1h-1zM28 47h1v1h-1zM71 47h1v1h-1zM85 47h1v1h-1zM20 48h1v1h-1zM30 48h1v1h-1zM69 48h1v1h-1zM79 48h1v1h-1zM17 49h2v1h-2zM23 49h1v1h-1zM76 49h1v1h-1zM81 49h2v1h-2zM17 50h2v1h-2zM23 50h1v1h-1zM76 50h1v1h-1zM81 50h2v1h-2zM20 51h1v1h-1zM30 51h1v1h-1zM69 51h1v1h-1zM79 51h1v1h-1zM14 52h1v1h-1zM28 52h1v1h-1zM71 52h1v1h-1zM85 52h1v1h-1zM15 53h1v1h-1zM32 53h1v1h-1zM34 53h1v1h-1zM39 53h1v1h-1zM60 53h1v1h-1zM65 53h1v1h-1zM67 53h1v1h-1zM84 53h1v1h-1zM18 54h1v1h-1zM20 54h1v1h-1zM33 54h1v1h-1zM36 54h1v1h-1zM38 54h1v1h-1zM48 54h1v1h-1zM51 54h1v1h-1zM61 54h1v1h-1zM63 54h1v1h-1zM66 54h1v1h-1zM79 54h1v1h-1zM81 54h1v1h-1zM18 55h1v1h-1zM48 55h1v1h-1zM51 55h1v1h-1zM81 55h1v1h-1zM21 56h1v1h-1zM31 56h2v1h-2zM37 56h1v1h-1zM39 56h1v1h-1zM42 56h1v1h-1zM46 56h2v1h-2zM52 56h2v1h-2zM57 56h1v1h-1zM60 56h1v1h-1zM62 56h1v1h-1zM67 56h2v1h-2zM78 56h1v1h-1zM25 57h1v1h-1zM32 57h1v1h-1zM43 57h1v1h-1zM46 57h1v1h-1zM53 57h1v1h-1zM56 57h1v1h-1zM67 57h1v1h-1zM74 57h1v1h-1zM16 58h1v1h-1zM18 58h2v1h-2zM21 58h1v1h-1zM40 58h1v1h-1zM45 58h1v1h-1zM47 58h1v1h-1zM52 58h1v1h-1zM54 58h1v1h-1zM59 58h1v1h-1zM78 58h1v1h-1zM80 58h2v1h-2zM83 58h1v1h-1zM19 59h1v1h-1zM33 59h1v1h-1zM38 59h1v1h-1zM41 59h1v1h-1zM44 59h1v1h-1zM49 59h2v1h-2zM55 59h1v1h-1zM58 59h1v1h-1zM61 59h1v1h-1zM66 59h1v1h-1zM80 59h1v1h-1zM31 60h1v1h-1zM35 60h1v1h-1zM37 60h1v1h-1zM39 60h2v1h-2zM47 60h1v1h-1zM52 60h1v1h-1zM59 60h2v1h-2zM62 60h1v1h-1zM64 60h1v1h-1zM68 60h1v1h-1zM17 61h2v1h-2zM21 61h1v1h-1zM36 61h1v1h-1zM44 61h1v1h-1zM47 61h1v1h-1zM52 61h1v1h-1zM55 61h1v1h-1zM63 61h1v1h-1zM78 61h1v1h-1zM81 61h2v1h-2zM35 62h1v1h-1zM37 62h1v1h-1zM40 62h1v1h-1zM59 62h1v1h-1zM62 62h1v1h-1zM64 62h1v1h-1zM25 63h1v1h-1zM74 63h1v1h-1zM34 64h1v1h-1zM47 64h1v1h-1zM52 64h1v1h-1zM65 64h1v1h-1zM23 65h1v1h-1zM30 65h1v1h-1zM37 65h1v1h-1zM62 65h1v1h-1zM69 65h1v1h-1zM76 65h1v1h-1zM26 66h1v1h-1zM29 66h1v1h-1zM46 66h1v1h-1zM53 66h1v1h-1zM70 66h1v1h-1zM73 66h1v1h-1zM27 67h1v1h-1zM29 67h1v1h-1zM40 67h1v1h-1zM59 67h1v1h-1zM70 67h1v1h-1zM72 67h1v1h-1zM25 68h1v1h-1zM28 68h1v1h-1zM40 68h2v1h-2zM47 68h1v1h-1zM52 68h1v1h-1zM58 68h2v1h-2zM71 68h1v1h-1zM74 68h1v1h-1zM48 69h1v1h-1zM51 69h1v1h-1zM14 70h1v1h-1zM85 70h1v1h-1zM30 71h1v1h-1zM32 71h1v1h-1zM67 71h1v1h-1zM69 71h1v1h-1zM14 73h1v1h-1zM35 73h1v1h-1zM37 73h1v1h-1zM62 73h1v1h-1zM64 73h1v1h-1zM85 73h1v1h-1zM35 74h3v1h-3zM39 74h1v1h-1zM42 74h1v1h-1zM57 74h1v1h-1zM60 74h1v1h-1zM62 74h3v1h-3zM36 75h1v1h-1zM63 75h1v1h-1zM48 76h1v1h-1zM51 76h1v1h-1zM44 77h1v1h-1zM55 77h1v1h-1zM49 78h2v1h-2zM14 89h1v1h-1zM85 89h1v1h-1zM15 97h1v1h-1zM22 97h1v1h-1zM26 97h1v1h-1zM47 97h1v1h-1zM52 97h1v1h-1zM73 97h1v1h-1zM77 97h1v1h-1zM84 97h1v1h-1z"/><path fill="#f09e00" d="M35 2h1v1h-1zM46 2h1v1h-1zM49 2h2v1h-2zM53 2h1v1h-1zM64 2h1v1h-1zM14 9h1v1h-1zM85 9h1v1h-1zM20 18h1v1h-1zM79 18h1v1h-1zM35 20h1v1h-1zM64 20h1v1h-1zM48 22h1v1h-1zM51 22h1v1h-1zM39 23h1v1h-1zM41 23h1v1h-1zM46 23h1v1h-1zM49 23h2v1h-2zM53 23h1v1h-1zM58 23h1v1h-1zM60 23h1v1h-1zM18 24h1v1h-1zM81 24h1v1h-1zM40 25h1v1h-1zM45 25h3v1h-3zM52 25h3v1h-3zM59 25h1v1h-1zM44 26h1v1h-1zM55 26h1v1h-1zM41 27h1v1h-1zM47 27h2v1h-2zM51 27h2v1h-2zM58 27h1v1h-1zM31 28h1v1h-1zM34 28h1v1h-1zM40 28h1v1h-1zM42 28h3v1h-3zM47 28h2v1h-2zM51 28h2v1h-2zM55 28h3v1h-3zM59 28h1v1h-1zM65 28h1v1h-1zM68 28h1v1h-1zM39 29h1v1h-1zM48 29h1v1h-1zM51 29h1v1h-1zM60 29h1v1h-1zM14 30h1v1h-1zM26 30h1v1h-1zM38 30h1v1h-1zM42 30h1v1h-1zM46 30h1v1h-1zM53 30h1v1h-1zM57 30h1v1h-1zM61 30h1v1h-1zM73 30h1v1h-1zM85 30h1v1h-1zM15 31h1v1h-1zM26 31h1v1h-1zM30 31h1v1h-1zM36 31h1v1h-1zM63 31h1v1h-1zM69 31h1v1h-1zM73 31h1v1h-1zM84 31h1v1h-1zM19 32h1v1h-1zM24 32h1v1h-1zM28 32h1v1h-1zM38 32h1v1h-1zM47 32h1v1h-1zM52 32h1v1h-1zM61 32h1v1h-1zM71 32h1v1h-1zM75 32h1v1h-1zM80 32h1v1h-1zM17 33h1v1h-1zM82 33h1v1h-1zM21 34h1v1h-1zM24 34h1v1h-1zM33 34h2v1h-2zM39 34h1v1h-1zM41 34h1v1h-1zM44 34h1v1h-1zM46 34h2v1h-2zM52 34h2v1h-2zM55 34h1v1h-1zM58 34h1v1h-1zM60 34h1v1h-1zM65 34h2v1h-2zM75 34h1v1h-1zM78 34h1v1h-1zM14 35h1v1h-1zM25 35h1v1h-1zM30 35h1v1h-1zM69 35h1v1h-1zM74 35h1v1h-1zM85 35h1v1h-1zM36 36h2v1h-2zM41 36h1v1h-1zM58 36h1v1h-1zM62 36h2v1h-2zM17 37h1v1h-1zM23 37h1v1h-1zM41 37h1v1h-1zM58 37h1v1h-1zM76 37h1v1h-1zM82 37h1v1h-1zM27 38h1v1h-1zM35 38h1v1h-1zM41 38h1v1h-1zM58 38h1v1h-1zM64 38h1v1h-1zM72 38h1v1h-1zM22 39h1v1h-1zM28 39h1v1h-1zM32 39h1v1h-1zM41 39h1v1h-1zM46 39h1v1h-1zM53 39h1v1h-1zM58 39h1v1h-1zM67 39h1v1h-1zM71 39h1v1h-1zM77 39h1v1h-1zM22 40h1v1h-1zM26 40h1v1h-1zM30 40h1v1h-1zM32 40h1v1h-1zM39 40h1v1h-1zM60 40h1v1h-1zM67 40h1v1h-1zM69 40h1v1h-1zM73 40h1v1h-1zM77 40h1v1h-1zM17 41h1v1h-1zM20 41h1v1h-1zM26 41h1v1h-1zM73 41h1v1h-1zM79 41h1v1h-1zM82 41h1v1h-1zM14 44h1v1h-1zM28 44h2v1h-2zM47 44h1v1h-1zM52 44h1v1h-1zM70 44h2v1h-2zM85 44h1v1h-1zM16 45h1v1h-1zM83 45h1v1h-1zM23 46h1v1h-1zM29 46h1v1h-1zM70 46h1v1h-1zM76 46h1v1h-1zM19 47h1v1h-1zM31 47h1v1h-1zM39 47h1v1h-1zM60 47h1v1h-1zM68 47h1v1h-1zM80 47h1v1h-1zM16 49h1v1h-1zM28 49h2v1h-2zM35 49h1v1h-1zM64 49h1v1h-1zM70 49h2v1h-2zM83 49h1v1h-1zM16 50h1v1h-1zM28 50h2v1h-2zM35 50h1v1h-1zM64 50h1v1h-1zM70 50h2v1h-2zM83 50h1v1h-1zM19 52h1v1h-1zM31 52h1v1h-1zM39 52h1v1h-1zM60 52h1v1h-1zM68 52h1v1h-1zM80 52h1v1h-1zM23 53h1v1h-1zM29 53h1v1h-1zM70 53h1v1h-1zM76 53h1v1h-1zM16 54h1v1h-1zM83 54h1v1h-1zM14 55h1v1h-1zM28 55h2v1h-2zM47 55h1v1h-1zM52 55h1v1h-1zM70 55h2v1h-2zM85 55h1v1h-1zM17 58h1v1h-1zM20 58h1v1h-1zM26 58h1v1h-1zM73 58h1v1h-1zM79 58h1v1h-1zM82 58h1v1h-1zM22 59h1v1h-1zM26 59h1v1h-1zM30 59h1v1h-1zM32 59h1v1h-1zM39 59h1v1h-1zM60 59h1v1h-1zM67 59h1v1h-1zM69 59h1v1h-1zM73 59h1v1h-1zM77 59h1v1h-1zM22 60h1v1h-1zM28 60h1v1h-1zM32 60h1v1h-1zM41 60h1v1h-1zM46 60h1v1h-1zM53 60h1v1h-1zM58 60h1v1h-1zM67 60h1v1h-1zM71 60h1v1h-1zM77 60h1v1h-1zM27 61h1v1h-1zM35 61h1v1h-1zM41 61h1v1h-1zM58 61h1v1h-1zM64 61h1v1h-1zM72 61h1v1h-1zM17 62h1v1h-1zM23 62h1v1h-1zM41 62h1v1h-1zM58 62h1v1h-1zM76 62h1v1h-1zM82 62h1v1h-1zM36 63h2v1h-2zM41 63h1v1h-1zM58 63h1v1h-1zM62 63h2v1h-2zM14 64h1v1h-1zM25 64h1v1h-1zM30 64h1v1h-1zM69 64h1v1h-1zM74 64h1v1h-1zM85 64h1v1h-1zM21 65h1v1h-1zM24 65h1v1h-1zM33 65h2v1h-2zM39 65h1v1h-1zM41 65h1v1h-1zM44 65h1v1h-1zM46 65h2v1h-2zM52 65h2v1h-2zM55 65h1v1h-1zM58 65h1v1h-1zM60 65h1v1h-1zM65 65h2v1h-2zM75 65h1v1h-1zM78 65h1v1h-1zM17 66h1v1h-1zM82 66h1v1h-1zM19 67h1v1h-1zM24 67h1v1h-1zM28 67h1v1h-1zM38 67h1v1h-1zM47 67h1v1h-1zM52 67h1v1h-1zM61 67h1v1h-1zM71 67h1v1h-1zM75 67h1v1h-1zM80 67h1v1h-1zM15 68h1v1h-1zM26 68h1v1h-1zM30 68h1v1h-1zM36 68h1v1h-1zM63 68h1v1h-1zM69 68h1v1h-1zM73 68h1v1h-1zM84 68h1v1h-1zM14 69h1v1h-1zM26 69h1v1h-1zM38 69h1v1h-1zM42 69h1v1h-1zM46 69h1v1h-1zM53 69h1v1h-1zM57 69h1v1h-1zM61 69h1v1h-1zM73 69h1v1h-1zM85 69h1v1h-1zM39 70h1v1h-1zM48 70h1v1h-1zM51 70h1v1h-1zM60 70h1v1h-1zM31 71h1v1h-1zM34 71h1v1h-1zM40 71h1v1h-1zM42 71h3v1h-3zM47 71h2v1h-2zM51 71h2v1h-2zM55 71h3v1h-3zM59 71h1v1h-1zM65 71h1v1h-1zM68 71h1v1h-1zM41 72h1v1h-1zM47 72h2v1h-2zM51 72h2v1h-2zM58 72h1v1h-1zM44 73h1v1h-1zM55 73h1v1h-1zM40 74h1v1h-1zM45 74h3v1h-3zM52 74h3v1h-3zM59 74h1v1h-1zM18 75h1v1h-1zM81 75h1v1h-1zM39 76h1v1h-1zM41 76h1v1h-1zM46 76h1v1h-1zM49 76h2v1h-2zM53 76h1v1h-1zM58 76h1v1h-1zM60 76h1v1h-1zM48 77h1v1h-1zM51 77h1v1h-1zM35 79h1v1h-1zM64 79h1v1h-1zM20 81h1v1h-1zM79 81h1v1h-1zM14 90h1v1h-1zM85 90h1v1h-1zM35 97h1v1h-1zM46 97h1v1h-1zM49 97h2v1h-2zM53 97h1v1h-1zM64 97h1v1h-1z"/><path fill="#f49200" d="M40 2h1v1h-1zM59 2h1v1h-1zM18 3h2v1h-2zM26 3h1v1h-1zM33 3h1v1h-1zM66 3h1v1h-1zM73 3h1v1h-1zM80 3h2v1h-2zM33 5h1v1h-1zM40 5h1v1h-1zM59 5h1v1h-1zM66 5h1v1h-1zM48 7h1v1h-1zM51 7h1v1h-1zM19 10h1v1h-1zM80 10h1v1h-1zM30 11h2v1h-2zM68 11h2v1h-2zM38 14h1v1h-1zM61 14h1v1h-1zM27 18h1v1h-1zM72 18h1v1h-1zM19 23h1v1h-1zM80 23h1v1h-1zM34 24h1v1h-1zM38 24h1v1h-1zM47 24h1v1h-1zM52 24h1v1h-1zM61 24h1v1h-1zM65 24h1v1h-1zM32 25h2v1h-2zM66 25h2v1h-2zM21 26h1v1h-1zM40 26h1v1h-1zM43 26h1v1h-1zM48 26h4v1h-4zM56 26h1v1h-1zM59 26h1v1h-1zM78 26h1v1h-1zM36 27h1v1h-1zM43 27h3v1h-3zM54 27h3v1h-3zM63 27h1v1h-1zM28 28h1v1h-1zM39 28h1v1h-1zM60 28h1v1h-1zM71 28h1v1h-1zM20 29h1v1h-1zM26 29h1v1h-1zM30 29h1v1h-1zM42 29h2v1h-2zM56 29h2v1h-2zM69 29h1v1h-1zM73 29h1v1h-1zM79 29h1v1h-1zM16 30h1v1h-1zM25 30h1v1h-1zM39 30h1v1h-1zM44 30h1v1h-1zM55 30h1v1h-1zM60 30h1v1h-1zM74 30h1v1h-1zM83 30h1v1h-1zM24 31h1v1h-1zM42 31h1v1h-1zM45 31h1v1h-1zM54 31h1v1h-1zM57 31h1v1h-1zM75 31h1v1h-1zM26 32h1v1h-1zM36 32h1v1h-1zM44 32h1v1h-1zM55 32h1v1h-1zM63 32h1v1h-1zM73 32h1v1h-1zM22 33h2v1h-2zM27 33h2v1h-2zM32 33h1v1h-1zM37 33h1v1h-1zM39 33h1v1h-1zM47 33h1v1h-1zM52 33h1v1h-1zM60 33h1v1h-1zM62 33h1v1h-1zM67 33h1v1h-1zM71 33h2v1h-2zM76 33h2v1h-2zM16 34h1v1h-1zM18 34h1v1h-1zM36 34h1v1h-1zM40 34h1v1h-1zM59 34h1v1h-1zM63 34h1v1h-1zM81 34h1v1h-1zM83 34h1v1h-1zM18 35h1v1h-1zM28 35h1v1h-1zM40 35h3v1h-3zM57 35h3v1h-3zM71 35h1v1h-1zM81 35h1v1h-1zM32 36h1v1h-1zM34 36h1v1h-1zM39 36h1v1h-1zM60 36h1v1h-1zM65 36h1v1h-1zM67 36h1v1h-1zM14 37h1v1h-1zM26 37h1v1h-1zM38 37h1v1h-1zM61 37h1v1h-1zM73 37h1v1h-1zM85 37h1v1h-1zM26 38h1v1h-1zM32 38h1v1h-1zM67 38h1v1h-1zM73 38h1v1h-1zM24 39h1v1h-1zM36 39h1v1h-1zM63 39h1v1h-1zM75 39h1v1h-1zM15 40h1v1h-1zM28 40h1v1h-1zM71 40h1v1h-1zM84 40h1v1h-1zM20 42h1v1h-1zM30 42h2v1h-2zM68 42h2v1h-2zM79 42h1v1h-1zM29 43h1v1h-1zM70 43h1v1h-1zM15 44h1v1h-1zM21 44h1v1h-1zM30 44h1v1h-1zM34 44h1v1h-1zM65 44h1v1h-1zM69 44h1v1h-1zM78 44h1v1h-1zM84 44h1v1h-1zM22 46h1v1h-1zM24 46h2v1h-2zM28 46h1v1h-1zM71 46h1v1h-1zM74 46h2v1h-2zM77 46h1v1h-1zM26 47h2v1h-2zM33 47h1v1h-1zM40 47h1v1h-1zM59 47h1v1h-1zM66 47h1v1h-1zM72 47h2v1h-2zM17 48h1v1h-1zM25 48h1v1h-1zM74 48h1v1h-1zM82 48h1v1h-1zM20 49h1v1h-1zM36 49h1v1h-1zM40 49h1v1h-1zM59 49h1v1h-1zM63 49h1v1h-1zM79 49h1v1h-1zM20 50h1v1h-1zM36 50h1v1h-1zM40 50h1v1h-1zM59 50h1v1h-1zM63 50h1v1h-1zM79 50h1v1h-1zM17 51h1v1h-1zM25 51h1v1h-1zM74 51h1v1h-1zM82 51h1v1h-1zM26 52h2v1h-2zM33 52h1v1h-1zM40 52h1v1h-1zM59 52h1v1h-1zM66 52h1v1h-1zM72 52h2v1h-2zM22 53h1v1h-1zM24 53h2v1h-2zM28 53h1v1h-1zM71 53h1v1h-1zM74 53h2v1h-2zM77 53h1v1h-1zM15 55h1v1h-1zM21 55h1v1h-1zM30 55h1v1h-1zM34 55h1v1h-1zM65 55h1v1h-1zM69 55h1v1h-1zM78 55h1v1h-1zM84 55h1v1h-1zM29 56h1v1h-1zM70 56h1v1h-1zM20 57h1v1h-1zM30 57h2v1h-2zM68 57h2v1h-2zM79 57h1v1h-1zM15 59h1v1h-1zM28 59h1v1h-1zM71 59h1v1h-1zM84 59h1v1h-1zM24 60h1v1h-1zM36 60h1v1h-1zM63 60h1v1h-1zM75 60h1v1h-1zM26 61h1v1h-1zM32 61h1v1h-1zM67 61h1v1h-1zM73 61h1v1h-1zM14 62h1v1h-1zM26 62h1v1h-1zM38 62h1v1h-1zM61 62h1v1h-1zM73 62h1v1h-1zM85 62h1v1h-1zM32 63h1v1h-1zM34 63h1v1h-1zM39 63h1v1h-1zM60 63h1v1h-1zM65 63h1v1h-1zM67 63h1v1h-1zM18 64h1v1h-1zM28 64h1v1h-1zM40 64h3v1h-3zM57 64h3v1h-3zM71 64h1v1h-1zM81 64h1v1h-1zM16 65h1v1h-1zM18 65h1v1h-1zM36 65h1v1h-1zM40 65h1v1h-1zM59 65h1v1h-1zM63 65h1v1h-1zM81 65h1v1h-1zM83 65h1v1h-1zM22 66h2v1h-2zM27 66h2v1h-2zM32 66h1v1h-1zM37 66h1v1h-1zM39 66h1v1h-1zM47 66h1v1h-1zM52 66h1v1h-1zM60 66h1v1h-1zM62 66h1v1h-1zM67 66h1v1h-1zM71 66h2v1h-2zM76 66h2v1h-2zM26 67h1v1h-1zM36 67h1v1h-1zM44 67h1v1h-1zM55 67h1v1h-1zM63 67h1v1h-1zM73 67h1v1h-1zM24 68h1v1h-1zM42 68h1v1h-1zM45 68h1v1h-1zM54 68h1v1h-1zM57 68h1v1h-1zM75 68h1v1h-1zM16 69h1v1h-1zM25 69h1v1h-1zM39 69h1v1h-1zM44 69h1v1h-1zM55 69h1v1h-1zM60 69h1v1h-1zM74 69h1v1h-1zM83 69h1v1h-1zM20 70h1v1h-1zM26 70h1v1h-1zM30 70h1v1h-1zM42 70h2v1h-2zM56 70h2v1h-2zM69 70h1v1h-1zM73 70h1v1h-1zM79 70h1v1h-1zM28 71h1v1h-1zM39 71h1v1h-1zM60 71h1v1h-1zM71 71h1v1h-1zM36 72h1v1h-1zM43 72h3v1h-3zM54 72h3v1h-3zM63 72h1v1h-1zM21 73h1v1h-1zM40 73h1v1h-1zM43 73h1v1h-1zM48 73h4v1h-4zM56 73h1v1h-1zM59 73h1v1h-1zM78 73h1v1h-1zM32 74h2v1h-2zM66 74h2v1h-2zM34 75h1v1h-1zM38 75h1v1h-1zM47 75h1v1h-1zM52 75h1v1h-1zM61 75h1v1h-1zM65 75h1v1h-1zM19 76h1v1h-1zM80 76h1v1h-1zM27 81h1v1h-1zM72 81h1v1h-1zM38 85h1v1h-1zM61 85h1v1h-1zM30 88h2v1h-2zM68 88h2v1h-2zM19 89h1v1h-1zM80 89h1v1h-1zM48 92h1v1h-1zM51 92h1v1h-1zM33 94h1v1h-1zM40 94h1v1h-1zM59 94h1v1h-1zM66 94h1v1h-1zM18 96h2v1h-2zM26 96h1v1h-1zM33 96h1v1h-1zM66 96h1v1h-1zM73 96h1v1h-1zM80 96h2v1h-2zM40 97h1v1h-1zM59 97h1v1h-1z"/><path fill="#f78500" d="M32 3h1v1h-1zM67 3h1v1h-1zM47 4h1v1h-1zM52 4h1v1h-1zM47 5h1v1h-1zM52 5h1v1h-1zM26 6h1v1h-1zM73 6h1v1h-1zM14 13h1v1h-1zM28 13h1v1h-1zM48 13h1v1h-1zM51 13h1v1h-1zM71 13h1v1h-1zM85 13h1v1h-1zM24 14h1v1h-1zM75 14h1v1h-1zM35 16h1v1h-1zM40 16h1v1h-1zM59 16h1v1h-1zM64 16h1v1h-1zM31 17h1v1h-1zM44 17h1v1h-1zM49 17h2v1h-2zM55 17h1v1h-1zM68 17h1v1h-1zM19 18h1v1h-1zM80 18h1v1h-1zM20 19h1v1h-1zM79 19h1v1h-1zM15 21h1v1h-1zM24 21h1v1h-1zM40 21h1v1h-1zM46 21h2v1h-2zM52 21h2v1h-2zM59 21h1v1h-1zM75 21h1v1h-1zM84 21h1v1h-1zM14 22h2v1h-2zM84 22h2v1h-2zM31 23h1v1h-1zM40 23h1v1h-1zM42 23h2v1h-2zM56 23h2v1h-2zM59 23h1v1h-1zM68 23h1v1h-1zM17 24h1v1h-1zM37 24h1v1h-1zM62 24h1v1h-1zM82 24h1v1h-1zM17 25h2v1h-2zM43 25h1v1h-1zM56 25h1v1h-1zM81 25h2v1h-2zM38 26h2v1h-2zM45 26h1v1h-1zM54 26h1v1h-1zM60 26h2v1h-2zM20 27h1v1h-1zM46 27h1v1h-1zM53 27h1v1h-1zM79 27h1v1h-1zM19 28h2v1h-2zM27 28h1v1h-1zM72 28h1v1h-1zM79 28h2v1h-2zM22 29h1v1h-1zM24 29h1v1h-1zM45 29h1v1h-1zM49 29h2v1h-2zM54 29h1v1h-1zM75 29h1v1h-1zM77 29h1v1h-1zM22 30h1v1h-1zM29 30h2v1h-2zM69 30h2v1h-2zM77 30h1v1h-1zM22 31h1v1h-1zM38 31h1v1h-1zM61 31h1v1h-1zM77 31h1v1h-1zM16 33h1v1h-1zM83 33h1v1h-1zM22 34h1v1h-1zM25 34h1v1h-1zM27 34h2v1h-2zM71 34h2v1h-2zM74 34h1v1h-1zM77 34h1v1h-1zM23 35h1v1h-1zM26 35h1v1h-1zM39 35h1v1h-1zM60 35h1v1h-1zM73 35h1v1h-1zM76 35h1v1h-1zM23 36h1v1h-1zM28 36h1v1h-1zM47 36h1v1h-1zM52 36h1v1h-1zM71 36h1v1h-1zM76 36h1v1h-1zM16 37h1v1h-1zM28 37h1v1h-1zM36 37h1v1h-1zM63 37h1v1h-1zM71 37h1v1h-1zM83 37h1v1h-1zM16 38h1v1h-1zM19 38h1v1h-1zM25 38h1v1h-1zM74 38h1v1h-1zM80 38h1v1h-1zM83 38h1v1h-1zM18 39h1v1h-1zM23 39h1v1h-1zM38 39h1v1h-1zM61 39h1v1h-1zM76 39h1v1h-1zM81 39h1v1h-1zM18 40h1v1h-1zM20 40h1v1h-1zM25 40h1v1h-1zM74 40h1v1h-1zM79 40h1v1h-1zM81 40h1v1h-1zM28 41h2v1h-2zM32 41h1v1h-1zM67 41h1v1h-1zM70 41h2v1h-2zM23 42h1v1h-1zM34 42h1v1h-1zM65 42h1v1h-1zM76 42h1v1h-1zM15 43h1v1h-1zM24 43h1v1h-1zM75 43h1v1h-1zM84 43h1v1h-1zM22 44h1v1h-1zM77 44h1v1h-1zM18 46h1v1h-1zM36 46h1v1h-1zM63 46h1v1h-1zM81 46h1v1h-1zM17 47h1v1h-1zM20 47h2v1h-2zM78 47h2v1h-2zM82 47h1v1h-1zM18 48h1v1h-1zM23 48h1v1h-1zM76 48h1v1h-1zM81 48h1v1h-1zM19 49h1v1h-1zM32 49h1v1h-1zM41 49h1v1h-1zM58 49h1v1h-1zM67 49h1v1h-1zM80 49h1v1h-1zM19 50h1v1h-1zM32 50h1v1h-1zM41 50h1v1h-1zM58 50h1v1h-1zM67 50h1v1h-1zM80 50h1v1h-1zM18 51h1v1h-1zM23 51h1v1h-1zM76 51h1v1h-1zM81 51h1v1h-1zM17 52h1v1h-1zM20 52h2v1h-2zM78 52h2v1h-2zM82 52h1v1h-1zM18 53h1v1h-1zM36 53h1v1h-1zM63 53h1v1h-1zM81 53h1v1h-1zM22 55h1v1h-1zM77 55h1v1h-1zM15 56h1v1h-1zM24 56h1v1h-1zM75 56h1v1h-1zM84 56h1v1h-1zM23 57h1v1h-1zM34 57h1v1h-1zM65 57h1v1h-1zM76 57h1v1h-1zM28 58h2v1h-2zM32 58h1v1h-1zM67 58h1v1h-1zM70 58h2v1h-2zM18 59h1v1h-1zM20 59h1v1h-1zM25 59h1v1h-1zM74 59h1v1h-1zM79 59h1v1h-1zM81 59h1v1h-1zM18 60h1v1h-1zM23 60h1v1h-1zM38 60h1v1h-1zM61 60h1v1h-1zM76 60h1v1h-1zM81 60h1v1h-1zM16 61h1v1h-1zM19 61h1v1h-1zM25 61h1v1h-1zM74 61h1v1h-1zM80 61h1v1h-1zM83 61h1v1h-1zM16 62h1v1h-1zM28 62h1v1h-1zM36 62h1v1h-1zM63 62h1v1h-1zM71 62h1v1h-1zM83 62h1v1h-1zM23 63h1v1h-1zM28 63h1v1h-1zM47 63h1v1h-1zM52 63h1v1h-1zM71 63h1v1h-1zM76 63h1v1h-1zM23 64h1v1h-1zM26 64h1v1h-1zM39 64h1v1h-1zM60 64h1v1h-1zM73 64h1v1h-1zM76 64h1v1h-1zM22 65h1v1h-1zM25 65h1v1h-1zM27 65h2v1h-2zM71 65h2v1h-2zM74 65h1v1h-1zM77 65h1v1h-1zM16 66h1v1h-1zM83 66h1v1h-1zM22 68h1v1h-1zM38 68h1v1h-1zM61 68h1v1h-1zM77 68h1v1h-1zM22 69h1v1h-1zM29 69h2v1h-2zM69 69h2v1h-2zM77 69h1v1h-1zM22 70h1v1h-1zM24 70h1v1h-1zM45 70h1v1h-1zM49 70h2v1h-2zM54 70h1v1h-1zM75 70h1v1h-1zM77 70h1v1h-1zM19 71h2v1h-2zM27 71h1v1h-1zM72 71h1v1h-1zM79 71h2v1h-2zM20 72h1v1h-1zM46 72h1v1h-1zM53 72h1v1h-1zM79 72h1v1h-1zM38 73h2v1h-2zM45 73h1v1h-1zM54 73h1v1h-1zM60 73h2v1h-2zM17 74h2v1h-2zM43 74h1v1h-1zM56 74h1v1h-1zM81 74h2v1h-2zM17 75h1v1h-1zM37 75h1v1h-1zM62 75h1v1h-1zM82 75h1v1h-1zM31 76h1v1h-1zM40 76h1v1h-1zM42 76h2v1h-2zM56 76h2v1h-2zM59 76h1v1h-1zM68 76h1v1h-1zM14 77h2v1h-2zM84 77h2v1h-2zM15 78h1v1h-1zM24 78h1v1h-1zM40 78h1v1h-1zM46 78h2v1h-2zM52 78h2v1h-2zM59 78h1v1h-1zM75 78h1v1h-1zM84 78h1v1h-1zM20 80h1v1h-1zM79 80h1v1h-1zM19 81h1v1h-1zM80 81h1v1h-1zM31 82h1v1h-1zM44 82h1v1h-1zM49 82h2v1h-2zM55 82h1v1h-1zM68 82h1v1h-1zM35 83h1v1h-1zM40 83h1v1h-1zM59 83h1v1h-1zM64 83h1v1h-1zM24 85h1v1h-1zM75 85h1v1h-1zM14 86h1v1h-1zM28 86h1v1h-1zM48 86h1v1h-1zM51 86h1v1h-1zM71 86h1v1h-1zM85 86h1v1h-1zM26 93h1v1h-1zM73 93h1v1h-1zM47 94h1v1h-1zM52 94h1v1h-1zM47 95h1v1h-1zM52 95h1v1h-1zM32 96h1v1h-1zM67 96h1v1h-1z"/><path fill="#f87400" d="M16 3h2v1h-2zM20 3h1v1h-1zM48 3h1v1h-1zM51 3h1v1h-1zM79 3h1v1h-1zM82 3h2v1h-2zM33 4h1v1h-1zM36 4h1v1h-1zM63 4h1v1h-1zM66 4h1v1h-1zM14 5h1v1h-1zM85 5h1v1h-1zM14 6h1v1h-1zM85 6h1v1h-1zM23 7h1v1h-1zM26 7h1v1h-1zM41 7h1v1h-1zM58 7h1v1h-1zM73 7h1v1h-1zM76 7h1v1h-1zM47 8h1v1h-1zM52 8h1v1h-1zM19 9h1v1h-1zM40 9h1v1h-1zM44 9h2v1h-2zM54 9h2v1h-2zM59 9h1v1h-1zM80 9h1v1h-1zM16 10h1v1h-1zM18 10h1v1h-1zM31 10h1v1h-1zM44 10h2v1h-2zM54 10h2v1h-2zM68 10h1v1h-1zM81 10h1v1h-1zM83 10h1v1h-1zM14 11h1v1h-1zM22 11h2v1h-2zM36 11h1v1h-1zM63 11h1v1h-1zM76 11h2v1h-2zM85 11h1v1h-1zM44 12h1v1h-1zM55 12h1v1h-1zM36 13h1v1h-1zM49 13h2v1h-2zM63 13h1v1h-1zM14 14h1v1h-1zM26 14h2v1h-2zM72 14h2v1h-2zM85 14h1v1h-1zM18 15h1v1h-1zM20 15h1v1h-1zM25 15h1v1h-1zM47 15h1v1h-1zM49 15h2v1h-2zM52 15h1v1h-1zM74 15h1v1h-1zM79 15h1v1h-1zM81 15h1v1h-1zM21 16h1v1h-1zM30 16h1v1h-1zM39 16h1v1h-1zM60 16h1v1h-1zM69 16h1v1h-1zM78 16h1v1h-1zM27 17h1v1h-1zM43 17h1v1h-1zM56 17h1v1h-1zM72 17h1v1h-1zM24 18h1v1h-1zM35 18h1v1h-1zM64 18h1v1h-1zM75 18h1v1h-1zM14 20h2v1h-2zM25 20h1v1h-1zM74 20h1v1h-1zM84 20h2v1h-2zM45 21h1v1h-1zM54 21h1v1h-1zM17 22h1v1h-1zM35 22h1v1h-1zM49 22h2v1h-2zM64 22h1v1h-1zM82 22h1v1h-1zM15 23h1v1h-1zM84 23h1v1h-1zM21 24h1v1h-1zM26 24h1v1h-1zM39 24h1v1h-1zM43 24h1v1h-1zM49 24h2v1h-2zM56 24h1v1h-1zM60 24h1v1h-1zM73 24h1v1h-1zM78 24h1v1h-1zM27 25h1v1h-1zM31 25h1v1h-1zM34 25h1v1h-1zM65 25h1v1h-1zM68 25h1v1h-1zM72 25h1v1h-1zM16 27h1v1h-1zM21 27h2v1h-2zM37 27h1v1h-1zM62 27h1v1h-1zM77 27h2v1h-2zM83 27h1v1h-1zM45 28h1v1h-1zM54 28h1v1h-1zM15 29h2v1h-2zM83 29h2v1h-2zM23 30h1v1h-1zM37 30h1v1h-1zM41 30h1v1h-1zM58 30h1v1h-1zM62 30h1v1h-1zM76 30h1v1h-1zM16 31h1v1h-1zM18 31h1v1h-1zM37 31h1v1h-1zM43 31h1v1h-1zM56 31h1v1h-1zM62 31h1v1h-1zM81 31h1v1h-1zM83 31h1v1h-1zM17 32h1v1h-1zM22 32h1v1h-1zM30 32h1v1h-1zM34 32h1v1h-1zM65 32h1v1h-1zM69 32h1v1h-1zM77 32h1v1h-1zM82 32h1v1h-1zM31 33h1v1h-1zM68 33h1v1h-1zM31 34h1v1h-1zM68 34h1v1h-1zM16 35h1v1h-1zM19 35h1v1h-1zM29 35h1v1h-1zM35 35h1v1h-1zM64 35h1v1h-1zM70 35h1v1h-1zM80 35h1v1h-1zM83 35h1v1h-1zM27 36h1v1h-1zM30 36h1v1h-1zM69 36h1v1h-1zM72 36h1v1h-1zM27 37h1v1h-1zM31 37h1v1h-1zM68 37h1v1h-1zM72 37h1v1h-1zM20 38h1v1h-1zM79 38h1v1h-1zM16 39h2v1h-2zM82 39h2v1h-2zM17 40h1v1h-1zM47 40h1v1h-1zM52 40h1v1h-1zM82 40h1v1h-1zM23 41h1v1h-1zM76 41h1v1h-1zM15 42h1v1h-1zM22 42h1v1h-1zM28 42h1v1h-1zM71 42h1v1h-1zM77 42h1v1h-1zM84 42h1v1h-1zM21 45h2v1h-2zM77 45h2v1h-2zM16 47h1v1h-1zM18 47h1v1h-1zM81 47h1v1h-1zM83 47h1v1h-1zM16 48h1v1h-1zM21 48h1v1h-1zM78 48h1v1h-1zM83 48h1v1h-1zM24 49h1v1h-1zM75 49h1v1h-1zM24 50h1v1h-1zM75 50h1v1h-1zM16 51h1v1h-1zM21 51h1v1h-1zM78 51h1v1h-1zM83 51h1v1h-1zM16 52h1v1h-1zM18 52h1v1h-1zM81 52h1v1h-1zM83 52h1v1h-1zM21 54h2v1h-2zM77 54h2v1h-2zM15 57h1v1h-1zM22 57h1v1h-1zM28 57h1v1h-1zM71 57h1v1h-1zM77 57h1v1h-1zM84 57h1v1h-1zM23 58h1v1h-1zM76 58h1v1h-1zM17 59h1v1h-1zM47 59h1v1h-1zM52 59h1v1h-1zM82 59h1v1h-1zM16 60h2v1h-2zM82 60h2v1h-2zM20 61h1v1h-1zM79 61h1v1h-1zM27 62h1v1h-1zM31 62h1v1h-1zM68 62h1v1h-1zM72 62h1v1h-1zM27 63h1v1h-1zM30 63h1v1h-1zM69 63h1v1h-1zM72 63h1v1h-1zM16 64h1v1h-1zM19 64h1v1h-1zM29 64h1v1h-1zM35 64h1v1h-1zM64 64h1v1h-1zM70 64h1v1h-1zM80 64h1v1h-1zM83 64h1v1h-1zM31 65h1v1h-1zM68 65h1v1h-1zM31 66h1v1h-1zM68 66h1v1h-1zM17 67h1v1h-1zM22 67h1v1h-1zM30 67h1v1h-1zM34 67h1v1h-1zM65 67h1v1h-1zM69 67h1v1h-1zM77 67h1v1h-1zM82 67h1v1h-1zM16 68h1v1h-1zM18 68h1v1h-1zM37 68h1v1h-1zM43 68h1v1h-1zM56 68h1v1h-1zM62 68h1v1h-1zM81 68h1v1h-1zM83 68h1v1h-1zM23 69h1v1h-1zM37 69h1v1h-1zM41 69h1v1h-1zM58 69h1v1h-1zM62 69h1v1h-1zM76 69h1v1h-1zM15 70h2v1h-2zM83 70h2v1h-2zM45 71h1v1h-1zM54 71h1v1h-1zM16 72h1v1h-1zM21 72h2v1h-2zM37 72h1v1h-1zM62 72h1v1h-1zM77 72h2v1h-2zM83 72h1v1h-1zM27 74h1v1h-1zM31 74h1v1h-1zM34 74h1v1h-1zM65 74h1v1h-1zM68 74h1v1h-1zM72 74h1v1h-1zM21 75h1v1h-1zM26 75h1v1h-1zM39 75h1v1h-1zM43 75h1v1h-1zM49 75h2v1h-2zM56 75h1v1h-1zM60 75h1v1h-1zM73 75h1v1h-1zM78 75h1v1h-1zM15 76h1v1h-1zM84 76h1v1h-1zM17 77h1v1h-1zM35 77h1v1h-1zM49 77h2v1h-2zM64 77h1v1h-1zM82 77h1v1h-1zM45 78h1v1h-1zM54 78h1v1h-1zM14 79h2v1h-2zM25 79h1v1h-1zM74 79h1v1h-1zM84 79h2v1h-2zM24 81h1v1h-1zM35 81h1v1h-1zM64 81h1v1h-1zM75 81h1v1h-1zM27 82h1v1h-1zM43 82h1v1h-1zM56 82h1v1h-1zM72 82h1v1h-1zM21 83h1v1h-1zM30 83h1v1h-1zM39 83h1v1h-1zM60 83h1v1h-1zM69 83h1v1h-1zM78 83h1v1h-1zM18 84h1v1h-1zM20 84h1v1h-1zM25 84h1v1h-1zM47 84h1v1h-1zM49 84h2v1h-2zM52 84h1v1h-1zM74 84h1v1h-1zM79 84h1v1h-1zM81 84h1v1h-1zM14 85h1v1h-1zM26 85h2v1h-2zM72 85h2v1h-2zM85 85h1v1h-1zM36 86h1v1h-1zM49 86h2v1h-2zM63 86h1v1h-1zM44 87h1v1h-1zM55 87h1v1h-1zM14 88h1v1h-1zM22 88h2v1h-2zM36 88h1v1h-1zM63 88h1v1h-1zM76 88h2v1h-2zM85 88h1v1h-1zM16 89h1v1h-1zM18 89h1v1h-1zM31 89h1v1h-1zM44 89h2v1h-2zM54 89h2v1h-2zM68 89h1v1h-1zM81 89h1v1h-1zM83 89h1v1h-1zM19 90h1v1h-1zM40 90h1v1h-1zM44 90h2v1h-2zM54 90h2v1h-2zM59 90h1v1h-1zM80 90h1v1h-1zM47 91h1v1h-1zM52 91h1v1h-1zM23 92h1v1h-1zM26 92h1v1h-1zM41 92h1v1h-1zM58 92h1v1h-1zM73 92h1v1h-1zM76 92h1v1h-1zM14 93h1v1h-1zM85 93h1v1h-1zM14 94h1v1h-1zM85 94h1v1h-1zM33 95h1v1h-1zM36 95h1v1h-1zM63 95h1v1h-1zM66 95h1v1h-1zM16 96h2v1h-2zM20 96h1v1h-1zM48 96h1v1h-1zM51 96h1v1h-1zM79 96h1v1h-1zM82 96h2v1h-2z"/><path fill="#f85f00" d="M29 3h1v1h-1zM34 3h3v1h-3zM39 3h1v1h-1zM44 3h1v1h-1zM55 3h1v1h-1zM60 3h1v1h-1zM63 3h3v1h-3zM70 3h1v1h-1zM40 4h1v1h-1zM48 4h1v1h-1zM51 4h1v1h-1zM59 4h1v1h-1zM46 5h1v1h-1zM53 5h1v1h-1zM22 6h1v1h-1zM77 6h1v1h-1zM18 7h1v1h-1zM43 7h1v1h-1zM56 7h1v1h-1zM81 7h1v1h-1zM18 8h1v1h-1zM27 8h1v1h-1zM32 8h2v1h-2zM66 8h2v1h-2zM72 8h1v1h-1zM81 8h1v1h-1zM22 9h1v1h-1zM43 9h1v1h-1zM46 9h1v1h-1zM48 9h1v1h-1zM51 9h1v1h-1zM53 9h1v1h-1zM56 9h1v1h-1zM77 9h1v1h-1zM28 10h1v1h-1zM47 10h1v1h-1zM49 10h2v1h-2zM52 10h1v1h-1zM71 10h1v1h-1zM24 11h1v1h-1zM34 11h1v1h-1zM44 11h1v1h-1zM48 11h1v1h-1zM51 11h1v1h-1zM55 11h1v1h-1zM65 11h1v1h-1zM75 11h1v1h-1zM27 12h1v1h-1zM29 12h1v1h-1zM70 12h1v1h-1zM72 12h1v1h-1zM41 13h1v1h-1zM47 13h1v1h-1zM52 13h1v1h-1zM58 13h1v1h-1zM16 14h1v1h-1zM18 14h1v1h-1zM37 14h1v1h-1zM49 14h2v1h-2zM62 14h1v1h-1zM81 14h1v1h-1zM83 14h1v1h-1zM15 15h1v1h-1zM21 15h1v1h-1zM78 15h1v1h-1zM84 15h1v1h-1zM26 16h1v1h-1zM36 16h1v1h-1zM41 16h1v1h-1zM44 16h1v1h-1zM48 16h1v1h-1zM51 16h1v1h-1zM55 16h1v1h-1zM58 16h1v1h-1zM63 16h1v1h-1zM73 16h1v1h-1zM29 17h2v1h-2zM38 17h1v1h-1zM45 17h1v1h-1zM54 17h1v1h-1zM61 17h1v1h-1zM69 17h2v1h-2zM25 18h1v1h-1zM34 18h1v1h-1zM41 18h1v1h-1zM46 18h2v1h-2zM52 18h2v1h-2zM58 18h1v1h-1zM65 18h1v1h-1zM74 18h1v1h-1zM19 19h1v1h-1zM22 19h1v1h-1zM31 19h1v1h-1zM68 19h1v1h-1zM77 19h1v1h-1zM80 19h1v1h-1zM19 20h1v1h-1zM44 20h1v1h-1zM47 20h1v1h-1zM52 20h1v1h-1zM55 20h1v1h-1zM80 20h1v1h-1zM14 21h1v1h-1zM16 21h1v1h-1zM18 21h1v1h-1zM21 21h1v1h-1zM78 21h1v1h-1zM81 21h1v1h-1zM83 21h1v1h-1zM85 21h1v1h-1zM28 22h1v1h-1zM30 22h3v1h-3zM39 22h2v1h-2zM43 22h1v1h-1zM46 22h1v1h-1zM53 22h1v1h-1zM56 22h1v1h-1zM59 22h2v1h-2zM67 22h3v1h-3zM71 22h1v1h-1zM14 23h1v1h-1zM18 23h1v1h-1zM20 23h1v1h-1zM27 23h1v1h-1zM30 23h1v1h-1zM33 23h1v1h-1zM37 23h1v1h-1zM62 23h1v1h-1zM66 23h1v1h-1zM69 23h1v1h-1zM72 23h1v1h-1zM79 23h1v1h-1zM81 23h1v1h-1zM85 23h1v1h-1zM14 24h2v1h-2zM33 24h1v1h-1zM42 24h1v1h-1zM44 24h1v1h-1zM48 24h1v1h-1zM51 24h1v1h-1zM55 24h1v1h-1zM57 24h1v1h-1zM66 24h1v1h-1zM84 24h2v1h-2zM38 25h1v1h-1zM41 25h1v1h-1zM58 25h1v1h-1zM61 25h1v1h-1zM17 26h1v1h-1zM20 26h1v1h-1zM28 26h1v1h-1zM36 26h1v1h-1zM42 26h1v1h-1zM47 26h1v1h-1zM52 26h1v1h-1zM57 26h1v1h-1zM63 26h1v1h-1zM71 26h1v1h-1zM79 26h1v1h-1zM82 26h1v1h-1zM49 27h2v1h-2zM23 28h1v1h-1zM29 28h1v1h-1zM70 28h1v1h-1zM76 28h1v1h-1zM38 29h1v1h-1zM61 29h1v1h-1zM19 30h1v1h-1zM28 30h1v1h-1zM71 30h1v1h-1zM80 30h1v1h-1zM17 31h1v1h-1zM33 31h1v1h-1zM66 31h1v1h-1zM82 31h1v1h-1zM15 33h1v1h-1zM84 33h1v1h-1zM15 34h1v1h-1zM84 34h1v1h-1zM27 35h1v1h-1zM72 35h1v1h-1zM15 36h1v1h-1zM19 36h1v1h-1zM21 36h1v1h-1zM26 36h1v1h-1zM29 36h1v1h-1zM70 36h1v1h-1zM73 36h1v1h-1zM78 36h1v1h-1zM80 36h1v1h-1zM84 36h1v1h-1zM19 37h1v1h-1zM22 37h1v1h-1zM24 37h1v1h-1zM75 37h1v1h-1zM77 37h1v1h-1zM80 37h1v1h-1zM37 38h1v1h-1zM62 38h1v1h-1zM26 39h1v1h-1zM73 39h1v1h-1zM15 41h1v1h-1zM25 41h1v1h-1zM74 41h1v1h-1zM84 41h1v1h-1zM16 42h1v1h-1zM18 42h1v1h-1zM81 42h1v1h-1zM83 42h1v1h-1zM16 43h1v1h-1zM28 43h1v1h-1zM71 43h1v1h-1zM83 43h1v1h-1zM23 45h1v1h-1zM25 45h2v1h-2zM73 45h2v1h-2zM76 45h1v1h-1zM16 46h1v1h-1zM26 46h2v1h-2zM72 46h2v1h-2zM83 46h1v1h-1zM25 47h1v1h-1zM74 47h1v1h-1zM19 48h1v1h-1zM26 48h1v1h-1zM31 48h1v1h-1zM68 48h1v1h-1zM73 48h1v1h-1zM80 48h1v1h-1zM15 49h1v1h-1zM25 49h1v1h-1zM27 49h1v1h-1zM72 49h1v1h-1zM74 49h1v1h-1zM84 49h1v1h-1zM15 50h1v1h-1zM25 50h1v1h-1zM27 50h1v1h-1zM72 50h1v1h-1zM74 50h1v1h-1zM84 50h1v1h-1zM19 51h1v1h-1zM26 51h1v1h-1zM31 51h1v1h-1zM68 51h1v1h-1zM73 51h1v1h-1zM80 51h1v1h-1zM25 52h1v1h-1zM74 52h1v1h-1zM16 53h1v1h-1zM26 53h2v1h-2zM72 53h2v1h-2zM83 53h1v1h-1zM23 54h1v1h-1zM25 54h2v1h-2zM73 54h2v1h-2zM76 54h1v1h-1zM16 56h1v1h-1zM28 56h1v1h-1zM71 56h1v1h-1zM83 56h1v1h-1zM16 57h1v1h-1zM18 57h1v1h-1zM81 57h1v1h-1zM83 57h1v1h-1zM15 58h1v1h-1zM25 58h1v1h-1zM74 58h1v1h-1zM84 58h1v1h-1zM26 60h1v1h-1zM73 60h1v1h-1zM37 61h1v1h-1zM62 61h1v1h-1zM19 62h1v1h-1zM22 62h1v1h-1zM24 62h1v1h-1zM75 62h1v1h-1zM77 62h1v1h-1zM80 62h1v1h-1zM15 63h1v1h-1zM19 63h1v1h-1zM21 63h1v1h-1zM26 63h1v1h-1zM29 63h1v1h-1zM70 63h1v1h-1zM73 63h1v1h-1zM78 63h1v1h-1zM80 63h1v1h-1zM84 63h1v1h-1zM27 64h1v1h-1zM72 64h1v1h-1zM15 65h1v1h-1zM84 65h1v1h-1zM15 66h1v1h-1zM84 66h1v1h-1zM17 68h1v1h-1zM33 68h1v1h-1zM66 68h1v1h-1zM82 68h1v1h-1zM19 69h1v1h-1zM28 69h1v1h-1zM71 69h1v1h-1zM80 69h1v1h-1zM38 70h1v1h-1zM61 70h1v1h-1zM23 71h1v1h-1zM29 71h1v1h-1zM70 71h1v1h-1zM76 71h1v1h-1zM49 72h2v1h-2zM17 73h1v1h-1zM20 73h1v1h-1zM28 73h1v1h-1zM36 73h1v1h-1zM42 73h1v1h-1zM47 73h1v1h-1zM52 73h1v1h-1zM57 73h1v1h-1zM63 73h1v1h-1zM71 73h1v1h-1zM79 73h1v1h-1zM82 73h1v1h-1zM38 74h1v1h-1zM41 74h1v1h-1zM58 74h1v1h-1zM61 74h1v1h-1zM14 75h2v1h-2zM33 75h1v1h-1zM42 75h1v1h-1zM44 75h1v1h-1zM48 75h1v1h-1zM51 75h1v1h-1zM55 75h1v1h-1zM57 75h1v1h-1zM66 75h1v1h-1zM84 75h2v1h-2zM14 76h1v1h-1zM18 76h1v1h-1zM20 76h1v1h-1zM27 76h1v1h-1zM30 76h1v1h-1zM33 76h1v1h-1zM37 76h1v1h-1zM62 76h1v1h-1zM66 76h1v1h-1zM69 76h1v1h-1zM72 76h1v1h-1zM79 76h1v1h-1zM81 76h1v1h-1zM85 76h1v1h-1zM28 77h1v1h-1zM30 77h3v1h-3zM39 77h2v1h-2zM43 77h1v1h-1zM46 77h1v1h-1zM53 77h1v1h-1zM56 77h1v1h-1zM59 77h2v1h-2zM67 77h3v1h-3zM71 77h1v1h-1zM14 78h1v1h-1zM16 78h1v1h-1zM18 78h1v1h-1zM21 78h1v1h-1zM78 78h1v1h-1zM81 78h1v1h-1zM83 78h1v1h-1zM85 78h1v1h-1zM19 79h1v1h-1zM44 79h1v1h-1zM47 79h1v1h-1zM52 79h1v1h-1zM55 79h1v1h-1zM80 79h1v1h-1zM19 80h1v1h-1zM22 80h1v1h-1zM31 80h1v1h-1zM68 80h1v1h-1zM77 80h1v1h-1zM80 80h1v1h-1zM25 81h1v1h-1zM34 81h1v1h-1zM41 81h1v1h-1zM46 81h2v1h-2zM52 81h2v1h-2zM58 81h1v1h-1zM65 81h1v1h-1zM74 81h1v1h-1zM29 82h2v1h-2zM38 82h1v1h-1zM45 82h1v1h-1zM54 82h1v1h-1zM61 82h1v1h-1zM69 82h2v1h-2zM26 83h1v1h-1zM36 83h1v1h-1zM41 83h1v1h-1zM44 83h1v1h-1zM48 83h1v1h-1zM51 83h1v1h-1zM55 83h1v1h-1zM58 83h1v1h-1zM63 83h1v1h-1zM73 83h1v1h-1zM15 84h1v1h-1zM21 84h1v1h-1zM78 84h1v1h-1zM84 84h1v1h-1zM16 85h1v1h-1zM18 85h1v1h-1zM37 85h1v1h-1zM49 85h2v1h-2zM62 85h1v1h-1zM81 85h1v1h-1zM83 85h1v1h-1zM41 86h1v1h-1zM47 86h1v1h-1zM52 86h1v1h-1zM58 86h1v1h-1zM27 87h1v1h-1zM29 87h1v1h-1zM70 87h1v1h-1zM72 87h1v1h-1zM24 88h1v1h-1zM34 88h1v1h-1zM44 88h1v1h-1zM48 88h1v1h-1zM51 88h1v1h-1zM55 88h1v1h-1zM65 88h1v1h-1zM75 88h1v1h-1zM28 89h1v1h-1zM47 89h1v1h-1zM49 89h2v1h-2zM52 89h1v1h-1zM71 89h1v1h-1zM22 90h1v1h-1zM43 90h1v1h-1zM46 90h1v1h-1zM48 90h1v1h-1zM51 90h1v1h-1zM53 90h1v1h-1zM56 90h1v1h-1zM77 90h1v1h-1zM18 91h1v1h-1zM27 91h1v1h-1zM32 91h2v1h-2zM66 91h2v1h-2zM72 91h1v1h-1zM81 91h1v1h-1zM18 92h1v1h-1zM43 92h1v1h-1zM56 92h1v1h-1zM81 92h1v1h-1zM22 93h1v1h-1zM77 93h1v1h-1zM46 94h1v1h-1zM53 94h1v1h-1zM40 95h1v1h-1zM48 95h1v1h-1zM51 95h1v1h-1zM59 95h1v1h-1zM29 96h1v1h-1zM34 96h3v1h-3zM39 96h1v1h-1zM44 96h1v1h-1zM55 96h1v1h-1zM60 96h1v1h-1zM63 96h3v1h-3zM70 96h1v1h-1z"/><path fill="#f84b00" d="M25 3h1v1h-1zM74 3h1v1h-1zM14 4h1v1h-1zM23 4h1v1h-1zM31 4h1v1h-1zM43 4h1v1h-1zM56 4h1v1h-1zM68 4h1v1h-1zM76 4h1v1h-1zM85 4h1v1h-1zM15 5h1v1h-1zM30 5h1v1h-1zM32 5h1v1h-1zM67 5h1v1h-1zM69 5h1v1h-1zM84 5h1v1h-1zM18 6h1v1h-1zM23 6h1v1h-1zM39 6h1v1h-1zM60 6h1v1h-1zM76 6h1v1h-1zM81 6h1v1h-1zM15 7h1v1h-1zM21 7h1v1h-1zM27 7h1v1h-1zM32 7h1v1h-1zM67 7h1v1h-1zM72 7h1v1h-1zM78 7h1v1h-1zM84 7h1v1h-1zM16 8h1v1h-1zM20 8h1v1h-1zM22 8h1v1h-1zM34 8h1v1h-1zM49 8h2v1h-2zM65 8h1v1h-1zM77 8h1v1h-1zM79 8h1v1h-1zM83 8h1v1h-1zM34 9h1v1h-1zM41 9h1v1h-1zM58 9h1v1h-1zM65 9h1v1h-1zM22 10h1v1h-1zM34 10h1v1h-1zM65 10h1v1h-1zM77 10h1v1h-1zM15 11h1v1h-1zM39 11h2v1h-2zM42 11h1v1h-1zM57 11h1v1h-1zM59 11h2v1h-2zM84 11h1v1h-1zM14 12h1v1h-1zM30 12h1v1h-1zM33 12h3v1h-3zM37 12h1v1h-1zM62 12h1v1h-1zM64 12h3v1h-3zM69 12h1v1h-1zM85 12h1v1h-1zM15 13h2v1h-2zM20 13h1v1h-1zM30 13h1v1h-1zM35 13h1v1h-1zM39 13h1v1h-1zM42 13h1v1h-1zM46 13h1v1h-1zM53 13h1v1h-1zM57 13h1v1h-1zM60 13h1v1h-1zM64 13h1v1h-1zM69 13h1v1h-1zM79 13h1v1h-1zM83 13h2v1h-2zM28 14h1v1h-1zM33 14h1v1h-1zM46 14h1v1h-1zM53 14h1v1h-1zM66 14h1v1h-1zM71 14h1v1h-1zM14 15h1v1h-1zM23 15h1v1h-1zM34 15h1v1h-1zM40 15h1v1h-1zM59 15h1v1h-1zM65 15h1v1h-1zM76 15h1v1h-1zM85 15h1v1h-1zM19 16h1v1h-1zM28 16h1v1h-1zM32 16h1v1h-1zM34 16h1v1h-1zM43 16h1v1h-1zM56 16h1v1h-1zM65 16h1v1h-1zM67 16h1v1h-1zM71 16h1v1h-1zM80 16h1v1h-1zM23 17h1v1h-1zM40 17h1v1h-1zM59 17h1v1h-1zM76 17h1v1h-1zM14 18h1v1h-1zM85 18h1v1h-1zM14 19h1v1h-1zM34 19h1v1h-1zM37 19h1v1h-1zM47 19h1v1h-1zM52 19h1v1h-1zM62 19h1v1h-1zM65 19h1v1h-1zM85 19h1v1h-1zM20 20h1v1h-1zM30 20h1v1h-1zM69 20h1v1h-1zM79 20h1v1h-1zM26 21h1v1h-1zM28 21h1v1h-1zM30 21h1v1h-1zM39 21h1v1h-1zM48 21h1v1h-1zM51 21h1v1h-1zM60 21h1v1h-1zM69 21h1v1h-1zM71 21h1v1h-1zM73 21h1v1h-1zM16 22h1v1h-1zM22 22h1v1h-1zM24 22h1v1h-1zM45 22h1v1h-1zM54 22h1v1h-1zM75 22h1v1h-1zM77 22h1v1h-1zM83 22h1v1h-1zM16 23h2v1h-2zM29 23h1v1h-1zM36 23h1v1h-1zM44 23h1v1h-1zM47 23h1v1h-1zM52 23h1v1h-1zM55 23h1v1h-1zM63 23h1v1h-1zM70 23h1v1h-1zM82 23h2v1h-2zM16 24h1v1h-1zM19 24h1v1h-1zM25 24h1v1h-1zM30 24h3v1h-3zM41 24h1v1h-1zM58 24h1v1h-1zM67 24h3v1h-3zM74 24h1v1h-1zM80 24h1v1h-1zM83 24h1v1h-1zM19 25h1v1h-1zM21 25h1v1h-1zM78 25h1v1h-1zM80 25h1v1h-1zM30 26h1v1h-1zM69 26h1v1h-1zM30 27h2v1h-2zM68 27h2v1h-2zM25 28h1v1h-1zM74 28h1v1h-1zM32 29h1v1h-1zM67 29h1v1h-1zM18 30h1v1h-1zM20 30h1v1h-1zM79 30h1v1h-1zM81 30h1v1h-1zM21 31h1v1h-1zM27 31h1v1h-1zM72 31h1v1h-1zM78 31h1v1h-1zM18 32h1v1h-1zM81 32h1v1h-1zM25 33h1v1h-1zM74 33h1v1h-1zM24 35h1v1h-1zM75 35h1v1h-1zM24 36h1v1h-1zM35 36h1v1h-1zM64 36h1v1h-1zM75 36h1v1h-1zM20 37h1v1h-1zM79 37h1v1h-1zM22 38h1v1h-1zM77 38h1v1h-1zM21 39h1v1h-1zM78 39h1v1h-1zM21 40h1v1h-1zM24 40h1v1h-1zM75 40h1v1h-1zM78 40h1v1h-1zM19 43h1v1h-1zM80 43h1v1h-1zM19 56h1v1h-1zM80 56h1v1h-1zM21 59h1v1h-1zM24 59h1v1h-1zM75 59h1v1h-1zM78 59h1v1h-1zM21 60h1v1h-1zM78 60h1v1h-1zM22 61h1v1h-1zM77 61h1v1h-1zM20 62h1v1h-1zM79 62h1v1h-1zM24 63h1v1h-1zM35 63h1v1h-1zM64 63h1v1h-1zM75 63h1v1h-1zM24 64h1v1h-1zM75 64h1v1h-1zM25 66h1v1h-1zM74 66h1v1h-1zM18 67h1v1h-1zM81 67h1v1h-1zM21 68h1v1h-1zM27 68h1v1h-1zM72 68h1v1h-1zM78 68h1v1h-1zM18 69h1v1h-1zM20 69h1v1h-1zM79 69h1v1h-1zM81 69h1v1h-1zM32 70h1v1h-1zM67 70h1v1h-1zM25 71h1v1h-1zM74 71h1v1h-1zM30 72h2v1h-2zM68 72h2v1h-2zM30 73h1v1h-1zM69 73h1v1h-1zM19 74h1v1h-1zM21 74h1v1h-1zM78 74h1v1h-1zM80 74h1v1h-1zM16 75h1v1h-1zM19 75h1v1h-1zM25 75h1v1h-1zM30 75h3v1h-3zM41 75h1v1h-1zM58 75h1v1h-1zM67 75h3v1h-3zM74 75h1v1h-1zM80 75h1v1h-1zM83 75h1v1h-1zM16 76h2v1h-2zM29 76h1v1h-1zM36 76h1v1h-1zM44 76h1v1h-1zM47 76h1v1h-1zM52 76h1v1h-1zM55 76h1v1h-1zM63 76h1v1h-1zM70 76h1v1h-1zM82 76h2v1h-2zM16 77h1v1h-1zM22 77h1v1h-1zM24 77h1v1h-1zM45 77h1v1h-1zM54 77h1v1h-1zM75 77h1v1h-1zM77 77h1v1h-1zM83 77h1v1h-1zM26 78h1v1h-1zM28 78h1v1h-1zM30 78h1v1h-1zM39 78h1v1h-1zM48 78h1v1h-1zM51 78h1v1h-1zM60 78h1v1h-1zM69 78h1v1h-1zM71 78h1v1h-1zM73 78h1v1h-1zM20 79h1v1h-1zM30 79h1v1h-1zM69 79h1v1h-1zM79 79h1v1h-1zM14 80h1v1h-1zM34 80h1v1h-1zM37 80h1v1h-1zM47 80h1v1h-1zM52 80h1v1h-1zM62 80h1v1h-1zM65 80h1v1h-1zM85 80h1v1h-1zM14 81h1v1h-1zM85 81h1v1h-1zM23 82h1v1h-1zM40 82h1v1h-1zM59 82h1v1h-1zM76 82h1v1h-1zM19 83h1v1h-1zM28 83h1v1h-1zM32 83h1v1h-1zM34 83h1v1h-1zM43 83h1v1h-1zM56 83h1v1h-1zM65 83h1v1h-1zM67 83h1v1h-1zM71 83h1v1h-1zM80 83h1v1h-1zM14 84h1v1h-1zM23 84h1v1h-1zM34 84h1v1h-1zM40 84h1v1h-1zM59 84h1v1h-1zM65 84h1v1h-1zM76 84h1v1h-1zM85 84h1v1h-1zM28 85h1v1h-1zM33 85h1v1h-1zM46 85h1v1h-1zM53 85h1v1h-1zM66 85h1v1h-1zM71 85h1v1h-1zM15 86h2v1h-2zM20 86h1v1h-1zM30 86h1v1h-1zM35 86h1v1h-1zM39 86h1v1h-1zM42 86h1v1h-1zM46 86h1v1h-1zM53 86h1v1h-1zM57 86h1v1h-1zM60 86h1v1h-1zM64 86h1v1h-1zM69 86h1v1h-1zM79 86h1v1h-1zM83 86h2v1h-2zM14 87h1v1h-1zM30 87h1v1h-1zM33 87h3v1h-3zM37 87h1v1h-1zM62 87h1v1h-1zM64 87h3v1h-3zM69 87h1v1h-1zM85 87h1v1h-1zM15 88h1v1h-1zM39 88h2v1h-2zM42 88h1v1h-1zM57 88h1v1h-1zM59 88h2v1h-2zM84 88h1v1h-1zM22 89h1v1h-1zM34 89h1v1h-1zM65 89h1v1h-1zM77 89h1v1h-1zM34 90h1v1h-1zM41 90h1v1h-1zM58 90h1v1h-1zM65 90h1v1h-1zM16 91h1v1h-1zM20 91h1v1h-1zM22 91h1v1h-1zM34 91h1v1h-1zM49 91h2v1h-2zM65 91h1v1h-1zM77 91h1v1h-1zM79 91h1v1h-1zM83 91h1v1h-1zM15 92h1v1h-1zM21 92h1v1h-1zM27 92h1v1h-1zM32 92h1v1h-1zM67 92h1v1h-1zM72 92h1v1h-1zM78 92h1v1h-1zM84 92h1v1h-1zM18 93h1v1h-1zM23 93h1v1h-1zM39 93h1v1h-1zM60 93h1v1h-1zM76 93h1v1h-1zM81 93h1v1h-1zM15 94h1v1h-1zM30 94h1v1h-1zM32 94h1v1h-1zM67 94h1v1h-1zM69 94h1v1h-1zM84 94h1v1h-1zM14 95h1v1h-1zM23 95h1v1h-1zM31 95h1v1h-1zM43 95h1v1h-1zM56 95h1v1h-1zM68 95h1v1h-1zM76 95h1v1h-1zM85 95h1v1h-1zM25 96h1v1h-1zM74 96h1v1h-1z"/><path fill="#f73800" d="M23 3h1v1h-1zM27 3h1v1h-1zM72 3h1v1h-1zM76 3h1v1h-1zM24 4h1v1h-1zM29 4h1v1h-1zM35 4h1v1h-1zM64 4h1v1h-1zM70 4h1v1h-1zM75 4h1v1h-1zM31 5h1v1h-1zM68 5h1v1h-1zM17 6h1v1h-1zM28 6h1v1h-1zM30 6h1v1h-1zM36 6h1v1h-1zM40 6h2v1h-2zM58 6h2v1h-2zM63 6h1v1h-1zM69 6h1v1h-1zM71 6h1v1h-1zM82 6h1v1h-1zM16 7h2v1h-2zM22 7h1v1h-1zM24 7h1v1h-1zM31 7h1v1h-1zM34 7h2v1h-2zM64 7h2v1h-2zM68 7h1v1h-1zM75 7h1v1h-1zM77 7h1v1h-1zM82 7h2v1h-2zM23 8h1v1h-1zM26 8h1v1h-1zM37 8h1v1h-1zM42 8h1v1h-1zM57 8h1v1h-1zM62 8h1v1h-1zM73 8h1v1h-1zM76 8h1v1h-1zM20 9h1v1h-1zM23 9h1v1h-1zM30 9h1v1h-1zM33 9h1v1h-1zM47 9h1v1h-1zM52 9h1v1h-1zM66 9h1v1h-1zM69 9h1v1h-1zM76 9h1v1h-1zM79 9h1v1h-1zM19 11h1v1h-1zM29 11h1v1h-1zM47 11h1v1h-1zM52 11h1v1h-1zM70 11h1v1h-1zM80 11h1v1h-1zM20 12h1v1h-1zM38 12h1v1h-1zM40 12h1v1h-1zM43 12h1v1h-1zM56 12h1v1h-1zM59 12h1v1h-1zM61 12h1v1h-1zM79 12h1v1h-1zM19 13h1v1h-1zM25 13h2v1h-2zM31 13h1v1h-1zM68 13h1v1h-1zM73 13h2v1h-2zM80 13h1v1h-1zM17 14h1v1h-1zM29 14h1v1h-1zM39 14h1v1h-1zM60 14h1v1h-1zM70 14h1v1h-1zM82 14h1v1h-1zM17 15h1v1h-1zM36 15h1v1h-1zM38 15h1v1h-1zM61 15h1v1h-1zM63 15h1v1h-1zM82 15h1v1h-1zM42 16h1v1h-1zM49 16h2v1h-2zM57 16h1v1h-1zM20 17h1v1h-1zM25 17h1v1h-1zM74 17h1v1h-1zM79 17h1v1h-1zM28 18h1v1h-1zM40 18h1v1h-1zM45 18h1v1h-1zM54 18h1v1h-1zM59 18h1v1h-1zM71 18h1v1h-1zM15 19h1v1h-1zM23 19h1v1h-1zM33 19h1v1h-1zM38 19h1v1h-1zM61 19h1v1h-1zM66 19h1v1h-1zM76 19h1v1h-1zM84 19h1v1h-1zM16 20h1v1h-1zM24 20h1v1h-1zM75 20h1v1h-1zM83 20h1v1h-1zM23 21h1v1h-1zM25 21h1v1h-1zM41 21h1v1h-1zM44 21h1v1h-1zM55 21h1v1h-1zM58 21h1v1h-1zM74 21h1v1h-1zM76 21h1v1h-1zM18 22h1v1h-1zM27 22h1v1h-1zM41 22h1v1h-1zM58 22h1v1h-1zM72 22h1v1h-1zM81 22h1v1h-1zM23 23h1v1h-1zM32 23h1v1h-1zM35 23h1v1h-1zM64 23h1v1h-1zM67 23h1v1h-1zM76 23h1v1h-1zM20 24h1v1h-1zM79 24h1v1h-1zM16 25h1v1h-1zM30 25h1v1h-1zM69 25h1v1h-1zM83 25h1v1h-1zM32 26h1v1h-1zM34 26h1v1h-1zM65 26h1v1h-1zM67 26h1v1h-1zM14 28h1v1h-1zM24 28h1v1h-1zM26 28h1v1h-1zM73 28h1v1h-1zM75 28h1v1h-1zM85 28h1v1h-1zM19 29h1v1h-1zM31 29h1v1h-1zM68 29h1v1h-1zM80 29h1v1h-1zM27 30h1v1h-1zM72 30h1v1h-1zM20 31h1v1h-1zM29 31h1v1h-1zM70 31h1v1h-1zM79 31h1v1h-1zM15 32h1v1h-1zM20 32h2v1h-2zM25 32h1v1h-1zM74 32h1v1h-1zM78 32h2v1h-2zM84 32h1v1h-1zM21 33h1v1h-1zM78 33h1v1h-1zM15 35h1v1h-1zM84 35h1v1h-1zM22 36h1v1h-1zM77 36h1v1h-1zM27 40h1v1h-1zM72 40h1v1h-1zM17 42h1v1h-1zM29 42h1v1h-1zM70 42h1v1h-1zM82 42h1v1h-1zM20 44h1v1h-1zM79 44h1v1h-1zM20 55h1v1h-1zM79 55h1v1h-1zM17 57h1v1h-1zM29 57h1v1h-1zM70 57h1v1h-1zM82 57h1v1h-1zM27 59h1v1h-1zM72 59h1v1h-1zM22 63h1v1h-1zM77 63h1v1h-1zM15 64h1v1h-1zM84 64h1v1h-1zM21 66h1v1h-1zM78 66h1v1h-1zM15 67h1v1h-1zM20 67h2v1h-2zM25 67h1v1h-1zM74 67h1v1h-1zM78 67h2v1h-2zM84 67h1v1h-1zM20 68h1v1h-1zM29 68h1v1h-1zM70 68h1v1h-1zM79 68h1v1h-1zM27 69h1v1h-1zM72 69h1v1h-1zM19 70h1v1h-1zM31 70h1v1h-1zM68 70h1v1h-1zM80 70h1v1h-1zM14 71h1v1h-1zM24 71h1v1h-1zM26 71h1v1h-1zM73 71h1v1h-1zM75 71h1v1h-1zM85 71h1v1h-1zM32 73h1v1h-1zM34 73h1v1h-1zM65 73h1v1h-1zM67 73h1v1h-1zM16 74h1v1h-1zM30 74h1v1h-1zM69 74h1v1h-1zM83 74h1v1h-1zM20 75h1v1h-1zM79 75h1v1h-1zM23 76h1v1h-1zM32 76h1v1h-1zM35 76h1v1h-1zM64 76h1v1h-1zM67 76h1v1h-1zM76 76h1v1h-1zM18 77h1v1h-1zM27 77h1v1h-1zM41 77h1v1h-1zM58 77h1v1h-1zM72 77h1v1h-1zM81 77h1v1h-1zM23 78h1v1h-1zM25 78h1v1h-1zM41 78h1v1h-1zM44 78h1v1h-1zM55 78h1v1h-1zM58 78h1v1h-1zM74 78h1v1h-1zM76 78h1v1h-1zM16 79h1v1h-1zM24 79h1v1h-1zM75 79h1v1h-1zM83 79h1v1h-1zM15 80h1v1h-1zM23 80h1v1h-1zM33 80h1v1h-1zM38 80h1v1h-1zM61 80h1v1h-1zM66 80h1v1h-1zM76 80h1v1h-1zM84 80h1v1h-1zM28 81h1v1h-1zM40 81h1v1h-1zM45 81h1v1h-1zM54 81h1v1h-1zM59 81h1v1h-1zM71 81h1v1h-1zM20 82h1v1h-1zM25 82h1v1h-1zM74 82h1v1h-1zM79 82h1v1h-1zM42 83h1v1h-1zM49 83h2v1h-2zM57 83h1v1h-1zM17 84h1v1h-1zM36 84h1v1h-1zM38 84h1v1h-1zM61 84h1v1h-1zM63 84h1v1h-1zM82 84h1v1h-1zM17 85h1v1h-1zM29 85h1v1h-1zM39 85h1v1h-1zM60 85h1v1h-1zM70 85h1v1h-1zM82 85h1v1h-1zM19 86h1v1h-1zM25 86h2v1h-2zM31 86h1v1h-1zM68 86h1v1h-1zM73 86h2v1h-2zM80 86h1v1h-1zM20 87h1v1h-1zM38 87h1v1h-1zM40 87h1v1h-1zM43 87h1v1h-1zM56 87h1v1h-1zM59 87h1v1h-1zM61 87h1v1h-1zM79 87h1v1h-1zM19 88h1v1h-1zM29 88h1v1h-1zM47 88h1v1h-1zM52 88h1v1h-1zM70 88h1v1h-1zM80 88h1v1h-1zM20 90h1v1h-1zM23 90h1v1h-1zM30 90h1v1h-1zM33 90h1v1h-1zM47 90h1v1h-1zM52 90h1v1h-1zM66 90h1v1h-1zM69 90h1v1h-1zM76 90h1v1h-1zM79 90h1v1h-1zM23 91h1v1h-1zM26 91h1v1h-1zM37 91h1v1h-1zM42 91h1v1h-1zM57 91h1v1h-1zM62 91h1v1h-1zM73 91h1v1h-1zM76 91h1v1h-1zM16 92h2v1h-2zM22 92h1v1h-1zM24 92h1v1h-1zM31 92h1v1h-1zM34 92h2v1h-2zM64 92h2v1h-2zM68 92h1v1h-1zM75 92h1v1h-1zM77 92h1v1h-1zM82 92h2v1h-2zM17 93h1v1h-1zM28 93h1v1h-1zM30 93h1v1h-1zM36 93h1v1h-1zM40 93h2v1h-2zM58 93h2v1h-2zM63 93h1v1h-1zM69 93h1v1h-1zM71 93h1v1h-1zM82 93h1v1h-1zM31 94h1v1h-1zM68 94h1v1h-1zM24 95h1v1h-1zM29 95h1v1h-1zM35 95h1v1h-1zM64 95h1v1h-1zM70 95h1v1h-1zM75 95h1v1h-1zM23 96h1v1h-1zM27 96h1v1h-1zM72 96h1v1h-1zM76 96h1v1h-1z"/><path fill="#f52700" d="M15 3h1v1h-1zM28 3h1v1h-1zM30 3h1v1h-1zM69 3h1v1h-1zM71 3h1v1h-1zM84 3h1v1h-1zM18 4h1v1h-1zM27 4h1v1h-1zM32 4h1v1h-1zM37 4h2v1h-2zM45 4h1v1h-1zM54 4h1v1h-1zM61 4h2v1h-2zM67 4h1v1h-1zM72 4h1v1h-1zM81 4h1v1h-1zM17 5h1v1h-1zM22 5h1v1h-1zM26 5h1v1h-1zM29 5h1v1h-1zM36 5h1v1h-1zM41 5h1v1h-1zM58 5h1v1h-1zM63 5h1v1h-1zM70 5h1v1h-1zM73 5h1v1h-1zM77 5h1v1h-1zM82 5h1v1h-1zM38 6h1v1h-1zM44 6h1v1h-1zM49 6h2v1h-2zM55 6h1v1h-1zM61 6h1v1h-1zM39 7h1v1h-1zM42 7h1v1h-1zM47 7h1v1h-1zM52 7h1v1h-1zM57 7h1v1h-1zM60 7h1v1h-1zM15 8h1v1h-1zM30 8h1v1h-1zM43 8h1v1h-1zM56 8h1v1h-1zM69 8h1v1h-1zM84 8h1v1h-1zM28 9h1v1h-1zM71 9h1v1h-1zM25 10h1v1h-1zM48 10h1v1h-1zM51 10h1v1h-1zM74 10h1v1h-1zM16 11h1v1h-1zM83 11h1v1h-1zM24 12h1v1h-1zM32 12h1v1h-1zM48 12h1v1h-1zM51 12h1v1h-1zM67 12h1v1h-1zM75 12h1v1h-1zM21 13h1v1h-1zM27 13h1v1h-1zM34 13h1v1h-1zM65 13h1v1h-1zM72 13h1v1h-1zM78 13h1v1h-1zM22 14h1v1h-1zM35 14h1v1h-1zM42 14h1v1h-1zM47 14h2v1h-2zM51 14h2v1h-2zM57 14h1v1h-1zM64 14h1v1h-1zM77 14h1v1h-1zM19 15h1v1h-1zM22 15h1v1h-1zM32 15h1v1h-1zM48 15h1v1h-1zM51 15h1v1h-1zM67 15h1v1h-1zM77 15h1v1h-1zM80 15h1v1h-1zM28 17h1v1h-1zM33 17h1v1h-1zM36 17h1v1h-1zM63 17h1v1h-1zM66 17h1v1h-1zM71 17h1v1h-1zM16 18h1v1h-1zM23 18h1v1h-1zM32 18h1v1h-1zM38 18h1v1h-1zM48 18h1v1h-1zM51 18h1v1h-1zM61 18h1v1h-1zM67 18h1v1h-1zM76 18h1v1h-1zM83 18h1v1h-1zM16 19h1v1h-1zM18 19h1v1h-1zM81 19h1v1h-1zM83 19h1v1h-1zM18 20h1v1h-1zM31 20h1v1h-1zM36 20h1v1h-1zM63 20h1v1h-1zM68 20h1v1h-1zM81 20h1v1h-1zM22 21h1v1h-1zM43 21h1v1h-1zM56 21h1v1h-1zM77 21h1v1h-1zM34 22h1v1h-1zM42 22h1v1h-1zM57 22h1v1h-1zM65 22h1v1h-1zM22 23h1v1h-1zM28 23h1v1h-1zM71 23h1v1h-1zM77 23h1v1h-1zM29 24h1v1h-1zM70 24h1v1h-1zM15 26h1v1h-1zM84 26h1v1h-1zM15 28h1v1h-1zM17 28h1v1h-1zM21 28h1v1h-1zM78 28h1v1h-1zM82 28h1v1h-1zM84 28h1v1h-1zM18 29h1v1h-1zM21 29h1v1h-1zM23 29h1v1h-1zM28 29h1v1h-1zM71 29h1v1h-1zM76 29h1v1h-1zM78 29h1v1h-1zM81 29h1v1h-1zM15 30h1v1h-1zM17 30h1v1h-1zM32 30h1v1h-1zM67 30h1v1h-1zM82 30h1v1h-1zM84 30h1v1h-1zM19 33h2v1h-2zM79 33h2v1h-2zM19 34h1v1h-1zM80 34h1v1h-1zM22 35h1v1h-1zM77 35h1v1h-1zM16 36h1v1h-1zM20 36h1v1h-1zM79 36h1v1h-1zM83 36h1v1h-1zM21 37h1v1h-1zM78 37h1v1h-1zM21 62h1v1h-1zM78 62h1v1h-1zM16 63h1v1h-1zM20 63h1v1h-1zM79 63h1v1h-1zM83 63h1v1h-1zM22 64h1v1h-1zM77 64h1v1h-1zM19 65h1v1h-1zM80 65h1v1h-1zM19 66h2v1h-2zM79 66h2v1h-2zM15 69h1v1h-1zM17 69h1v1h-1zM32 69h1v1h-1zM67 69h1v1h-1zM82 69h1v1h-1zM84 69h1v1h-1zM18 70h1v1h-1zM21 70h1v1h-1zM23 70h1v1h-1zM28 70h1v1h-1zM71 70h1v1h-1zM76 70h1v1h-1zM78 70h1v1h-1zM81 70h1v1h-1zM15 71h1v1h-1zM17 71h1v1h-1zM21 71h1v1h-1zM78 71h1v1h-1zM82 71h1v1h-1zM84 71h1v1h-1zM15 73h1v1h-1zM84 73h1v1h-1zM29 75h1v1h-1zM70 75h1v1h-1zM22 76h1v1h-1zM28 76h1v1h-1zM71 76h1v1h-1zM77 76h1v1h-1zM34 77h1v1h-1zM42 77h1v1h-1zM57 77h1v1h-1zM65 77h1v1h-1zM22 78h1v1h-1zM43 78h1v1h-1zM56 78h1v1h-1zM77 78h1v1h-1zM18 79h1v1h-1zM31 79h1v1h-1zM36 79h1v1h-1zM63 79h1v1h-1zM68 79h1v1h-1zM81 79h1v1h-1zM16 80h1v1h-1zM18 80h1v1h-1zM81 80h1v1h-1zM83 80h1v1h-1zM16 81h1v1h-1zM23 81h1v1h-1zM32 81h1v1h-1zM38 81h1v1h-1zM48 81h1v1h-1zM51 81h1v1h-1zM61 81h1v1h-1zM67 81h1v1h-1zM76 81h1v1h-1zM83 81h1v1h-1zM28 82h1v1h-1zM33 82h1v1h-1zM36 82h1v1h-1zM63 82h1v1h-1zM66 82h1v1h-1zM71 82h1v1h-1zM19 84h1v1h-1zM22 84h1v1h-1zM32 84h1v1h-1zM48 84h1v1h-1zM51 84h1v1h-1zM67 84h1v1h-1zM77 84h1v1h-1zM80 84h1v1h-1zM22 85h1v1h-1zM35 85h1v1h-1zM42 85h1v1h-1zM47 85h2v1h-2zM51 85h2v1h-2zM57 85h1v1h-1zM64 85h1v1h-1zM77 85h1v1h-1zM21 86h1v1h-1zM27 86h1v1h-1zM34 86h1v1h-1zM65 86h1v1h-1zM72 86h1v1h-1zM78 86h1v1h-1zM24 87h1v1h-1zM32 87h1v1h-1zM48 87h1v1h-1zM51 87h1v1h-1zM67 87h1v1h-1zM75 87h1v1h-1zM16 88h1v1h-1zM83 88h1v1h-1zM25 89h1v1h-1zM48 89h1v1h-1zM51 89h1v1h-1zM74 89h1v1h-1zM28 90h1v1h-1zM71 90h1v1h-1zM15 91h1v1h-1zM30 91h1v1h-1zM43 91h1v1h-1zM56 91h1v1h-1zM69 91h1v1h-1zM84 91h1v1h-1zM39 92h1v1h-1zM42 92h1v1h-1zM47 92h1v1h-1zM52 92h1v1h-1zM57 92h1v1h-1zM60 92h1v1h-1zM38 93h1v1h-1zM44 93h1v1h-1zM49 93h2v1h-2zM55 93h1v1h-1zM61 93h1v1h-1zM17 94h1v1h-1zM22 94h1v1h-1zM26 94h1v1h-1zM29 94h1v1h-1zM36 94h1v1h-1zM41 94h1v1h-1zM58 94h1v1h-1zM63 94h1v1h-1zM70 94h1v1h-1zM73 94h1v1h-1zM77 94h1v1h-1zM82 94h1v1h-1zM18 95h1v1h-1zM27 95h1v1h-1zM32 95h1v1h-1zM37 95h2v1h-2zM45 95h1v1h-1zM54 95h1v1h-1zM61 95h2v1h-2zM67 95h1v1h-1zM72 95h1v1h-1zM81 95h1v1h-1zM15 96h1v1h-1zM28 96h1v1h-1zM30 96h1v1h-1zM69 96h1v1h-1zM71 96h1v1h-1zM84 96h1v1h-1z"/><path fill="#f31700" d="M31 3h1v1h-1zM40 3h1v1h-1zM45 3h1v1h-1zM47 3h1v1h-1zM49 3h2v1h-2zM52 3h1v1h-1zM54 3h1v1h-1zM59 3h1v1h-1zM68 3h1v1h-1zM15 4h2v1h-2zM39 4h1v1h-1zM60 4h1v1h-1zM83 4h2v1h-2zM49 5h2v1h-2zM24 6h1v1h-1zM75 6h1v1h-1zM14 7h1v1h-1zM85 7h1v1h-1zM40 8h1v1h-1zM45 8h1v1h-1zM54 8h1v1h-1zM59 8h1v1h-1zM35 9h1v1h-1zM64 9h1v1h-1zM15 10h1v1h-1zM24 10h1v1h-1zM30 10h1v1h-1zM37 10h1v1h-1zM62 10h1v1h-1zM69 10h1v1h-1zM75 10h1v1h-1zM84 10h1v1h-1zM25 11h1v1h-1zM46 11h1v1h-1zM53 11h1v1h-1zM74 11h1v1h-1zM15 12h1v1h-1zM31 12h1v1h-1zM68 12h1v1h-1zM84 12h1v1h-1zM37 13h1v1h-1zM44 13h1v1h-1zM55 13h1v1h-1zM62 13h1v1h-1zM25 14h1v1h-1zM74 14h1v1h-1zM31 15h1v1h-1zM37 15h1v1h-1zM62 15h1v1h-1zM68 15h1v1h-1zM14 16h1v1h-1zM20 16h1v1h-1zM23 16h1v1h-1zM33 16h1v1h-1zM37 16h1v1h-1zM62 16h1v1h-1zM66 16h1v1h-1zM76 16h1v1h-1zM79 16h1v1h-1zM85 16h1v1h-1zM14 17h1v1h-1zM17 17h1v1h-1zM34 17h1v1h-1zM39 17h1v1h-1zM42 17h1v1h-1zM57 17h1v1h-1zM60 17h1v1h-1zM65 17h1v1h-1zM82 17h1v1h-1zM85 17h1v1h-1zM18 18h1v1h-1zM30 18h1v1h-1zM69 18h1v1h-1zM81 18h1v1h-1zM35 19h1v1h-1zM44 19h1v1h-1zM46 19h1v1h-1zM48 19h4v1h-4zM53 19h1v1h-1zM55 19h1v1h-1zM64 19h1v1h-1zM21 20h1v1h-1zM34 20h1v1h-1zM48 20h4v1h-4zM65 20h1v1h-1zM78 20h1v1h-1zM17 21h1v1h-1zM19 21h1v1h-1zM80 21h1v1h-1zM82 21h1v1h-1zM19 22h1v1h-1zM80 22h1v1h-1zM35 24h1v1h-1zM64 24h1v1h-1zM29 26h1v1h-1zM70 26h1v1h-1zM15 27h1v1h-1zM84 27h1v1h-1zM16 28h1v1h-1zM83 28h1v1h-1zM21 30h1v1h-1zM24 30h1v1h-1zM75 30h1v1h-1zM78 30h1v1h-1zM23 31h1v1h-1zM76 31h1v1h-1zM23 32h1v1h-1zM76 32h1v1h-1zM24 33h1v1h-1zM75 33h1v1h-1zM20 35h1v1h-1zM79 35h1v1h-1zM20 64h1v1h-1zM79 64h1v1h-1zM24 66h1v1h-1zM75 66h1v1h-1zM23 67h1v1h-1zM76 67h1v1h-1zM23 68h1v1h-1zM76 68h1v1h-1zM21 69h1v1h-1zM24 69h1v1h-1zM75 69h1v1h-1zM78 69h1v1h-1zM16 71h1v1h-1zM83 71h1v1h-1zM15 72h1v1h-1zM84 72h1v1h-1zM29 73h1v1h-1zM70 73h1v1h-1zM35 75h1v1h-1zM64 75h1v1h-1zM19 77h1v1h-1zM80 77h1v1h-1zM17 78h1v1h-1zM19 78h1v1h-1zM80 78h1v1h-1zM82 78h1v1h-1zM21 79h1v1h-1zM34 79h1v1h-1zM48 79h4v1h-4zM65 79h1v1h-1zM78 79h1v1h-1zM35 80h1v1h-1zM44 80h1v1h-1zM46 80h1v1h-1zM48 80h4v1h-4zM53 80h1v1h-1zM55 80h1v1h-1zM64 80h1v1h-1zM18 81h1v1h-1zM30 81h1v1h-1zM69 81h1v1h-1zM81 81h1v1h-1zM14 82h1v1h-1zM17 82h1v1h-1zM34 82h1v1h-1zM39 82h1v1h-1zM42 82h1v1h-1zM57 82h1v1h-1zM60 82h1v1h-1zM65 82h1v1h-1zM82 82h1v1h-1zM85 82h1v1h-1zM14 83h1v1h-1zM20 83h1v1h-1zM23 83h1v1h-1zM33 83h1v1h-1zM37 83h1v1h-1zM62 83h1v1h-1zM66 83h1v1h-1zM76 83h1v1h-1zM79 83h1v1h-1zM85 83h1v1h-1zM31 84h1v1h-1zM37 84h1v1h-1zM62 84h1v1h-1zM68 84h1v1h-1zM25 85h1v1h-1zM74 85h1v1h-1zM37 86h1v1h-1zM44 86h1v1h-1zM55 86h1v1h-1zM62 86h1v1h-1zM15 87h1v1h-1zM31 87h1v1h-1zM68 87h1v1h-1zM84 87h1v1h-1zM25 88h1v1h-1zM46 88h1v1h-1zM53 88h1v1h-1zM74 88h1v1h-1zM15 89h1v1h-1zM24 89h1v1h-1zM30 89h1v1h-1zM37 89h1v1h-1zM62 89h1v1h-1zM69 89h1v1h-1zM75 89h1v1h-1zM84 89h1v1h-1zM35 90h1v1h-1zM64 90h1v1h-1zM40 91h1v1h-1zM45 91h1v1h-1zM54 91h1v1h-1zM59 91h1v1h-1zM14 92h1v1h-1zM85 92h1v1h-1zM24 93h1v1h-1zM75 93h1v1h-1zM49 94h2v1h-2zM15 95h2v1h-2zM39 95h1v1h-1zM60 95h1v1h-1zM83 95h2v1h-2zM31 96h1v1h-1zM40 96h1v1h-1zM45 96h1v1h-1zM47 96h1v1h-1zM49 96h2v1h-2zM52 96h1v1h-1zM54 96h1v1h-1zM59 96h1v1h-1zM68 96h1v1h-1z"/><path fill="#f10600" d="M21 3h1v1h-1zM24 3h1v1h-1zM37 3h1v1h-1zM41 3h3v1h-3zM56 3h3v1h-3zM62 3h1v1h-1zM75 3h1v1h-1zM78 3h1v1h-1zM20 4h1v1h-1zM30 4h1v1h-1zM46 4h1v1h-1zM53 4h1v1h-1zM69 4h1v1h-1zM79 4h1v1h-1zM21 5h1v1h-1zM23 5h1v1h-1zM28 5h1v1h-1zM39 5h1v1h-1zM60 5h1v1h-1zM71 5h1v1h-1zM76 5h1v1h-1zM78 5h1v1h-1zM19 6h1v1h-1zM27 6h1v1h-1zM31 6h1v1h-1zM33 6h1v1h-1zM43 6h1v1h-1zM56 6h1v1h-1zM66 6h1v1h-1zM68 6h1v1h-1zM72 6h1v1h-1zM80 6h1v1h-1zM28 7h1v1h-1zM33 7h1v1h-1zM38 7h1v1h-1zM46 7h1v1h-1zM53 7h1v1h-1zM61 7h1v1h-1zM66 7h1v1h-1zM71 7h1v1h-1zM17 8h1v1h-1zM21 8h1v1h-1zM25 8h1v1h-1zM31 8h1v1h-1zM35 8h1v1h-1zM44 8h1v1h-1zM55 8h1v1h-1zM64 8h1v1h-1zM68 8h1v1h-1zM74 8h1v1h-1zM78 8h1v1h-1zM82 8h1v1h-1zM15 9h2v1h-2zM21 9h1v1h-1zM27 9h1v1h-1zM31 9h1v1h-1zM38 9h1v1h-1zM42 9h1v1h-1zM49 9h2v1h-2zM57 9h1v1h-1zM61 9h1v1h-1zM68 9h1v1h-1zM72 9h1v1h-1zM78 9h1v1h-1zM83 9h2v1h-2zM36 10h1v1h-1zM39 10h2v1h-2zM59 10h2v1h-2zM63 10h1v1h-1zM33 11h1v1h-1zM49 11h2v1h-2zM66 11h1v1h-1zM16 12h2v1h-2zM21 12h1v1h-1zM23 12h1v1h-1zM26 12h1v1h-1zM45 12h1v1h-1zM54 12h1v1h-1zM73 12h1v1h-1zM76 12h1v1h-1zM78 12h1v1h-1zM82 12h2v1h-2zM23 13h2v1h-2zM33 13h1v1h-1zM66 13h1v1h-1zM75 13h2v1h-2zM32 14h1v1h-1zM67 14h1v1h-1zM26 15h1v1h-1zM30 15h1v1h-1zM35 15h1v1h-1zM41 15h2v1h-2zM57 15h2v1h-2zM64 15h1v1h-1zM69 15h1v1h-1zM73 15h1v1h-1zM18 16h1v1h-1zM22 16h1v1h-1zM24 16h2v1h-2zM31 16h1v1h-1zM68 16h1v1h-1zM74 16h2v1h-2zM77 16h1v1h-1zM81 16h1v1h-1zM19 17h1v1h-1zM26 17h1v1h-1zM41 17h1v1h-1zM47 17h2v1h-2zM51 17h2v1h-2zM58 17h1v1h-1zM73 17h1v1h-1zM80 17h1v1h-1zM36 18h1v1h-1zM63 18h1v1h-1zM17 19h1v1h-1zM25 19h1v1h-1zM32 19h1v1h-1zM67 19h1v1h-1zM74 19h1v1h-1zM82 19h1v1h-1zM32 20h1v1h-1zM46 20h1v1h-1zM53 20h1v1h-1zM67 20h1v1h-1zM38 21h1v1h-1zM61 21h1v1h-1zM20 22h2v1h-2zM25 22h1v1h-1zM29 22h1v1h-1zM70 22h1v1h-1zM74 22h1v1h-1zM78 22h2v1h-2zM21 23h1v1h-1zM24 23h1v1h-1zM75 23h1v1h-1zM78 23h1v1h-1zM23 24h1v1h-1zM76 24h1v1h-1zM15 25h1v1h-1zM29 25h1v1h-1zM70 25h1v1h-1zM84 25h1v1h-1zM17 27h1v1h-1zM24 27h5v1h-5zM71 27h5v1h-5zM82 27h1v1h-1zM18 28h1v1h-1zM22 28h1v1h-1zM77 28h1v1h-1zM81 28h1v1h-1zM17 29h1v1h-1zM27 29h1v1h-1zM72 29h1v1h-1zM82 29h1v1h-1zM19 31h1v1h-1zM80 31h1v1h-1zM19 68h1v1h-1zM80 68h1v1h-1zM17 70h1v1h-1zM27 70h1v1h-1zM72 70h1v1h-1zM82 70h1v1h-1zM18 71h1v1h-1zM22 71h1v1h-1zM77 71h1v1h-1zM81 71h1v1h-1zM17 72h1v1h-1zM24 72h5v1h-5zM71 72h5v1h-5zM82 72h1v1h-1zM15 74h1v1h-1zM29 74h1v1h-1zM70 74h1v1h-1zM84 74h1v1h-1zM23 75h1v1h-1zM76 75h1v1h-1zM21 76h1v1h-1zM24 76h1v1h-1zM75 76h1v1h-1zM78 76h1v1h-1zM20 77h2v1h-2zM25 77h1v1h-1zM29 77h1v1h-1zM70 77h1v1h-1zM74 77h1v1h-1zM78 77h2v1h-2zM38 78h1v1h-1zM61 78h1v1h-1zM32 79h1v1h-1zM46 79h1v1h-1zM53 79h1v1h-1zM67 79h1v1h-1zM17 80h1v1h-1zM25 80h1v1h-1zM32 80h1v1h-1zM67 80h1v1h-1zM74 80h1v1h-1zM82 80h1v1h-1zM36 81h1v1h-1zM63 81h1v1h-1zM19 82h1v1h-1zM26 82h1v1h-1zM41 82h1v1h-1zM47 82h2v1h-2zM51 82h2v1h-2zM58 82h1v1h-1zM73 82h1v1h-1zM80 82h1v1h-1zM18 83h1v1h-1zM22 83h1v1h-1zM24 83h2v1h-2zM31 83h1v1h-1zM68 83h1v1h-1zM74 83h2v1h-2zM77 83h1v1h-1zM81 83h1v1h-1zM26 84h1v1h-1zM30 84h1v1h-1zM35 84h1v1h-1zM41 84h2v1h-2zM57 84h2v1h-2zM64 84h1v1h-1zM69 84h1v1h-1zM73 84h1v1h-1zM32 85h1v1h-1zM67 85h1v1h-1zM23 86h2v1h-2zM33 86h1v1h-1zM66 86h1v1h-1zM75 86h2v1h-2zM16 87h2v1h-2zM21 87h1v1h-1zM23 87h1v1h-1zM26 87h1v1h-1zM45 87h1v1h-1zM54 87h1v1h-1zM73 87h1v1h-1zM76 87h1v1h-1zM78 87h1v1h-1zM82 87h2v1h-2zM33 88h1v1h-1zM49 88h2v1h-2zM66 88h1v1h-1zM36 89h1v1h-1zM39 89h2v1h-2zM59 89h2v1h-2zM63 89h1v1h-1zM15 90h2v1h-2zM21 90h1v1h-1zM27 90h1v1h-1zM31 90h1v1h-1zM38 90h1v1h-1zM42 90h1v1h-1zM49 90h2v1h-2zM57 90h1v1h-1zM61 90h1v1h-1zM68 90h1v1h-1zM72 90h1v1h-1zM78 90h1v1h-1zM83 90h2v1h-2zM17 91h1v1h-1zM21 91h1v1h-1zM25 91h1v1h-1zM31 91h1v1h-1zM35 91h1v1h-1zM44 91h1v1h-1zM55 91h1v1h-1zM64 91h1v1h-1zM68 91h1v1h-1zM74 91h1v1h-1zM78 91h1v1h-1zM82 91h1v1h-1zM28 92h1v1h-1zM33 92h1v1h-1zM38 92h1v1h-1zM46 92h1v1h-1zM53 92h1v1h-1zM61 92h1v1h-1zM66 92h1v1h-1zM71 92h1v1h-1zM19 93h1v1h-1zM27 93h1v1h-1zM31 93h1v1h-1zM33 93h1v1h-1zM43 93h1v1h-1zM56 93h1v1h-1zM66 93h1v1h-1zM68 93h1v1h-1zM72 93h1v1h-1zM80 93h1v1h-1zM21 94h1v1h-1zM23 94h1v1h-1zM28 94h1v1h-1zM39 94h1v1h-1zM60 94h1v1h-1zM71 94h1v1h-1zM76 94h1v1h-1zM78 94h1v1h-1zM20 95h1v1h-1zM30 95h1v1h-1zM46 95h1v1h-1zM53 95h1v1h-1zM69 95h1v1h-1zM79 95h1v1h-1zM21 96h1v1h-1zM24 96h1v1h-1zM37 96h1v1h-1zM41 96h3v1h-3zM56 96h3v1h-3zM62 96h1v1h-1zM75 96h1v1h-1zM78 96h1v1h-1z"/><path fill="#e90000" d="M22 3h1v1h-1zM38 3h1v1h-1zM61 3h1v1h-1zM77 3h1v1h-1zM17 4h1v1h-1zM21 4h2v1h-2zM26 4h1v1h-1zM28 4h1v1h-1zM41 4h1v1h-1zM44 4h1v1h-1zM49 4h2v1h-2zM55 4h1v1h-1zM58 4h1v1h-1zM71 4h1v1h-1zM73 4h1v1h-1zM77 4h2v1h-2zM82 4h1v1h-1zM25 5h1v1h-1zM35 5h1v1h-1zM38 5h1v1h-1zM48 5h1v1h-1zM51 5h1v1h-1zM61 5h1v1h-1zM64 5h1v1h-1zM74 5h1v1h-1zM16 6h1v1h-1zM20 6h2v1h-2zM29 6h1v1h-1zM34 6h2v1h-2zM37 6h1v1h-1zM42 6h1v1h-1zM48 6h1v1h-1zM51 6h1v1h-1zM57 6h1v1h-1zM62 6h1v1h-1zM64 6h2v1h-2zM70 6h1v1h-1zM78 6h2v1h-2zM83 6h1v1h-1zM20 7h1v1h-1zM40 7h1v1h-1zM49 7h2v1h-2zM59 7h1v1h-1zM79 7h1v1h-1zM36 8h1v1h-1zM46 8h1v1h-1zM53 8h1v1h-1zM63 8h1v1h-1zM17 9h1v1h-1zM36 9h2v1h-2zM39 9h1v1h-1zM60 9h1v1h-1zM62 9h2v1h-2zM82 9h1v1h-1zM17 10h1v1h-1zM20 10h1v1h-1zM23 10h1v1h-1zM29 10h1v1h-1zM43 10h1v1h-1zM56 10h1v1h-1zM70 10h1v1h-1zM76 10h1v1h-1zM79 10h1v1h-1zM82 10h1v1h-1zM17 11h1v1h-1zM20 11h1v1h-1zM27 11h1v1h-1zM43 11h1v1h-1zM45 11h1v1h-1zM54 11h1v1h-1zM56 11h1v1h-1zM72 11h1v1h-1zM79 11h1v1h-1zM82 11h1v1h-1zM28 12h1v1h-1zM46 12h2v1h-2zM52 12h2v1h-2zM71 12h1v1h-1zM17 13h2v1h-2zM43 13h1v1h-1zM45 13h1v1h-1zM54 13h1v1h-1zM56 13h1v1h-1zM81 13h2v1h-2zM23 14h1v1h-1zM30 14h2v1h-2zM34 14h1v1h-1zM41 14h1v1h-1zM44 14h2v1h-2zM54 14h2v1h-2zM58 14h1v1h-1zM65 14h1v1h-1zM68 14h2v1h-2zM76 14h1v1h-1zM27 15h1v1h-1zM43 15h3v1h-3zM54 15h3v1h-3zM72 15h1v1h-1zM16 16h1v1h-1zM38 16h1v1h-1zM47 16h1v1h-1zM52 16h1v1h-1zM61 16h1v1h-1zM83 16h1v1h-1zM22 17h1v1h-1zM37 17h1v1h-1zM46 17h1v1h-1zM53 17h1v1h-1zM62 17h1v1h-1zM77 17h1v1h-1zM15 18h1v1h-1zM17 18h1v1h-1zM31 18h1v1h-1zM49 18h2v1h-2zM68 18h1v1h-1zM82 18h1v1h-1zM84 18h1v1h-1zM24 19h1v1h-1zM26 19h1v1h-1zM29 19h1v1h-1zM45 19h1v1h-1zM54 19h1v1h-1zM70 19h1v1h-1zM73 19h1v1h-1zM75 19h1v1h-1zM17 20h1v1h-1zM22 20h2v1h-2zM27 20h3v1h-3zM37 20h1v1h-1zM45 20h1v1h-1zM54 20h1v1h-1zM62 20h1v1h-1zM70 20h3v1h-3zM76 20h2v1h-2zM82 20h1v1h-1zM20 21h1v1h-1zM32 21h3v1h-3zM42 21h1v1h-1zM57 21h1v1h-1zM65 21h3v1h-3zM79 21h1v1h-1zM23 22h1v1h-1zM26 22h1v1h-1zM73 22h1v1h-1zM76 22h1v1h-1zM25 23h2v1h-2zM38 23h1v1h-1zM61 23h1v1h-1zM73 23h2v1h-2zM22 24h1v1h-1zM24 24h1v1h-1zM27 24h2v1h-2zM71 24h2v1h-2zM75 24h1v1h-1zM77 24h1v1h-1zM20 25h1v1h-1zM22 25h1v1h-1zM77 25h1v1h-1zM79 25h1v1h-1zM16 26h1v1h-1zM18 26h2v1h-2zM22 26h2v1h-2zM31 26h1v1h-1zM68 26h1v1h-1zM76 26h2v1h-2zM80 26h2v1h-2zM83 26h1v1h-1zM19 27h1v1h-1zM23 27h1v1h-1zM29 27h1v1h-1zM70 27h1v1h-1zM76 27h1v1h-1zM80 27h1v1h-1zM19 72h1v1h-1zM23 72h1v1h-1zM29 72h1v1h-1zM70 72h1v1h-1zM76 72h1v1h-1zM80 72h1v1h-1zM16 73h1v1h-1zM18 73h2v1h-2zM22 73h2v1h-2zM31 73h1v1h-1zM68 73h1v1h-1zM76 73h2v1h-2zM80 73h2v1h-2zM83 73h1v1h-1zM20 74h1v1h-1zM22 74h1v1h-1zM77 74h1v1h-1zM79 74h1v1h-1zM22 75h1v1h-1zM24 75h1v1h-1zM27 75h2v1h-2zM71 75h2v1h-2zM75 75h1v1h-1zM77 75h1v1h-1zM25 76h2v1h-2zM38 76h1v1h-1zM61 76h1v1h-1zM73 76h2v1h-2zM23 77h1v1h-1zM26 77h1v1h-1zM73 77h1v1h-1zM76 77h1v1h-1zM20 78h1v1h-1zM32 78h3v1h-3zM42 78h1v1h-1zM57 78h1v1h-1zM65 78h3v1h-3zM79 78h1v1h-1zM17 79h1v1h-1zM22 79h2v1h-2zM27 79h3v1h-3zM37 79h1v1h-1zM45 79h1v1h-1zM54 79h1v1h-1zM62 79h1v1h-1zM70 79h3v1h-3zM76 79h2v1h-2zM82 79h1v1h-1zM24 80h1v1h-1zM26 80h1v1h-1zM29 80h1v1h-1zM45 80h1v1h-1zM54 80h1v1h-1zM70 80h1v1h-1zM73 80h1v1h-1zM75 80h1v1h-1zM15 81h1v1h-1zM17 81h1v1h-1zM31 81h1v1h-1zM49 81h2v1h-2zM68 81h1v1h-1zM82 81h1v1h-1zM84 81h1v1h-1zM22 82h1v1h-1zM37 82h1v1h-1zM46 82h1v1h-1zM53 82h1v1h-1zM62 82h1v1h-1zM77 82h1v1h-1zM16 83h1v1h-1zM38 83h1v1h-1zM47 83h1v1h-1zM52 83h1v1h-1zM61 83h1v1h-1zM83 83h1v1h-1zM27 84h1v1h-1zM43 84h3v1h-3zM54 84h3v1h-3zM72 84h1v1h-1zM23 85h1v1h-1zM30 85h2v1h-2zM34 85h1v1h-1zM41 85h1v1h-1zM44 85h2v1h-2zM54 85h2v1h-2zM58 85h1v1h-1zM65 85h1v1h-1zM68 85h2v1h-2zM76 85h1v1h-1zM17 86h2v1h-2zM43 86h1v1h-1zM45 86h1v1h-1zM54 86h1v1h-1zM56 86h1v1h-1zM81 86h2v1h-2zM28 87h1v1h-1zM46 87h2v1h-2zM52 87h2v1h-2zM71 87h1v1h-1zM17 88h1v1h-1zM20 88h1v1h-1zM27 88h1v1h-1zM43 88h1v1h-1zM45 88h1v1h-1zM54 88h1v1h-1zM56 88h1v1h-1zM72 88h1v1h-1zM79 88h1v1h-1zM82 88h1v1h-1zM17 89h1v1h-1zM20 89h1v1h-1zM23 89h1v1h-1zM29 89h1v1h-1zM43 89h1v1h-1zM56 89h1v1h-1zM70 89h1v1h-1zM76 89h1v1h-1zM79 89h1v1h-1zM82 89h1v1h-1zM17 90h1v1h-1zM36 90h2v1h-2zM39 90h1v1h-1zM60 90h1v1h-1zM62 90h2v1h-2zM82 90h1v1h-1zM36 91h1v1h-1zM46 91h1v1h-1zM53 91h1v1h-1zM63 91h1v1h-1zM20 92h1v1h-1zM40 92h1v1h-1zM49 92h2v1h-2zM59 92h1v1h-1zM79 92h1v1h-1zM16 93h1v1h-1zM20 93h2v1h-2zM29 93h1v1h-1zM34 93h2v1h-2zM37 93h1v1h-1zM42 93h1v1h-1zM48 93h1v1h-1zM51 93h1v1h-1zM57 93h1v1h-1zM62 93h1v1h-1zM64 93h2v1h-2zM70 93h1v1h-1zM78 93h2v1h-2zM83 93h1v1h-1zM25 94h1v1h-1zM35 94h1v1h-1zM38 94h1v1h-1zM48 94h1v1h-1zM51 94h1v1h-1zM61 94h1v1h-1zM64 94h1v1h-1zM74 94h1v1h-1zM17 95h1v1h-1zM21 95h2v1h-2zM26 95h1v1h-1zM28 95h1v1h-1zM41 95h1v1h-1zM44 95h1v1h-1zM49 95h2v1h-2zM55 95h1v1h-1zM58 95h1v1h-1zM71 95h1v1h-1zM73 95h1v1h-1zM77 95h2v1h-2zM82 95h1v1h-1zM22 96h1v1h-1zM38 96h1v1h-1zM61 96h1v1h-1zM77 96h1v1h-1z"/><path fill="#de0000" d="M46 3h1v1h-1zM53 3h1v1h-1zM34 4h1v1h-1zM65 4h1v1h-1zM16 5h1v1h-1zM34 5h1v1h-1zM37 5h1v1h-1zM42 5h1v1h-1zM57 5h1v1h-1zM62 5h1v1h-1zM65 5h1v1h-1zM83 5h1v1h-1zM15 6h1v1h-1zM46 6h2v1h-2zM52 6h2v1h-2zM84 6h1v1h-1zM25 7h1v1h-1zM45 7h1v1h-1zM54 7h1v1h-1zM74 7h1v1h-1zM19 8h1v1h-1zM29 8h1v1h-1zM38 8h2v1h-2zM41 8h1v1h-1zM48 8h1v1h-1zM51 8h1v1h-1zM58 8h1v1h-1zM60 8h2v1h-2zM70 8h1v1h-1zM80 8h1v1h-1zM18 9h1v1h-1zM29 9h1v1h-1zM70 9h1v1h-1zM81 9h1v1h-1zM26 10h1v1h-1zM46 10h1v1h-1zM53 10h1v1h-1zM73 10h1v1h-1zM32 11h1v1h-1zM35 11h1v1h-1zM37 11h1v1h-1zM41 11h1v1h-1zM58 11h1v1h-1zM62 11h1v1h-1zM64 11h1v1h-1zM67 11h1v1h-1zM18 12h2v1h-2zM36 12h1v1h-1zM49 12h2v1h-2zM63 12h1v1h-1zM80 12h2v1h-2zM38 13h1v1h-1zM61 13h1v1h-1zM15 14h1v1h-1zM21 14h1v1h-1zM36 14h1v1h-1zM43 14h1v1h-1zM56 14h1v1h-1zM63 14h1v1h-1zM78 14h1v1h-1zM84 14h1v1h-1zM24 15h1v1h-1zM29 15h1v1h-1zM33 15h1v1h-1zM46 15h1v1h-1zM53 15h1v1h-1zM66 15h1v1h-1zM70 15h1v1h-1zM75 15h1v1h-1zM15 16h1v1h-1zM29 16h1v1h-1zM45 16h2v1h-2zM53 16h2v1h-2zM70 16h1v1h-1zM84 16h1v1h-1zM16 17h1v1h-1zM18 17h1v1h-1zM24 17h1v1h-1zM35 17h1v1h-1zM64 17h1v1h-1zM75 17h1v1h-1zM81 17h1v1h-1zM83 17h1v1h-1zM22 18h1v1h-1zM26 18h1v1h-1zM29 18h1v1h-1zM39 18h1v1h-1zM60 18h1v1h-1zM70 18h1v1h-1zM73 18h1v1h-1zM77 18h1v1h-1zM27 19h1v1h-1zM39 19h2v1h-2zM43 19h1v1h-1zM56 19h1v1h-1zM59 19h2v1h-2zM72 19h1v1h-1zM33 20h1v1h-1zM39 20h1v1h-1zM60 20h1v1h-1zM66 20h1v1h-1zM35 21h1v1h-1zM64 21h1v1h-1zM33 22h1v1h-1zM66 22h1v1h-1zM28 25h1v1h-1zM71 25h1v1h-1zM26 26h1v1h-1zM73 26h1v1h-1zM18 27h1v1h-1zM81 27h1v1h-1zM25 29h1v1h-1zM74 29h1v1h-1zM25 70h1v1h-1zM74 70h1v1h-1zM18 72h1v1h-1zM81 72h1v1h-1zM26 73h1v1h-1zM73 73h1v1h-1zM28 74h1v1h-1zM71 74h1v1h-1zM33 77h1v1h-1zM66 77h1v1h-1zM35 78h1v1h-1zM64 78h1v1h-1zM33 79h1v1h-1zM39 79h1v1h-1zM60 79h1v1h-1zM66 79h1v1h-1zM27 80h1v1h-1zM39 80h2v1h-2zM43 80h1v1h-1zM56 80h1v1h-1zM59 80h2v1h-2zM72 80h1v1h-1zM22 81h1v1h-1zM26 81h1v1h-1zM29 81h1v1h-1zM39 81h1v1h-1zM60 81h1v1h-1zM70 81h1v1h-1zM73 81h1v1h-1zM77 81h1v1h-1zM16 82h1v1h-1zM18 82h1v1h-1zM24 82h1v1h-1zM35 82h1v1h-1zM64 82h1v1h-1zM75 82h1v1h-1zM81 82h1v1h-1zM83 82h1v1h-1zM15 83h1v1h-1zM29 83h1v1h-1zM45 83h2v1h-2zM53 83h2v1h-2zM70 83h1v1h-1zM84 83h1v1h-1zM24 84h1v1h-1zM29 84h1v1h-1zM33 84h1v1h-1zM46 84h1v1h-1zM53 84h1v1h-1zM66 84h1v1h-1zM70 84h1v1h-1zM75 84h1v1h-1zM15 85h1v1h-1zM21 85h1v1h-1zM36 85h1v1h-1zM43 85h1v1h-1zM56 85h1v1h-1zM63 85h1v1h-1zM78 85h1v1h-1zM84 85h1v1h-1zM38 86h1v1h-1zM61 86h1v1h-1zM18 87h2v1h-2zM36 87h1v1h-1zM49 87h2v1h-2zM63 87h1v1h-1zM80 87h2v1h-2zM32 88h1v1h-1zM35 88h1v1h-1zM37 88h1v1h-1zM41 88h1v1h-1zM58 88h1v1h-1zM62 88h1v1h-1zM64 88h1v1h-1zM67 88h1v1h-1zM26 89h1v1h-1zM46 89h1v1h-1zM53 89h1v1h-1zM73 89h1v1h-1zM18 90h1v1h-1zM29 90h1v1h-1zM70 90h1v1h-1zM81 90h1v1h-1zM19 91h1v1h-1zM29 91h1v1h-1zM38 91h2v1h-2zM41 91h1v1h-1zM48 91h1v1h-1zM51 91h1v1h-1zM58 91h1v1h-1zM60 91h2v1h-2zM70 91h1v1h-1zM80 91h1v1h-1zM25 92h1v1h-1zM45 92h1v1h-1zM54 92h1v1h-1zM74 92h1v1h-1zM15 93h1v1h-1zM46 93h2v1h-2zM52 93h2v1h-2zM84 93h1v1h-1zM16 94h1v1h-1zM34 94h1v1h-1zM37 94h1v1h-1zM42 94h1v1h-1zM57 94h1v1h-1zM62 94h1v1h-1zM65 94h1v1h-1zM83 94h1v1h-1zM34 95h1v1h-1zM65 95h1v1h-1zM46 96h1v1h-1zM53 96h1v1h-1z"/><path fill="#d40000" d="M19 4h1v1h-1zM80 4h1v1h-1zM19 5h2v1h-2zM24 5h1v1h-1zM27 5h1v1h-1zM45 5h1v1h-1zM54 5h1v1h-1zM72 5h1v1h-1zM75 5h1v1h-1zM79 5h2v1h-2zM25 6h1v1h-1zM32 6h1v1h-1zM67 6h1v1h-1zM74 6h1v1h-1zM19 7h1v1h-1zM29 7h2v1h-2zM36 7h1v1h-1zM63 7h1v1h-1zM69 7h2v1h-2zM80 7h1v1h-1zM24 8h1v1h-1zM28 8h1v1h-1zM71 8h1v1h-1zM75 8h1v1h-1zM24 9h3v1h-3zM32 9h1v1h-1zM67 9h1v1h-1zM73 9h3v1h-3zM35 10h1v1h-1zM38 10h1v1h-1zM41 10h2v1h-2zM57 10h2v1h-2zM61 10h1v1h-1zM64 10h1v1h-1zM28 11h1v1h-1zM38 11h1v1h-1zM61 11h1v1h-1zM71 11h1v1h-1zM41 12h2v1h-2zM57 12h2v1h-2zM22 13h1v1h-1zM29 13h1v1h-1zM32 13h1v1h-1zM40 13h1v1h-1zM59 13h1v1h-1zM67 13h1v1h-1zM70 13h1v1h-1zM77 13h1v1h-1zM16 15h1v1h-1zM28 15h1v1h-1zM71 15h1v1h-1zM83 15h1v1h-1zM27 16h1v1h-1zM72 16h1v1h-1zM15 17h1v1h-1zM21 17h1v1h-1zM78 17h1v1h-1zM84 17h1v1h-1zM37 18h1v1h-1zM42 18h1v1h-1zM44 18h1v1h-1zM55 18h1v1h-1zM57 18h1v1h-1zM62 18h1v1h-1zM28 19h1v1h-1zM36 19h1v1h-1zM63 19h1v1h-1zM71 19h1v1h-1zM26 20h1v1h-1zM38 20h1v1h-1zM43 20h1v1h-1zM56 20h1v1h-1zM61 20h1v1h-1zM73 20h1v1h-1zM27 21h1v1h-1zM29 21h1v1h-1zM31 21h1v1h-1zM68 21h1v1h-1zM70 21h1v1h-1zM72 21h1v1h-1zM36 22h1v1h-1zM63 22h1v1h-1zM24 25h3v1h-3zM73 25h3v1h-3zM25 26h1v1h-1zM27 26h1v1h-1zM72 26h1v1h-1zM74 26h1v1h-1zM25 73h1v1h-1zM27 73h1v1h-1zM72 73h1v1h-1zM74 73h1v1h-1zM24 74h3v1h-3zM73 74h3v1h-3zM36 77h1v1h-1zM63 77h1v1h-1zM27 78h1v1h-1zM29 78h1v1h-1zM31 78h1v1h-1zM68 78h1v1h-1zM70 78h1v1h-1zM72 78h1v1h-1zM26 79h1v1h-1zM38 79h1v1h-1zM43 79h1v1h-1zM56 79h1v1h-1zM61 79h1v1h-1zM73 79h1v1h-1zM28 80h1v1h-1zM36 80h1v1h-1zM63 80h1v1h-1zM71 80h1v1h-1zM37 81h1v1h-1zM42 81h1v1h-1zM44 81h1v1h-1zM55 81h1v1h-1zM57 81h1v1h-1zM62 81h1v1h-1zM15 82h1v1h-1zM21 82h1v1h-1zM78 82h1v1h-1zM84 82h1v1h-1zM27 83h1v1h-1zM72 83h1v1h-1zM16 84h1v1h-1zM28 84h1v1h-1zM71 84h1v1h-1zM83 84h1v1h-1zM22 86h1v1h-1zM29 86h1v1h-1zM32 86h1v1h-1zM40 86h1v1h-1zM59 86h1v1h-1zM67 86h1v1h-1zM70 86h1v1h-1zM77 86h1v1h-1zM41 87h2v1h-2zM57 87h2v1h-2zM28 88h1v1h-1zM38 88h1v1h-1zM61 88h1v1h-1zM71 88h1v1h-1zM35 89h1v1h-1zM38 89h1v1h-1zM41 89h2v1h-2zM57 89h2v1h-2zM61 89h1v1h-1zM64 89h1v1h-1zM24 90h3v1h-3zM32 90h1v1h-1zM67 90h1v1h-1zM73 90h3v1h-3zM24 91h1v1h-1zM28 91h1v1h-1zM71 91h1v1h-1zM75 91h1v1h-1zM19 92h1v1h-1zM29 92h2v1h-2zM36 92h1v1h-1zM63 92h1v1h-1zM69 92h2v1h-2zM80 92h1v1h-1zM25 93h1v1h-1zM32 93h1v1h-1zM67 93h1v1h-1zM74 93h1v1h-1zM19 94h2v1h-2zM24 94h1v1h-1zM27 94h1v1h-1zM45 94h1v1h-1zM54 94h1v1h-1zM72 94h1v1h-1zM75 94h1v1h-1zM79 94h2v1h-2zM19 95h1v1h-1zM80 95h1v1h-1z"/><path fill="#c90000" d="M25 4h1v1h-1zM74 4h1v1h-1zM43 5h2v1h-2zM55 5h2v1h-2zM45 6h1v1h-1zM54 6h1v1h-1zM37 7h1v1h-1zM62 7h1v1h-1zM27 10h1v1h-1zM32 10h2v1h-2zM66 10h2v1h-2zM72 10h1v1h-1zM21 11h1v1h-1zM78 11h1v1h-1zM25 12h1v1h-1zM39 12h1v1h-1zM60 12h1v1h-1zM74 12h1v1h-1zM19 14h2v1h-2zM40 14h1v1h-1zM59 14h1v1h-1zM79 14h2v1h-2zM39 15h1v1h-1zM60 15h1v1h-1zM32 17h1v1h-1zM67 17h1v1h-1zM43 18h1v1h-1zM56 18h1v1h-1zM21 19h1v1h-1zM42 19h1v1h-1zM57 19h1v1h-1zM78 19h1v1h-1zM36 21h1v1h-1zM63 21h1v1h-1zM38 22h1v1h-1zM61 22h1v1h-1zM34 23h1v1h-1zM65 23h1v1h-1zM23 25h1v1h-1zM76 25h1v1h-1zM23 74h1v1h-1zM76 74h1v1h-1zM34 76h1v1h-1zM65 76h1v1h-1zM38 77h1v1h-1zM61 77h1v1h-1zM36 78h1v1h-1zM63 78h1v1h-1zM21 80h1v1h-1zM42 80h1v1h-1zM57 80h1v1h-1zM78 80h1v1h-1zM43 81h1v1h-1zM56 81h1v1h-1zM32 82h1v1h-1zM67 82h1v1h-1zM39 84h1v1h-1zM60 84h1v1h-1zM19 85h2v1h-2zM40 85h1v1h-1zM59 85h1v1h-1zM79 85h2v1h-2zM25 87h1v1h-1zM39 87h1v1h-1zM60 87h1v1h-1zM74 87h1v1h-1zM21 88h1v1h-1zM78 88h1v1h-1zM27 89h1v1h-1zM32 89h2v1h-2zM66 89h2v1h-2zM72 89h1v1h-1zM37 92h1v1h-1zM62 92h1v1h-1zM45 93h1v1h-1zM54 93h1v1h-1zM43 94h2v1h-2zM55 94h2v1h-2zM25 95h1v1h-1zM74 95h1v1h-1z"/><path fill="#c40000" d="M42 4h1v1h-1zM57 4h1v1h-1zM18 5h1v1h-1zM81 5h1v1h-1zM44 7h1v1h-1zM55 7h1v1h-1zM21 10h1v1h-1zM78 10h1v1h-1zM18 11h1v1h-1zM26 11h1v1h-1zM73 11h1v1h-1zM81 11h1v1h-1zM22 12h1v1h-1zM77 12h1v1h-1zM17 16h1v1h-1zM82 16h1v1h-1zM21 18h1v1h-1zM33 18h1v1h-1zM66 18h1v1h-1zM78 18h1v1h-1zM30 19h1v1h-1zM41 19h1v1h-1zM58 19h1v1h-1zM69 19h1v1h-1zM40 20h3v1h-3zM57 20h3v1h-3zM37 21h1v1h-1zM62 21h1v1h-1zM37 22h1v1h-1zM62 22h1v1h-1zM24 26h1v1h-1zM75 26h1v1h-1zM24 73h1v1h-1zM75 73h1v1h-1zM37 77h1v1h-1zM62 77h1v1h-1zM37 78h1v1h-1zM62 78h1v1h-1zM40 79h3v1h-3zM57 79h3v1h-3zM30 80h1v1h-1zM41 80h1v1h-1zM58 80h1v1h-1zM69 80h1v1h-1zM21 81h1v1h-1zM33 81h1v1h-1zM66 81h1v1h-1zM78 81h1v1h-1zM17 83h1v1h-1zM82 83h1v1h-1zM22 87h1v1h-1zM77 87h1v1h-1zM18 88h1v1h-1zM26 88h1v1h-1zM73 88h1v1h-1zM81 88h1v1h-1zM21 89h1v1h-1zM78 89h1v1h-1zM44 92h1v1h-1zM55 92h1v1h-1zM18 94h1v1h-1zM81 94h1v1h-1zM42 95h1v1h-1zM57 95h1v1h-1z"/></svg></div><div style="position:absolute;left:165px;top:104px;width:435px;height:434px;box-sizing:border-box;border:1.4px solid #0a0a18;border-right-width:1px;"></div><div style="position:absolute;left:163px;top:105px;width:2px;height:12px;background:#9a9a9a;"></div><div style="position:absolute;left:587px;top:538px;width:12px;height:2px;background:#9a9a9a;"></div><div class="m" style="left:105.30px;top:94.98px;font-size:23px;line-height:23px;transform:scaleX(0.86);letter-spacing:0.6px;color:#141414;">15.0</div><div class="m" style="left:143.30px;top:311.08px;font-size:23px;line-height:23px;transform:scaleX(0.86);letter-spacing:0.6px;color:#141414;">0</div><div class="m" style="left:93.20px;top:526.58px;font-size:23px;line-height:23px;transform:scaleX(0.86);letter-spacing:0.6px;color:#141414;">-15.0</div><div class="m" style="left:135.00px;top:551.28px;font-size:23px;line-height:23px;transform:scaleX(0.86);letter-spacing:0.6px;color:#141414;">-15.0</div><div class="m" style="left:376.30px;top:550.88px;font-size:23px;line-height:23px;transform:scaleX(0.86);letter-spacing:0.6px;color:#141414;">0</div><div class="m" style="left:574.20px;top:551.28px;font-size:23px;line-height:23px;transform:scaleX(0.86);letter-spacing:0.6px;color:#141414;">15.0</div><div class="m" style="left:251.50px;top:580.17px;font-size:26.4px;line-height:26.4px;transform:scaleX(0.925);letter-spacing:0px;color:#141414;">X coordinate value</div><div class="m" style="left:37px;top:452px;font-size:26.4px;line-height:26.4px;transform-origin:0 0;transform:rotate(-90deg) scaleX(0.925);color:#141414">Y coordinate value</div><div class="m" style="left:619.40px;top:107.88px;font-size:23px;line-height:23px;transform:scaleX(0.86);letter-spacing:0.6px;color:#141414;">Incoherent</div><div class="m" style="left:619.40px;top:131.68px;font-size:23px;line-height:23px;transform:scaleX(0.86);letter-spacing:0.6px;color:#141414;">Illuminance</div><div style="position:absolute;left:619px;top:191px;width:38px;height:301px;background:linear-gradient(rgb(192,0,0) 0.0%,rgb(200,0,0) 3.0%,rgb(240,0,0) 9.0%,rgb(248,64,0) 15.0%,rgb(248,128,0) 20.0%,rgb(240,160,0) 24.0%,rgb(240,192,0) 28.0%,rgb(224,228,0) 34.0%,rgb(200,240,0) 40.0%,rgb(168,248,0) 46.0%,rgb(144,255,0) 50.0%,rgb(96,240,0) 56.0%,rgb(32,232,64) 63.0%,rgb(0,224,96) 70.0%,rgb(0,192,144) 76.0%,rgb(0,160,176) 83.0%,rgb(0,112,208) 89.0%,rgb(16,80,208) 94.0%,rgb(48,16,192) 100.0%);"></div><div class="m" style="left:661.20px;top:181.18px;font-size:23px;line-height:23px;transform:scaleX(0.86);letter-spacing:0.6px;color:#141414;">618.5</div><div class="m" style="left:661.20px;top:211.23px;font-size:23px;line-height:23px;transform:scaleX(0.86);letter-spacing:0.6px;color:#141414;">556.7</div><div class="m" style="left:661.20px;top:241.28px;font-size:23px;line-height:23px;transform:scaleX(0.86);letter-spacing:0.6px;color:#141414;">494.8</div><div class="m" style="left:661.20px;top:271.33px;font-size:23px;line-height:23px;transform:scaleX(0.86);letter-spacing:0.6px;color:#141414;">433.0</div><div class="m" style="left:661.20px;top:301.38px;font-size:23px;line-height:23px;transform:scaleX(0.86);letter-spacing:0.6px;color:#141414;">371.1</div><div class="m" style="left:661.20px;top:331.43px;font-size:23px;line-height:23px;transform:scaleX(0.86);letter-spacing:0.6px;color:#141414;">309.3</div><div class="m" style="left:661.20px;top:361.48px;font-size:23px;line-height:23px;transform:scaleX(0.86);letter-spacing:0.6px;color:#141414;">247.4</div><div class="m" style="left:661.20px;top:391.53px;font-size:23px;line-height:23px;transform:scaleX(0.86);letter-spacing:0.6px;color:#141414;">185.6</div><div class="m" style="left:661.20px;top:421.58px;font-size:23px;line-height:23px;transform:scaleX(0.86);letter-spacing:0.6px;color:#141414;">123.7</div><div class="m" style="left:661.20px;top:451.63px;font-size:23px;line-height:23px;transform:scaleX(0.86);letter-spacing:0.6px;color:#141414;">61.9</div><div class="m" style="left:661.20px;top:481.68px;font-size:23px;line-height:23px;transform:scaleX(0.86);letter-spacing:0.6px;color:#141414;">0.0</div><div style="position:absolute;left:6px;top:639px;width:962px;height:144px;box-sizing:border-box;border:1px solid #6e6e6e;background:#fff;"></div><div style="position:absolute;left:6px;top:662px;width:962px;height:1px;background:#7a7a7a;"></div><div style="position:absolute;left:647px;top:662px;width:1px;height:121px;background:#7a7a7a;"></div><div style="position:absolute;left:647px;top:735px;width:321px;height:1px;background:#7a7a7a;"></div><div class="m" style="left:280.50px;top:643.99px;font-size:19.2px;line-height:19.2px;transform:scaleX(0.948);letter-spacing:0px;color:#141414;">Detector Image: Incoherent Illuminance</div><div class="m" style="left:18.90px;top:664.98px;font-size:12.95px;line-height:12.95px;transform:scaleX(1.0);letter-spacing:0px;color:#1a1a1a;white-space:pre;">Digital Projector Fly's Eye Integrator</div><div class="m" style="left:18.90px;top:677.72px;font-size:12.95px;line-height:12.95px;transform:scaleX(1.0);letter-spacing:0px;color:#1a1a1a;white-space:pre;">4/25/2018</div><div class="m" style="left:18.90px;top:690.46px;font-size:12.95px;line-height:12.95px;transform:scaleX(1.0);letter-spacing:0px;color:#1a1a1a;white-space:pre;">Detector 7, NSCG Surface 1: Homog. Plane</div><div class="m" style="left:18.90px;top:703.20px;font-size:12.95px;line-height:12.95px;transform:scaleX(1.0);letter-spacing:0px;color:#1a1a1a;white-space:pre;">Size 30.000 W X 30.000 H Millimeters, Pixels 100 W X 100 H, Total Hits = 2827224</div><div class="m" style="left:18.90px;top:715.94px;font-size:12.95px;line-height:12.95px;transform:scaleX(1.0);letter-spacing:0px;color:#1a1a1a;white-space:pre;">Peak Illuminance: 6.1855E+02 Lumens/cm^2</div><div class="m" style="left:18.90px;top:728.68px;font-size:12.95px;line-height:12.95px;transform:scaleX(1.0);letter-spacing:0px;color:#1a1a1a;white-space:pre;">Total Power     : 3.3030E+03 Lumens</div><div class="m" style="left:653.50px;top:737.15px;font-size:12.2px;line-height:12.2px;transform:scaleX(1.0);letter-spacing:0px;color:#1a1a1a;">Digital_projector_flys_eye_homogenizer.zmx</div><div class="m" style="left:734.50px;top:748.15px;font-size:12.2px;line-height:12.2px;transform:scaleX(1.0);letter-spacing:0px;color:#1a1a1a;">Configuration 1 of 1</div><div style="position:absolute;left:1px;top:783px;width:973px;height:30px;background:#cdcfd3;"></div><div style="position:absolute;left:1px;top:788px;width:973px;height:1px;background:#8e9096;"></div><div style="position:absolute;left:968px;top:783px;width:6px;height:5px;background:#e6e6ea;"></div><div style="position:absolute;left:1px;top:783px;width:967px;height:5px;background:#e8e8ec;"></div><svg style="position:absolute;left:0;top:787px" width="330" height="27" viewBox="0 787 330 27">
<defs>
<linearGradient id="tg" x1="0" y1="0" x2="0" y2="1"><stop offset="0" stop-color="#f2f2f4"/><stop offset="1" stop-color="#e4e5e8"/></linearGradient>
<linearGradient id="tb" x1="0" y1="0" x2="0" y2="1"><stop offset="0" stop-color="#d6d8dc"/><stop offset="1" stop-color="#bcc0c6"/></linearGradient>
</defs>
<path d="M92 789 V807 Q92 809.5 95 809.5 H162 Q164.5 809.5 164.5 807 V790.5 Q164.5 788.5 162.5 788.5 H93 Z" fill="url(#tb)" stroke="#8a8c92" stroke-width="1"/>
<path d="M165 789 V807 Q167 809.5 170 809.5 H234.5 Q237 809.5 237 807 V790.5 Q237 788.5 235 788.5 H166 Z" fill="url(#tb)" stroke="#8a8c92" stroke-width="1"/>
<path d="M237.5 789 V807 Q239.5 809.5 242.5 809.5 H317 Q319.5 809.5 319.5 807 V790.5 Q319.5 788.5 317.5 788.5 H238 Z" fill="url(#tb)" stroke="#8a8c92" stroke-width="1"/>
<path d="M3 788.5 H12 C20 788.5 22 806 28 809 Q30 809.8 33 809.8 H89.5 Q91.5 809.8 91.5 807.5 V788.5" fill="url(#tg)" stroke="#8a8c92" stroke-width="1"/>
<rect x="1" y="788" width="90" height="1.2" fill="#f0f0f2"/>
</svg><div class="s" style="left:36.50px;top:791.77px;font-size:13.5px;line-height:13.5px;letter-spacing:0.0px;color:#222;">Graph</div><div class="s" style="left:106.50px;top:791.77px;font-size:13.5px;line-height:13.5px;letter-spacing:0.0px;color:#222;">Classic</div><div class="s" style="left:187.50px;top:791.77px;font-size:13.5px;line-height:13.5px;letter-spacing:0.0px;color:#222;">Text</div><div class="s" style="left:246.20px;top:791.77px;font-size:13.5px;line-height:13.5px;letter-spacing:0.0px;color:#222;">Beam Info</div>
</body></html>
